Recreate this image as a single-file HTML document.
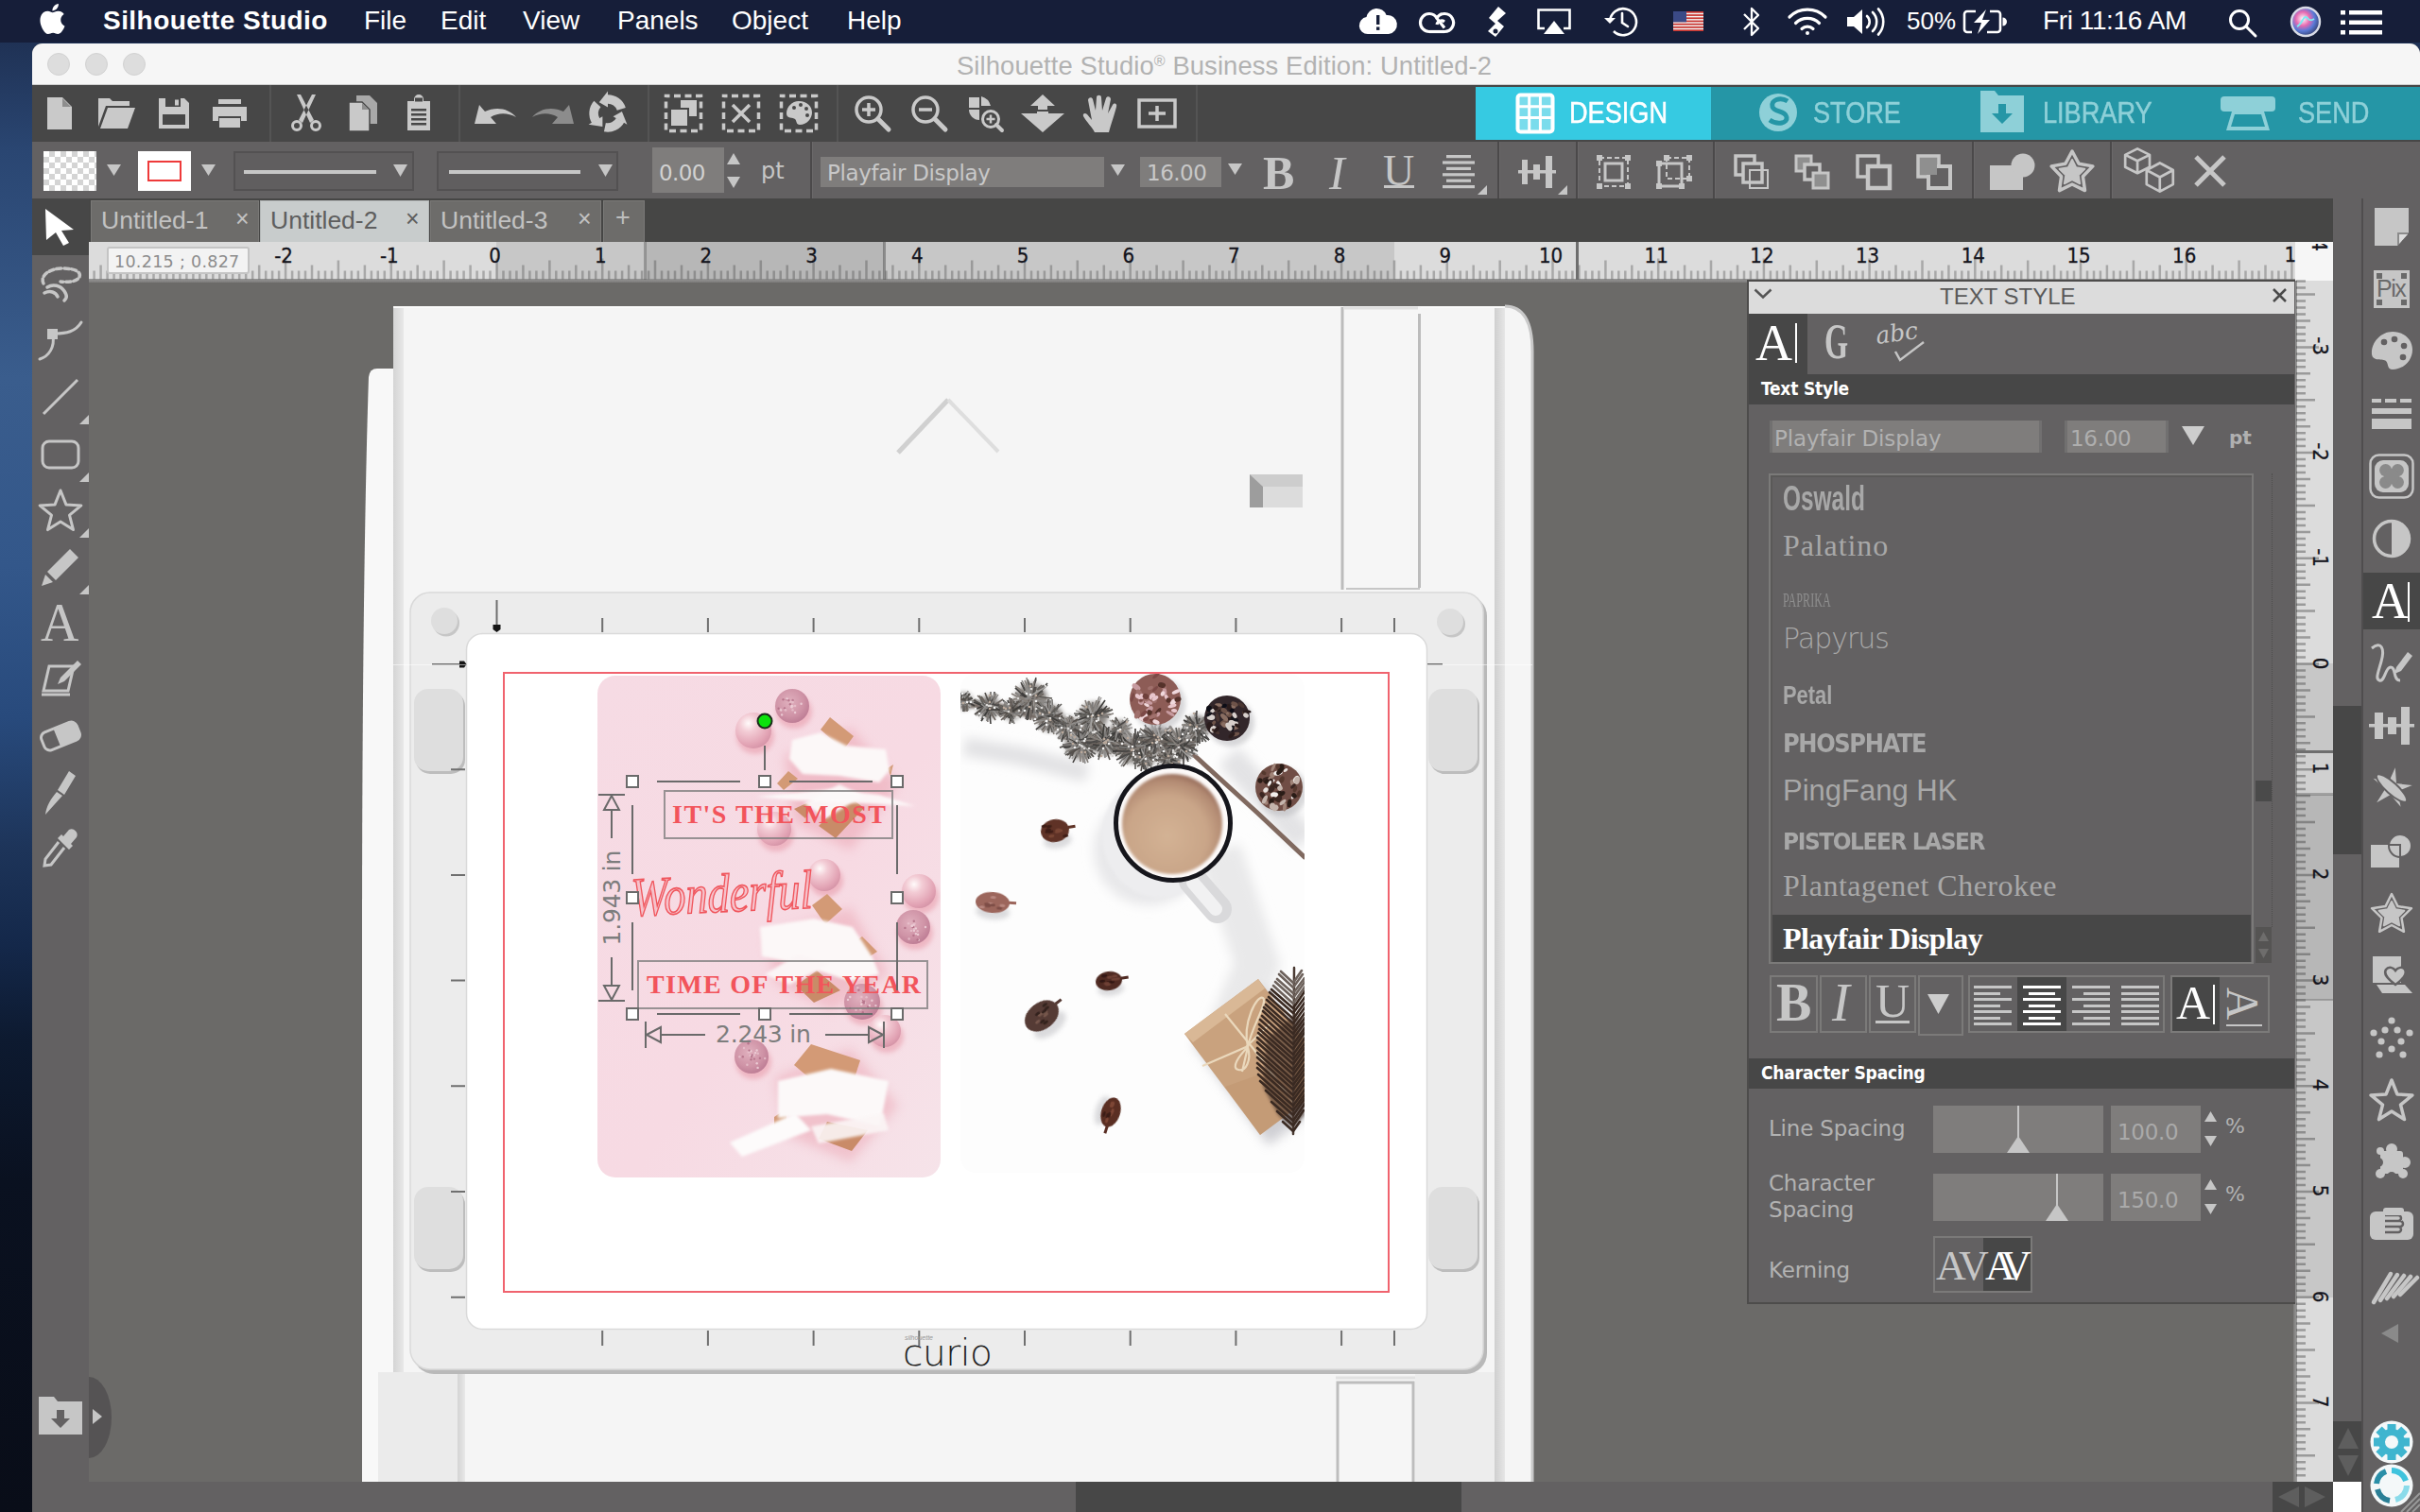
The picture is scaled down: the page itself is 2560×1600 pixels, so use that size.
<!DOCTYPE html>
<html lang="en"><head><meta charset="utf-8"><title>Silhouette Studio</title>
<style>
*{box-sizing:border-box;margin:0;padding:0}
html,body{width:2560px;height:1600px;overflow:hidden;background:#0c1424;font-family:"Liberation Sans",sans-serif}
.a{position:absolute}
.t{position:absolute;white-space:nowrap;line-height:1}
svg{position:absolute;overflow:visible}
#desk{left:0;top:0;width:2560px;height:1600px;background:linear-gradient(180deg,#1b2a4a 0px,#2a4672 160px,#3a5d8d 400px,#33578a 600px,#284a7c 760px,#1d3459 900px,#14284a 1000px,#0d1a30 1100px,#0a1120 1250px,#090d18 1600px)}
#menubar{left:0;top:0;width:2560px;height:45px;background:#161e39}
.mbt{color:#fff;font-size:28px;top:8px}
#win{left:34px;top:46px;width:2526px;height:1554px;background:#636162;border-radius:11px 11px 0 11px;overflow:hidden}
#title{left:34px;top:46px;width:2526px;height:44px;background:#f6f6f6;border-bottom:1px solid #cfcfcf;border-radius:11px 11px 0 0}
#tb1{left:34px;top:90px;width:2526px;height:60px;background:#474747}
#tb2{left:34px;top:150px;width:2526px;height:60px;background:#636162}
.sep1{position:absolute;top:90px;width:2px;height:60px;background:#545454}
.sep2{position:absolute;top:150px;width:2px;height:60px;background:#4b494a;box-shadow:1px 0 0 #6a6869}
.dj{font-family:"DejaVu Sans",sans-serif}
.rl{font-family:"DejaVu Sans Condensed","DejaVu Sans",sans-serif;font-size:22px;color:#14141c;-webkit-text-stroke:.3px #14141c}
</style></head><body>
<div id="desk" class="a"></div>
<div id="win" class="a"></div>
<div id="menubar" class="a"></div>
<div id="mb">
<svg style="left:42px;top:4px" width="27" height="32" viewBox="2 0 20 24"><path fill="#fff" d="M12.152 6.896c-.948 0-2.415-1.078-3.96-1.04-2.04.027-3.91 1.183-4.961 3.014-2.117 3.675-.546 9.103 1.519 12.09 1.013 1.454 2.208 3.09 3.792 3.039 1.52-.065 2.09-.987 3.935-.987 1.831 0 2.35.987 3.96.948 1.637-.026 2.676-1.48 3.676-2.948 1.156-1.688 1.636-3.325 1.662-3.415-.039-.013-3.182-1.221-3.22-4.857-.026-3.04 2.48-4.494 2.597-4.559-1.429-2.09-3.623-2.324-4.39-2.376-2-.156-3.675 1.09-4.61 1.09zM15.53 3.83c.843-1.012 1.4-2.427 1.245-3.83-1.207.052-2.662.805-3.532 1.818-.78.896-1.454 2.338-1.273 3.714 1.338.104 2.715-.688 3.559-1.701"/></svg>
<span class="t mbt" style="left:109px;font-weight:bold;letter-spacing:.45px">Silhouette Studio</span>
<span class="t mbt" style="left:385px">File</span>
<span class="t mbt" style="left:466px">Edit</span>
<span class="t mbt" style="left:553px">View</span>
<span class="t mbt" style="left:653px">Panels</span>
<span class="t mbt" style="left:774px">Object</span>
<span class="t mbt" style="left:896px">Help</span>
<span class="t mbt" style="left:2017px;font-size:26px;top:9px">50%</span>
<span class="t mbt" style="left:2161px;letter-spacing:-.4px">Fri 11:16 AM</span>
<!-- cloud -->
<svg style="left:1437px;top:8px" width="42" height="30" viewBox="0 0 42 30"><path fill="#fff" d="M10 28a9 9 0 0 1-1.5-17.9A11 11 0 0 1 29.6 8 10 10 0 0 1 32 28z"/><rect x="19" y="8" width="3.4" height="10" fill="#161e39"/><rect x="19" y="20.5" width="3.4" height="3.4" fill="#161e39"/></svg>
<!-- creative cloud -->
<svg style="left:1500px;top:9px" width="40" height="28" viewBox="0 0 40 28" fill="none" stroke="#fff" stroke-width="3.2"><path d="M12 24.5a9.5 9.5 0 0 1 0-19 9 9 0 0 1 8 5l8 10"/><path d="M28 24.5a9.5 9.5 0 1 0-8-14.5"/><path d="M12 24.5h16"/><path d="M20 17a5 5 0 0 1 8-3"/></svg>
<!-- S pen icon -->
<svg style="left:1568px;top:6px" width="28" height="34" viewBox="0 0 28 34"><path fill="#fff" d="M17 1l8 7-9 8 7 6-9 11-8-6 8-8-7-6z"/><circle cx="14" cy="27" r="2.5" fill="#161e39"/></svg>
<!-- airplay -->
<svg style="left:1625px;top:8px" width="38" height="30" viewBox="0 0 38 30"><path fill="none" stroke="#fff" stroke-width="2.6" d="M9 22H2.5V2.5h33V22H29"/><path fill="#fff" d="M19 14l11 14H8z"/></svg>
<!-- time machine -->
<svg style="left:1696px;top:5px" width="38" height="36" viewBox="0 0 38 36" fill="none" stroke="#fff" stroke-width="2.6"><path d="M7 18a14 14 0 1 1 4 10"/><path d="M20 9v10l6 4" stroke-linecap="round"/><path d="M1 14l6 6 6-6" fill="#fff" stroke="none"/></svg>
<!-- flag -->
<svg style="left:1770px;top:12px" width="32" height="21" viewBox="0 0 32 21"><rect width="32" height="21" fill="#f2f2f2"/><g fill="#c9342f"><rect y="0" width="32" height="1.7"/><rect y="3.2" width="32" height="1.7"/><rect y="6.4" width="32" height="1.7"/><rect y="9.6" width="32" height="1.7"/><rect y="12.8" width="32" height="1.7"/><rect y="16" width="32" height="1.7"/><rect y="19.3" width="32" height="1.7"/></g><rect width="14" height="11.3" fill="#3b4a86"/></svg>
<!-- bluetooth -->
<svg style="left:1843px;top:6px" width="20" height="34" viewBox="0 0 20 34" fill="none" stroke="#fff" stroke-width="2.3" stroke-linejoin="round"><path d="M2 9l15 15-7 7V3l7 7L2 25"/></svg>
<!-- wifi -->
<svg style="left:1890px;top:8px" width="44" height="30" viewBox="0 0 44 30" fill="none" stroke="#fff" stroke-width="3.2" stroke-linecap="round"><path d="M3 10a27 27 0 0 1 38 0"/><path d="M9.5 16.500a18 18 0 0 1 25 0"/><path d="M16 22.500a9 9 0 0 1 12 0"/><circle cx="22" cy="27" r="2" fill="#fff" stroke="none"/></svg>
<!-- volume -->
<svg style="left:1952px;top:8px" width="46" height="30" viewBox="0 0 46 30"><path fill="#fff" d="M2 10h7l9-8v26l-9-8H2z"/><g fill="none" stroke="#fff" stroke-width="2.6" stroke-linecap="round"><path d="M23 9a8 8 0 0 1 0 12"/><path d="M29 5a14 14 0 0 1 0 20"/><path d="M35 1.500a20 20 0 0 1 0 27"/></g></svg>
<!-- battery -->
<svg style="left:2076px;top:10px" width="48" height="26" viewBox="0 0 48 26"><path fill="none" stroke="#fff" stroke-width="2.6" d="M14 2H5a3 3 0 0 0-3 3v16a3 3 0 0 0 3 3h5M29 2h8a3 3 0 0 1 3 3v16a3 3 0 0 1-3 3H26"/><path fill="#fff" d="M42.500 8.500a4 4 0 0 1 0 9zM25 0l-13 14h8l-4 12 13-15h-8z"/></svg>
<!-- search -->
<svg style="left:2356px;top:8px" width="32" height="32" viewBox="0 0 32 32" fill="none" stroke="#fff" stroke-width="3"><circle cx="13" cy="13" r="9.500"/><path d="M20 20l10 10" stroke-linecap="round"/></svg>
<!-- siri -->
<svg style="left:2422px;top:6px" width="34" height="34" viewBox="0 0 34 34"><defs><radialGradient id="siri" cx=".4" cy=".4" r=".7"><stop offset="0" stop-color="#fff"/><stop offset=".35" stop-color="#e66ab0"/><stop offset=".6" stop-color="#5a7ad8"/><stop offset="1" stop-color="#2b2f4f"/></radialGradient></defs><circle cx="17" cy="17" r="15" fill="url(#siri)" stroke="#d8dbe6" stroke-width="2.4"/><path d="M8 22c5-2 6-10 9-10s3 6 9 2" stroke="#7fe9f2" stroke-width="2" fill="none"/></svg>
<!-- list -->
<svg style="left:2476px;top:11px" width="44" height="26" viewBox="0 0 44 26" fill="#fff"><rect x="0" y="0" width="5" height="4.500"/><rect x="9" y="0" width="35" height="4.500"/><rect x="0" y="10.500" width="5" height="4.500"/><rect x="9" y="10.500" width="35" height="4.500"/><rect x="0" y="21" width="5" height="4.500"/><rect x="9" y="21" width="35" height="4.500"/></svg>
</div>
<div class="a" style="left:94px;top:296px;width:2334px;height:1272px;background:#6b6a68"></div>
<div class="a" style="left:94px;top:210px;width:2374px;height:46px;background:#464645"></div>
<div class="a" style="left:96px;top:212px;width:178px;height:44px;background:#6d6c6a;border:1px solid #7a7977;border-bottom:none"></div>
<span class="t" style="left:107px;top:220px;font-size:26.500px;color:#c2c2c2">Untitled-1</span>
<span class="t" style="left:249px;top:219px;font-size:25px;color:#c2c2c2">×</span>
<div class="a" style="left:275px;top:212px;width:179px;height:44px;background:#c8cccc;border:1px solid #b4b8b8;border-bottom:none"></div>
<span class="t" style="left:286px;top:220px;font-size:26.500px;color:#5e5e5e">Untitled-2</span>
<span class="t" style="left:429px;top:219px;font-size:25px;color:#5e5e5e">×</span>
<div class="a" style="left:455px;top:212px;width:181px;height:44px;background:#6d6c6a;border:1px solid #7a7977;border-bottom:none"></div>
<span class="t" style="left:466px;top:220px;font-size:26.500px;color:#c2c2c2">Untitled-3</span>
<span class="t" style="left:611px;top:219px;font-size:25px;color:#c2c2c2">×</span>
<div class="a" style="left:638px;top:212px;width:44px;height:44px;background:#6d6c6a;border:1px solid #7a7977;border-bottom:none"></div><span class="t" style="left:651px;top:217px;font-size:27px;color:#bdbdbd">+</span>
<div class="a" style="left:34px;top:210px;width:60px;height:1390px;background:#636162"></div>
<div class="a" style="left:34px;top:210px;width:60px;height:60px;background:#474747"></div>
<svg style="left:48px;top:221px" width="32" height="38" viewBox="0 0 32 38"><path fill="#fff" d="M0 0l30 22-13 1 8 13-6 3-8-14-10 8z"/></svg>
<svg style="left:42px;top:280px" width="44" height="40" viewBox="0 0 44 40"><g fill="none" stroke="#c6c6c6" stroke-width="3.500" stroke-linecap="round"><path d="M4 20c-4-8 6-16 20-16s20 4 18 9-12 6-20 5" stroke-dasharray="5 3"/><path d="M8 24c6-4 14-2 18 4s2 8 0 10"/><path d="M5 30c6-3 12-1 14 4"/></g></svg>
<svg style="left:41px;top:339px" width="46" height="42" viewBox="0 0 46 42"><g fill="none" stroke="#c6c6c6" stroke-width="3" stroke-linecap="round"><path d="M45 2c-6 10-16 12-28 12"/><path d="M15 16c2 12-4 22-14 25"/></g><rect x="9" y="9" width="11" height="11" fill="#c6c6c6"/></svg>
<svg style="left:44px;top:400px" width="40" height="40" viewBox="0 0 40 40"><path d="M2 38L38 2" stroke="#c6c6c6" stroke-width="3"/></svg>
<svg style="left:43px;top:465px" width="42" height="32" viewBox="0 0 42 32"><rect x="2" y="2" width="38" height="28" rx="7" fill="none" stroke="#c6c6c6" stroke-width="3"/></svg>
<svg style="left:40px;top:517px" width="48" height="46" viewBox="0 0 48 46"><polygon points="24.0,2.0 29.9,16.9 45.9,17.9 33.5,28.1 37.5,43.6 24.0,35.0 10.5,43.6 14.5,28.1 2.1,17.9 18.1,16.9" fill="none" stroke="#c6c6c6" stroke-width="3" stroke-linejoin="round"/></svg>
<svg style="left:44px;top:580px" width="40" height="40" viewBox="0 0 40 40"><path fill="#c6c6c6" d="M30 1l9 9-24 24-9-9zM4 28l8 8-12 4z"/></svg>
<span class="t" style="left:43px;top:631px;font:56px 'Liberation Serif',serif;color:#c6c6c6;line-height:1">A</span>
<svg style="left:42px;top:699px" width="44" height="40" viewBox="0 0 44 40"><g fill="none" stroke="#c6c6c6" stroke-width="3"><path d="M10 6h26l-6 26H4z"/><path d="M2 36h30"/></g><path fill="#c6c6c6" d="M40 0l4 4-18 18-7 3 3-7z"/></svg>
<svg style="left:40px;top:761px" width="48" height="36" viewBox="0 0 48 36"><g transform="rotate(-22 24 18)"><rect x="4" y="8" width="40" height="20" rx="6" fill="none" stroke="#c6c6c6" stroke-width="3"/><path fill="#c6c6c6" d="M20 8h18a6 6 0 0 1 6 6v8a6 6 0 0 1-6 6H20z"/></g></svg>
<svg style="left:47px;top:816px" width="34" height="46" viewBox="0 0 34 46"><path fill="#c6c6c6" d="M26 0l7 5-12 20-7-5zM13 22l6 4-18 20c1-9 6-17 12-24z"/></svg>
<svg style="left:45px;top:878px" width="38" height="42" viewBox="0 0 38 42"><path fill="#c6c6c6" d="M28 0a6 6 0 0 1 8 8l-6 7 2 2-4 4-12-12 4-4 2 2z"/><path fill="none" stroke="#c6c6c6" stroke-width="3" d="M17 13L3 31l-1 7 7-1 14-18"/></svg>
<svg style="left:84px;top:439px" width="10" height="10"><path fill="#c6c6c6" d="M10 0v10H0z"/></svg>
<svg style="left:84px;top:500px" width="10" height="10"><path fill="#c6c6c6" d="M10 0v10H0z"/></svg>
<svg style="left:84px;top:559px" width="10" height="10"><path fill="#c6c6c6" d="M10 0v10H0z"/></svg>
<svg style="left:84px;top:619px" width="10" height="10"><path fill="#c6c6c6" d="M10 0v10H0z"/></svg>
<svg style="left:41px;top:1478px" width="46" height="40" viewBox="0 0 46 40"><path fill="#c6c6c6" d="M0 0h16l4 5h26v35H0z"/><path fill="#636162" d="M19 14h8v9h6L23 33 13 23h6z"/></svg>
<div class="a" style="left:94px;top:1457px;width:24px;height:86px;background:#555354;border-radius:0 24px 24px 0/0 43px 43px 0"></div>
<svg style="left:98px;top:1491px" width="10" height="16"><path fill="#c6c6c6" d="M0 0l10 8-10 8z"/></svg>
<div class="a" style="left:34px;top:1568px;width:2434px;height:32px;background:#636162"></div>
<div class="a" style="left:1138px;top:1568px;width:408px;height:32px;background:#474747"></div>
<div class="a" style="left:2404px;top:1568px;width:64px;height:32px;background:#474747"></div>
<svg style="left:2410px;top:1573px" width="22" height="22"><path fill="#5e5e5e" d="M22 0v22L0 11z"/></svg><svg style="left:2438px;top:1573px" width="22" height="22"><path fill="#5e5e5e" d="M0 0v22l22-11z"/></svg>
<div class="a" style="left:2468px;top:210px;width:92px;height:1390px;background:#636162"></div>
<div class="a" style="left:2468px;top:747px;width:31px;height:157px;background:#474747"></div>
<div class="a" style="left:2468px;top:1504px;width:31px;height:64px;background:#474747"></div>
<svg style="left:2473px;top:1511px" width="22" height="22"><path fill="#5e5e5e" d="M0 22h22L11 0z"/></svg><svg style="left:2473px;top:1540px" width="22" height="22"><path fill="#5e5e5e" d="M0 0h22L11 22z"/></svg>
<div class="a" style="left:2468px;top:1568px;width:31px;height:32px;background:#fff"></div>
<div class="a" style="left:2498px;top:210px;width:2px;height:1390px;background:#4f4d4e"></div>
<div class="a" style="left:94px;top:256px;width:431px;height:40px;background:#dcdcdc"></div>
<div class="a" style="left:525px;top:256px;width:158px;height:40px;background:#c7c7c7"></div>
<div class="a" style="left:683px;top:256px;width:252px;height:40px;background:#b7b7b7"></div>
<div class="a" style="left:935px;top:256px;width:540px;height:40px;background:#c7c7c7"></div>
<div class="a" style="left:1475px;top:256px;width:953px;height:40px;background:#dcdcdc"></div>
<div class="a" style="left:94px;top:295px;width:2334px;height:4px;background:linear-gradient(#969696,#7c7b7a)"></div>
<div class="a" style="left:2428px;top:256px;width:40px;height:41px;background:#f6f6f6"></div>
<svg style="left:0;top:0" width="2560" height="300"><path d="M99.6 295.500v-9M106.6 295.500v-15M113.6 295.500v-9M120.6 295.500v-9M127.6 295.500v-9M134.6 295.500v-20M141.5 295.500v-9M148.5 295.500v-9M155.5 295.500v-9M162.5 295.500v-15M169.5 295.500v-9M176.4 295.500v-9M183.4 295.500v-9M190.4 295.500v-22M197.4 295.500v-9M204.4 295.500v-9M211.3 295.500v-9M218.3 295.500v-15M225.3 295.500v-9M232.3 295.500v-9M239.3 295.500v-9M246.2 295.500v-20M253.2 295.500v-9M260.2 295.500v-9M267.2 295.500v-9M274.2 295.500v-15M281.2 295.500v-9M288.1 295.500v-9M295.1 295.500v-9M302.1 295.500v-22M309.1 295.500v-9M316.1 295.500v-9M323.0 295.500v-9M330.0 295.500v-15M337.0 295.500v-9M344.0 295.500v-9M351.0 295.500v-9M357.9 295.500v-20M364.9 295.500v-9M371.9 295.500v-9M378.9 295.500v-9M385.9 295.500v-15M392.9 295.500v-9M399.8 295.500v-9M406.8 295.500v-9M413.8 295.500v-22M420.8 295.500v-9M427.8 295.500v-9M434.7 295.500v-9M441.7 295.500v-15M448.7 295.500v-9M455.7 295.500v-9M462.7 295.500v-9M469.6 295.500v-20M476.6 295.500v-9M483.6 295.500v-9M490.6 295.500v-9M497.6 295.500v-15M504.6 295.500v-9M511.5 295.500v-9M518.5 295.500v-9M525.5 295.500v-22M532.5 295.500v-9M539.5 295.500v-9M546.4 295.500v-9M553.4 295.500v-15M560.4 295.500v-9M567.4 295.500v-9M574.4 295.500v-9M581.4 295.500v-20M588.3 295.500v-9M595.3 295.500v-9M602.3 295.500v-9M609.3 295.500v-15M616.3 295.500v-9M623.2 295.500v-9M630.2 295.500v-9M637.2 295.500v-22M644.2 295.500v-9M651.2 295.500v-9M658.1 295.500v-9M665.1 295.500v-15M672.1 295.500v-9M679.1 295.500v-9M686.1 295.500v-9M693.0 295.500v-20M700.0 295.500v-9M707.0 295.500v-9M714.0 295.500v-9M721.0 295.500v-15M728.0 295.500v-9M734.9 295.500v-9M741.9 295.500v-9M748.9 295.500v-22M755.9 295.500v-9M762.9 295.500v-9M769.8 295.500v-9M776.8 295.500v-15M783.8 295.500v-9M790.8 295.500v-9M797.8 295.500v-9M804.8 295.500v-20M811.7 295.500v-9M818.7 295.500v-9M825.7 295.500v-9M832.7 295.500v-15M839.7 295.500v-9M846.6 295.500v-9M853.6 295.500v-9M860.6 295.500v-22M867.6 295.500v-9M874.6 295.500v-9M881.5 295.500v-9M888.5 295.500v-15M895.5 295.500v-9M902.5 295.500v-9M909.5 295.500v-9M916.5 295.500v-20M923.4 295.500v-9M930.4 295.500v-9M937.4 295.500v-9M944.4 295.500v-15M951.4 295.500v-9M958.3 295.500v-9M965.3 295.500v-9M972.3 295.500v-22M979.3 295.500v-9M986.3 295.500v-9M993.2 295.500v-9M1000.2 295.500v-15M1007.2 295.500v-9M1014.2 295.500v-9M1021.2 295.500v-9M1028.2 295.500v-20M1035.1 295.500v-9M1042.1 295.500v-9M1049.1 295.500v-9M1056.1 295.500v-15M1063.1 295.500v-9M1070.0 295.500v-9M1077.0 295.500v-9M1084.0 295.500v-22M1091.0 295.500v-9M1098.0 295.500v-9M1104.9 295.500v-9M1111.9 295.500v-15M1118.9 295.500v-9M1125.9 295.500v-9M1132.9 295.500v-9M1139.8 295.500v-20M1146.8 295.500v-9M1153.8 295.500v-9M1160.8 295.500v-9M1167.8 295.500v-15M1174.8 295.500v-9M1181.7 295.500v-9M1188.7 295.500v-9M1195.7 295.500v-22M1202.7 295.500v-9M1209.7 295.500v-9M1216.6 295.500v-9M1223.6 295.500v-15M1230.6 295.500v-9M1237.6 295.500v-9M1244.6 295.500v-9M1251.6 295.500v-20M1258.5 295.500v-9M1265.5 295.500v-9M1272.5 295.500v-9M1279.5 295.500v-15M1286.5 295.500v-9M1293.4 295.500v-9M1300.4 295.500v-9M1307.4 295.500v-22M1314.4 295.500v-9M1321.4 295.500v-9M1328.3 295.500v-9M1335.3 295.500v-15M1342.3 295.500v-9M1349.3 295.500v-9M1356.3 295.500v-9M1363.2 295.500v-20M1370.2 295.500v-9M1377.2 295.500v-9M1384.2 295.500v-9M1391.2 295.500v-15M1398.2 295.500v-9M1405.1 295.500v-9M1412.1 295.500v-9M1419.1 295.500v-22M1426.1 295.500v-9M1433.1 295.500v-9M1440.0 295.500v-9M1447.0 295.500v-15M1454.0 295.500v-9M1461.0 295.500v-9M1468.0 295.500v-9M1475.0 295.500v-20M1481.9 295.500v-9M1488.9 295.500v-9M1495.9 295.500v-9M1502.9 295.500v-15M1509.9 295.500v-9M1516.8 295.500v-9M1523.8 295.500v-9M1530.8 295.500v-22M1537.8 295.500v-9M1544.8 295.500v-9M1551.7 295.500v-9M1558.7 295.500v-15M1565.7 295.500v-9M1572.7 295.500v-9M1579.7 295.500v-9M1586.7 295.500v-20M1593.6 295.500v-9M1600.6 295.500v-9M1607.6 295.500v-9M1614.6 295.500v-15M1621.6 295.500v-9M1628.5 295.500v-9M1635.5 295.500v-9M1642.5 295.500v-22M1649.5 295.500v-9M1656.5 295.500v-9M1663.4 295.500v-9M1670.4 295.500v-15M1677.4 295.500v-9M1684.4 295.500v-9M1691.4 295.500v-9M1698.4 295.500v-20M1705.3 295.500v-9M1712.3 295.500v-9M1719.3 295.500v-9M1726.3 295.500v-15M1733.3 295.500v-9M1740.2 295.500v-9M1747.2 295.500v-9M1754.2 295.500v-22M1761.2 295.500v-9M1768.2 295.500v-9M1775.1 295.500v-9M1782.1 295.500v-15M1789.1 295.500v-9M1796.1 295.500v-9M1803.1 295.500v-9M1810.0 295.500v-20M1817.0 295.500v-9M1824.0 295.500v-9M1831.0 295.500v-9M1838.0 295.500v-15M1845.0 295.500v-9M1851.9 295.500v-9M1858.9 295.500v-9M1865.9 295.500v-22M1872.9 295.500v-9M1879.9 295.500v-9M1886.8 295.500v-9M1893.8 295.500v-15M1900.8 295.500v-9M1907.8 295.500v-9M1914.8 295.500v-9M1921.8 295.500v-20M1928.7 295.500v-9M1935.7 295.500v-9M1942.7 295.500v-9M1949.7 295.500v-15M1956.7 295.500v-9M1963.6 295.500v-9M1970.6 295.500v-9M1977.6 295.500v-22M1984.6 295.500v-9M1991.6 295.500v-9M1998.5 295.500v-9M2005.5 295.500v-15M2012.5 295.500v-9M2019.5 295.500v-9M2026.5 295.500v-9M2033.5 295.500v-20M2040.4 295.500v-9M2047.4 295.500v-9M2054.4 295.500v-9M2061.4 295.500v-15M2068.4 295.500v-9M2075.3 295.500v-9M2082.3 295.500v-9M2089.3 295.500v-22M2096.3 295.500v-9M2103.3 295.500v-9M2110.2 295.500v-9M2117.2 295.500v-15M2124.2 295.500v-9M2131.2 295.500v-9M2138.2 295.500v-9M2145.2 295.500v-20M2152.1 295.500v-9M2159.1 295.500v-9M2166.1 295.500v-9M2173.1 295.500v-15M2180.1 295.500v-9M2187.0 295.500v-9M2194.0 295.500v-9M2201.0 295.500v-22M2208.0 295.500v-9M2215.0 295.500v-9M2221.9 295.500v-9M2228.9 295.500v-15M2235.9 295.500v-9M2242.9 295.500v-9M2249.9 295.500v-9M2256.9 295.500v-20M2263.8 295.500v-9M2270.8 295.500v-9M2277.8 295.500v-9M2284.8 295.500v-15M2291.8 295.500v-9M2298.7 295.500v-9M2305.7 295.500v-9M2312.7 295.500v-22M2319.7 295.500v-9M2326.7 295.500v-9M2333.6 295.500v-9M2340.6 295.500v-15M2347.6 295.500v-9M2354.6 295.500v-9M2361.6 295.500v-9M2368.6 295.500v-20M2375.5 295.500v-9M2382.5 295.500v-9M2389.5 295.500v-9M2396.5 295.500v-15M2403.5 295.500v-9M2410.4 295.500v-9M2417.4 295.500v-9M2424.4 295.500v-22" stroke="rgba(50,50,50,.3)" stroke-width="2.500" fill="none"/></svg>
<span class="t rl" style="left:270.1px;top:260px;width:60px;text-align:center">-2</span>
<span class="t rl" style="left:381.8px;top:260px;width:60px;text-align:center">-1</span>
<span class="t rl" style="left:493.5px;top:260px;width:60px;text-align:center">0</span>
<span class="t rl" style="left:605.2px;top:260px;width:60px;text-align:center">1</span>
<span class="t rl" style="left:716.9px;top:260px;width:60px;text-align:center">2</span>
<span class="t rl" style="left:828.6px;top:260px;width:60px;text-align:center">3</span>
<span class="t rl" style="left:940.3px;top:260px;width:60px;text-align:center">4</span>
<span class="t rl" style="left:1052.0px;top:260px;width:60px;text-align:center">5</span>
<span class="t rl" style="left:1163.7px;top:260px;width:60px;text-align:center">6</span>
<span class="t rl" style="left:1275.4px;top:260px;width:60px;text-align:center">7</span>
<span class="t rl" style="left:1387.1px;top:260px;width:60px;text-align:center">8</span>
<span class="t rl" style="left:1498.8px;top:260px;width:60px;text-align:center">9</span>
<span class="t rl" style="left:1610.5px;top:260px;width:60px;text-align:center">10</span>
<span class="t rl" style="left:1722.2px;top:260px;width:60px;text-align:center">11</span>
<span class="t rl" style="left:1833.9px;top:260px;width:60px;text-align:center">12</span>
<span class="t rl" style="left:1945.6px;top:260px;width:60px;text-align:center">13</span>
<span class="t rl" style="left:2057.3px;top:260px;width:60px;text-align:center">14</span>
<span class="t rl" style="left:2169.0px;top:260px;width:60px;text-align:center">15</span>
<span class="t rl" style="left:2280.7px;top:260px;width:60px;text-align:center">16</span>
<span class="t rl" style="left:2416.4px;top:259px">1</span>
<div class="a" style="left:681px;top:256px;width:3px;height:40px;background:rgba(90,90,90,.45)"></div>
<div class="a" style="left:934px;top:256px;width:3px;height:40px;background:rgba(90,90,90,.55)"></div>
<div class="a" style="left:1667px;top:256px;width:3px;height:40px;background:#6e6e6e"></div>
<div class="a" style="left:113px;top:261px;width:151px;height:29px;background:#f3f3f3;border:2px solid #c4c4c4;border-radius:3px"></div>
<span class="t dj" style="left:121px;top:269px;font-size:17.500px;color:#8c8c8c;letter-spacing:.3px">10.215 ; 0.827</span>
<div class="a" style="left:2428px;top:297px;width:40px;height:405px;background:#dcdcdc"></div>
<div class="a" style="left:2428px;top:702px;width:40px;height:92px;background:#c7c7c7"></div>
<div class="a" style="left:2428px;top:794px;width:40px;height:47px;background:#d0d0d0"></div>
<div class="a" style="left:2428px;top:841px;width:40px;height:217px;background:#b7b7b7"></div>
<div class="a" style="left:2428px;top:1058px;width:40px;height:315px;background:#c7c7c7"></div>
<div class="a" style="left:2428px;top:1373px;width:40px;height:195px;background:#dcdcdc"></div>
<div class="a" style="left:2426px;top:297px;width:4px;height:1271px;background:linear-gradient(90deg,#7c7b7a,#9a9a9a)"></div>
<svg style="left:0;top:0" width="2560" height="1600"><path d="M2429 297.6h10M2429 304.6h10M2429 311.6h20M2429 318.5h10M2429 325.5h10M2429 332.5h10M2429 339.5h15M2429 346.5h10M2429 353.4h10M2429 360.4h10M2429 367.4h24M2429 374.4h10M2429 381.4h10M2429 388.3h10M2429 395.3h15M2429 402.3h10M2429 409.3h10M2429 416.3h10M2429 423.2h20M2429 430.2h10M2429 437.2h10M2429 444.2h10M2429 451.2h15M2429 458.2h10M2429 465.1h10M2429 472.1h10M2429 479.1h24M2429 486.1h10M2429 493.1h10M2429 500.0h10M2429 507.0h15M2429 514.0h10M2429 521.0h10M2429 528.0h10M2429 535.0h20M2429 541.9h10M2429 548.9h10M2429 555.9h10M2429 562.9h15M2429 569.9h10M2429 576.8h10M2429 583.8h10M2429 590.8h24M2429 597.8h10M2429 604.8h10M2429 611.7h10M2429 618.7h15M2429 625.7h10M2429 632.7h10M2429 639.7h10M2429 646.6h20M2429 653.6h10M2429 660.6h10M2429 667.6h10M2429 674.6h15M2429 681.6h10M2429 688.5h10M2429 695.5h10M2429 702.5h24M2429 709.5h10M2429 716.5h10M2429 723.4h10M2429 730.4h15M2429 737.4h10M2429 744.4h10M2429 751.4h10M2429 758.4h20M2429 765.3h10M2429 772.3h10M2429 779.3h10M2429 786.3h15M2429 793.3h10M2429 800.2h10M2429 807.2h10M2429 814.2h24M2429 821.2h10M2429 828.2h10M2429 835.1h10M2429 842.1h15M2429 849.1h10M2429 856.1h10M2429 863.1h10M2429 870.0h20M2429 877.0h10M2429 884.0h10M2429 891.0h10M2429 898.0h15M2429 905.0h10M2429 911.9h10M2429 918.9h10M2429 925.9h24M2429 932.9h10M2429 939.9h10M2429 946.8h10M2429 953.8h15M2429 960.8h10M2429 967.8h10M2429 974.8h10M2429 981.8h20M2429 988.7h10M2429 995.7h10M2429 1002.7h10M2429 1009.7h15M2429 1016.7h10M2429 1023.6h10M2429 1030.6h10M2429 1037.6h24M2429 1044.6h10M2429 1051.6h10M2429 1058.5h10M2429 1065.5h15M2429 1072.5h10M2429 1079.5h10M2429 1086.5h10M2429 1093.5h20M2429 1100.4h10M2429 1107.4h10M2429 1114.4h10M2429 1121.4h15M2429 1128.4h10M2429 1135.3h10M2429 1142.3h10M2429 1149.3h24M2429 1156.3h10M2429 1163.3h10M2429 1170.2h10M2429 1177.2h15M2429 1184.2h10M2429 1191.2h10M2429 1198.2h10M2429 1205.2h20M2429 1212.1h10M2429 1219.1h10M2429 1226.1h10M2429 1233.1h15M2429 1240.1h10M2429 1247.0h10M2429 1254.0h10M2429 1261.0h24M2429 1268.0h10M2429 1275.0h10M2429 1281.9h10M2429 1288.9h15M2429 1295.9h10M2429 1302.9h10M2429 1309.9h10M2429 1316.8h20M2429 1323.8h10M2429 1330.8h10M2429 1337.8h10M2429 1344.8h15M2429 1351.8h10M2429 1358.7h10M2429 1365.7h10M2429 1372.7h24M2429 1379.7h10M2429 1386.7h10M2429 1393.6h10M2429 1400.6h15M2429 1407.6h10M2429 1414.6h10M2429 1421.6h10M2429 1428.6h20M2429 1435.5h10M2429 1442.5h10M2429 1449.5h10M2429 1456.5h15M2429 1463.5h10M2429 1470.4h10M2429 1477.4h10M2429 1484.4h24M2429 1491.4h10M2429 1498.4h10M2429 1505.3h10M2429 1512.3h15M2429 1519.3h10M2429 1526.3h10M2429 1533.3h10M2429 1540.2h20M2429 1547.2h10M2429 1554.2h10M2429 1561.2h10" stroke="rgba(40,40,40,.36)" stroke-width="2.500" fill="none"/></svg>
<span class="t rl" style="left:2424px;top:355.4px;width:60px;height:22px;text-align:center;transform:rotate(90deg)">-3</span>
<span class="t rl" style="left:2424px;top:467.1px;width:60px;height:22px;text-align:center;transform:rotate(90deg)">-2</span>
<span class="t rl" style="left:2424px;top:578.8px;width:60px;height:22px;text-align:center;transform:rotate(90deg)">-1</span>
<span class="t rl" style="left:2424px;top:690.5px;width:60px;height:22px;text-align:center;transform:rotate(90deg)">0</span>
<span class="t rl" style="left:2424px;top:802.2px;width:60px;height:22px;text-align:center;transform:rotate(90deg)">1</span>
<span class="t rl" style="left:2424px;top:913.9px;width:60px;height:22px;text-align:center;transform:rotate(90deg)">2</span>
<span class="t rl" style="left:2424px;top:1025.6px;width:60px;height:22px;text-align:center;transform:rotate(90deg)">3</span>
<span class="t rl" style="left:2424px;top:1137.3px;width:60px;height:22px;text-align:center;transform:rotate(90deg)">4</span>
<span class="t rl" style="left:2424px;top:1249.0px;width:60px;height:22px;text-align:center;transform:rotate(90deg)">5</span>
<span class="t rl" style="left:2424px;top:1360.7px;width:60px;height:22px;text-align:center;transform:rotate(90deg)">6</span>
<span class="t rl" style="left:2424px;top:1472.4px;width:60px;height:22px;text-align:center;transform:rotate(90deg)">7</span>
<span class="t rl" style="left:2424px;top:246px;width:60px;height:20px;text-align:center;transform:rotate(90deg);clip-path:inset(0 0 0 32px)">-4</span>
<div class="a" style="left:2428px;top:794px;width:40px;height:3px;background:#6e6e6e"></div>
<div class="a" style="left:2428px;top:839px;width:40px;height:3px;background:rgba(90,90,90,.4)"></div>
<div class="a" style="left:2428px;top:1057px;width:40px;height:2px;background:rgba(90,90,90,.35)"></div>
<svg style="left:0;top:0" width="2560" height="1600" viewBox="0 0 2560 1600"><defs><clipPath id="cv"><rect x="94" y="298" width="2332" height="1270"/></clipPath><linearGradient id="lstrip" x1="0" x2="1"><stop offset="0" stop-color="#d4d4d4"/><stop offset="1" stop-color="#e8e8e8"/></linearGradient><linearGradient id="rstrip" x1="0" x2="1"><stop offset="0" stop-color="#cfcfcf"/><stop offset="1" stop-color="#e6e6e6"/></linearGradient></defs><g clip-path="url(#cv)"><path d="M417 390H399Q391 390 390 399C386 520 383 720 383 1000V1568H417Z" fill="#f8f8f8"/><path d="M416 324H1591Q1621 324 1621 372V1568H416Z" fill="#f5f5f5"/><path d="M1592 324Q1621 324 1621 372V1568" fill="none" stroke="#c9c9c9" stroke-width="3"/><rect x="416" y="325" width="11" height="1127" fill="url(#lstrip)"/><rect x="416" y="324" width="1176" height="2" fill="#fafafa"/><rect x="1581" y="326" width="11" height="1242" fill="url(#rstrip)"/><rect x="1418" y="325" width="85" height="300" fill="#f6f6f6"/><path d="M1420 325V624M1501.500 332V622" stroke="#bcbcbc" stroke-width="3" fill="none"/><path d="M1424 623H1502" stroke="#c6c6c6" stroke-width="2"/><path d="M1421 326H1500" stroke="#e0e0e0" stroke-width="3"/><path d="M950 479L1003 423" stroke="#d0d0d0" stroke-width="5" fill="none"/><path d="M1003 423L1056 478" stroke="#dedede" stroke-width="4" fill="none"/><rect x="1322" y="502" width="56" height="35" fill="#dcdcdc"/><path d="M1322 502h56v13h-43z" fill="#cdcdcd"/><path d="M1322 502l14 13v22h-14z" fill="#9d9d9d"/><rect x="400" y="1452" width="88" height="116" fill="#ebebeb"/><rect x="484" y="1454" width="8" height="114" fill="url(#lstrip)"/><rect x="1413" y="1461" width="84" height="107" fill="#f6f6f6"/><path d="M1415 1568V1463H1495V1568" stroke="#bdbdbd" stroke-width="3" fill="none"/><path d="M1413 1458H1497" stroke="#e2e2e2" stroke-width="3"/><rect x="1497" y="1452" width="84" height="116" fill="#ededed"/><rect x="437" y="630" width="1136" height="824" rx="22" fill="#b9b9b9"/><rect x="434" y="627" width="1135" height="822" rx="21" fill="#ececec" stroke="#d9d9d9" stroke-width="1.500"/><rect x="440" y="732" width="52" height="87" rx="15" fill="#bdbdbd"/><rect x="438" y="729" width="52" height="87" rx="15" fill="#dedede"/><rect x="440" y="1259" width="52" height="87" rx="15" fill="#bdbdbd"/><rect x="438" y="1256" width="52" height="87" rx="15" fill="#dedede"/><rect x="1513" y="732" width="52" height="87" rx="15" fill="#bdbdbd"/><rect x="1511" y="729" width="52" height="87" rx="15" fill="#dedede"/><rect x="1513" y="1259" width="52" height="87" rx="15" fill="#bdbdbd"/><rect x="1511" y="1256" width="52" height="87" rx="15" fill="#dedede"/><rect x="493.500" y="670.500" width="1016" height="736" rx="17" fill="#fff" stroke="#dadada" stroke-width="1.500"/><circle cx="472" cy="659.5" r="14" fill="#c6c6c6"/><circle cx="470" cy="657" r="14" fill="#dedede"/><circle cx="1536" cy="660.5" r="14" fill="#c6c6c6"/><circle cx="1534" cy="658" r="14" fill="#dedede"/><path d="M637.2 654V669M637.2 1408V1424M748.9 654V669M748.9 1408V1424M860.6 654V669M860.6 1408V1424M972.3 654V669M972.3 1408V1424M1084.0 654V669M1084.0 1408V1424M1195.7 654V669M1195.7 1408V1424M1307.4 654V669M1307.4 1408V1424M1419.1 654V669M1419.1 1408V1424M1475.0 654V669M1475.0 1408V1424M477 814.2H492M477 925.9H492M477 1037.6H492M477 1149.3H492M477 1261.0H492M477 1372.7H492M1510 703H1526M525.500 635V664M457 703H489" stroke="#6f6f6f" stroke-width="2" fill="none"/><path d="M521.500 661h8v5l-4 3-4-3zM486 699.500h5l2.500 3.500-2.500 3.500h-5z" fill="#151515"/><path d="M416 703.500H493M1510 703.500H1621" stroke="#fff" stroke-opacity=".55" stroke-width="1"/><rect x="533" y="712" width="936" height="655" fill="none" stroke="#f0636e" stroke-width="2"/></g></svg>
<span class="t" style="left:955px;top:1409px;font:300 39px 'DejaVu Sans Light','DejaVu Sans',sans-serif;color:#222;letter-spacing:-.5px">curio</span>
<span class="t" style="left:957px;top:1412px;font:italic 7px 'Liberation Sans',sans-serif;color:#999">silhouette</span>
<svg style="left:0;top:0" width="2560" height="1600" viewBox="0 0 2560 1600"><defs>
<clipPath id="pk"><rect x="632" y="715" width="363" height="531" rx="19"/></clipPath>
<clipPath id="wh"><rect x="1016" y="713" width="364" height="528" rx="16"/></clipPath>
<filter id="b05" x="-20%" y="-20%" width="140%" height="140%"><feGaussianBlur stdDeviation="0.7"/></filter>
<filter id="b1" x="-20%" y="-20%" width="140%" height="140%"><feGaussianBlur stdDeviation="1.6"/></filter>
<filter id="b2" x="-30%" y="-30%" width="160%" height="160%"><feGaussianBlur stdDeviation="2.5"/></filter>
<filter id="b4" x="-40%" y="-40%" width="180%" height="180%"><feGaussianBlur stdDeviation="6"/></filter>
<radialGradient id="ballB" cx=".36" cy=".3" r=".8"><stop offset="0" stop-color="#fffafa"/><stop offset=".3" stop-color="#f3ccd5"/><stop offset=".75" stop-color="#e2a3b4"/><stop offset="1" stop-color="#cf8da1"/></radialGradient>
<radialGradient id="ballC" cx=".42" cy=".38" r=".7"><stop offset="0" stop-color="#e0b0be"/><stop offset=".6" stop-color="#cf93a6"/><stop offset="1" stop-color="#b97790"/></radialGradient>
<radialGradient id="cof" cx=".45" cy=".62" r=".62"><stop offset="0" stop-color="#d3b294"/><stop offset=".65" stop-color="#c9a588"/><stop offset=".9" stop-color="#b28a72"/><stop offset="1" stop-color="#9a705e"/></radialGradient>
<linearGradient id="pkbg" x1="0" y1="0" x2="1" y2="1"><stop offset="0" stop-color="#f6dbe4"/><stop offset=".55" stop-color="#f7dae3"/><stop offset="1" stop-color="#f6e3e9"/></linearGradient>
</defs>
<g clip-path="url(#pk)">
<rect x="632" y="715" width="363" height="531" fill="url(#pkbg)"/>
<polygon points="830,800 900,770 950,830 900,900 840,870" fill="#eba5b2" opacity="0.55" filter="url(#b4)"/>
<ellipse cx="840" cy="753" rx="19" ry="18" fill="#e590a0" opacity=".5" filter="url(#b2)"/><circle cx="838" cy="747" r="18" fill="url(#ballC)" filter="url(#b05)"/><g opacity=".8"><circle cx="830.0" cy="749.5" r="1.2" fill="#b06c84"/><circle cx="825.8" cy="750.8" r="1.2" fill="#e9c4cf"/><circle cx="841.1" cy="754.0" r="1.2" fill="#f2d8df"/><circle cx="835.9" cy="745.2" r="1.2" fill="#b06c84"/><circle cx="837.6" cy="748.3" r="1.2" fill="#f2d8df"/><circle cx="832.1" cy="740.3" r="1.2" fill="#b06c84"/><circle cx="847.6" cy="744.8" r="1.2" fill="#f2d8df"/><circle cx="832.5" cy="739.4" r="1.2" fill="#f2d8df"/><circle cx="838.5" cy="747.2" r="1.2" fill="#e9c4cf"/><circle cx="828.5" cy="740.2" r="1.2" fill="#b06c84"/><circle cx="826.2" cy="751.6" r="1.2" fill="#f2d8df"/><circle cx="838.5" cy="751.4" r="1.2" fill="#e9c4cf"/><circle cx="834.4" cy="741.2" r="1.2" fill="#b06c84"/><circle cx="831.1" cy="751.6" r="1.2" fill="#e9c4cf"/><circle cx="836.8" cy="742.4" r="1.2" fill="#e9c4cf"/><circle cx="837.6" cy="747.0" r="1.2" fill="#f2d8df"/><circle cx="838.6" cy="741.0" r="1.2" fill="#b06c84"/><circle cx="827.1" cy="756.4" r="1.2" fill="#f2d8df"/><circle cx="841.1" cy="747.0" r="1.2" fill="#e9c4cf"/><circle cx="823.6" cy="749.8" r="1.2" fill="#b06c84"/><circle cx="830.6" cy="751.1" r="1.2" fill="#e9c4cf"/><circle cx="838.7" cy="743.0" r="1.2" fill="#e9c4cf"/></g>
<ellipse cx="799" cy="779" rx="20" ry="19" fill="#e590a0" opacity=".5" filter="url(#b2)"/><circle cx="797" cy="773" r="19" fill="url(#ballB)" filter="url(#b05)"/>
<polygon points="868,772 878,759 903,779 892,794" fill="#d39a76" opacity="1" filter="url(#b05)"/>
<polygon points="822,829 834,816 844,824 829,836" fill="#d39a76" opacity="1" filter="url(#b05)"/>
<polygon points="866,874 897,842 914,855 884,887" fill="#c98b68" opacity="1" filter="url(#b05)"/>
<polygon points="840,856 862,846 852,866" fill="#c98b68" opacity="1" filter="url(#b05)"/>
<polygon points="939,813 945,809 942,821" fill="#d39a76" opacity="1" filter="url(#b05)"/>
<polygon points="838,783 868,775 895,789 937,793 941,815 930,828 888,821 849,819 835,803" fill="#fcf8f8" opacity="1" filter="url(#b1)"/>
<polygon points="850,850 888,830 913,842 874,866" fill="#fbf4f5" opacity="1" filter="url(#b1)"/>
<polygon points="800,843 878,835 930,841 968,853 912,850 843,847" fill="#fdfafa" opacity="0.95" filter="url(#b1)"/>
<ellipse cx="821" cy="883" rx="19" ry="18" fill="#e590a0" opacity=".5" filter="url(#b2)"/><circle cx="819" cy="877" r="18" fill="url(#ballB)" filter="url(#b05)"/>
<ellipse cx="874" cy="932" rx="18" ry="17" fill="#e590a0" opacity=".5" filter="url(#b2)"/><circle cx="872" cy="926" r="17" fill="url(#ballB)" filter="url(#b05)"/>
<ellipse cx="974" cy="949" rx="19" ry="18" fill="#e590a0" opacity=".5" filter="url(#b2)"/><circle cx="972" cy="943" r="18" fill="url(#ballB)" filter="url(#b05)"/>
<ellipse cx="968" cy="987" rx="19" ry="18" fill="#e590a0" opacity=".5" filter="url(#b2)"/><circle cx="966" cy="981" r="18" fill="url(#ballC)" filter="url(#b05)"/><g opacity=".8"><circle cx="965.9" cy="981.2" r="1.2" fill="#b06c84"/><circle cx="966.1" cy="979.2" r="1.2" fill="#e9c4cf"/><circle cx="966.0" cy="980.8" r="1.2" fill="#b06c84"/><circle cx="966.8" cy="978.5" r="1.2" fill="#f2d8df"/><circle cx="968.9" cy="988.1" r="1.2" fill="#f2d8df"/><circle cx="966.8" cy="974.8" r="1.2" fill="#b06c84"/><circle cx="970.7" cy="985.2" r="1.2" fill="#e9c4cf"/><circle cx="979.0" cy="981.0" r="1.2" fill="#f2d8df"/><circle cx="961.6" cy="993.5" r="1.2" fill="#e9c4cf"/><circle cx="971.7" cy="994.8" r="1.2" fill="#f2d8df"/><circle cx="965.1" cy="979.8" r="1.2" fill="#e9c4cf"/><circle cx="966.9" cy="984.8" r="1.2" fill="#f2d8df"/><circle cx="963.9" cy="984.9" r="1.2" fill="#e9c4cf"/><circle cx="968.8" cy="982.4" r="1.2" fill="#f2d8df"/><circle cx="966.4" cy="990.0" r="1.2" fill="#b06c84"/><circle cx="964.6" cy="979.7" r="1.2" fill="#f2d8df"/><circle cx="957.4" cy="981.9" r="1.2" fill="#b06c84"/><circle cx="966.9" cy="983.1" r="1.2" fill="#e9c4cf"/><circle cx="967.5" cy="977.6" r="1.2" fill="#e9c4cf"/><circle cx="971.1" cy="988.9" r="1.2" fill="#f2d8df"/><circle cx="970.7" cy="994.5" r="1.2" fill="#b06c84"/><circle cx="961.0" cy="977.2" r="1.2" fill="#e9c4cf"/></g>
<polygon points="810,990 900,960 940,1030 880,1070 820,1040" fill="#eba5b2" opacity="0.5" filter="url(#b4)"/>
<polygon points="859,958 875,946 891,962 873,978" fill="#d39a76" opacity="1" filter="url(#b05)"/>
<polygon points="895,1003 912,991 928,1007 917,1014" fill="#d39a76" opacity="1" filter="url(#b05)"/>
<polygon points="842,1043 864,1027 889,1048 861,1061" fill="#c98b68" opacity="1" filter="url(#b05)"/>
<polygon points="804,981 861,972 902,981 923,1013 930,1031 899,1038 844,1020 806,1012" fill="#fcf8f8" opacity="1" filter="url(#b1)"/>
<polygon points="809,1031 844,1010 878,1020 835,1042" fill="#fbf5f6" opacity="1" filter="url(#b1)"/>
<ellipse cx="914" cy="1066" rx="20" ry="19" fill="#e590a0" opacity=".5" filter="url(#b2)"/><circle cx="912" cy="1060" r="19" fill="url(#ballC)" filter="url(#b05)"/><g opacity=".8"><circle cx="918.3" cy="1065.2" r="1.2" fill="#b06c84"/><circle cx="912.8" cy="1071.2" r="1.2" fill="#b06c84"/><circle cx="899.3" cy="1066.9" r="1.2" fill="#b06c84"/><circle cx="911.2" cy="1062.7" r="1.2" fill="#f2d8df"/><circle cx="914.0" cy="1059.7" r="1.2" fill="#b06c84"/><circle cx="899.3" cy="1055.0" r="1.2" fill="#f2d8df"/><circle cx="915.0" cy="1061.5" r="1.2" fill="#e9c4cf"/><circle cx="912.0" cy="1058.9" r="1.2" fill="#b06c84"/><circle cx="911.1" cy="1060.3" r="1.2" fill="#e9c4cf"/><circle cx="910.3" cy="1068.3" r="1.2" fill="#e9c4cf"/><circle cx="913.9" cy="1061.2" r="1.2" fill="#b06c84"/><circle cx="922.4" cy="1058.7" r="1.2" fill="#f2d8df"/><circle cx="897.0" cy="1057.9" r="1.2" fill="#f2d8df"/><circle cx="912.3" cy="1060.1" r="1.2" fill="#b06c84"/><circle cx="907.3" cy="1045.3" r="1.2" fill="#e9c4cf"/><circle cx="911.0" cy="1059.3" r="1.2" fill="#e9c4cf"/><circle cx="911.4" cy="1054.9" r="1.2" fill="#e9c4cf"/><circle cx="919.8" cy="1064.0" r="1.2" fill="#f2d8df"/><circle cx="926.4" cy="1064.1" r="1.2" fill="#f2d8df"/><circle cx="908.4" cy="1047.8" r="1.2" fill="#b06c84"/><circle cx="905.5" cy="1068.8" r="1.2" fill="#e9c4cf"/><circle cx="916.6" cy="1055.2" r="1.2" fill="#e9c4cf"/></g>
<ellipse cx="938" cy="1097" rx="18" ry="17" fill="#e590a0" opacity=".5" filter="url(#b2)"/><circle cx="936" cy="1091" r="17" fill="url(#ballB)" filter="url(#b05)"/>
<ellipse cx="797" cy="1124" rx="19" ry="18" fill="#e590a0" opacity=".5" filter="url(#b2)"/><circle cx="795" cy="1118" r="18" fill="url(#ballC)" filter="url(#b05)"/><g opacity=".8"><circle cx="800.6" cy="1111.5" r="1.2" fill="#f2d8df"/><circle cx="792.0" cy="1113.2" r="1.2" fill="#e9c4cf"/><circle cx="794.1" cy="1117.2" r="1.2" fill="#f2d8df"/><circle cx="797.9" cy="1120.6" r="1.2" fill="#b06c84"/><circle cx="794.2" cy="1112.2" r="1.2" fill="#f2d8df"/><circle cx="792.6" cy="1111.6" r="1.2" fill="#b06c84"/><circle cx="795.7" cy="1116.9" r="1.2" fill="#f2d8df"/><circle cx="803.9" cy="1119.7" r="1.2" fill="#b06c84"/><circle cx="809.2" cy="1120.0" r="1.2" fill="#e9c4cf"/><circle cx="785.8" cy="1118.2" r="1.2" fill="#b06c84"/><circle cx="795.0" cy="1118.2" r="1.2" fill="#b06c84"/><circle cx="800.7" cy="1125.2" r="1.2" fill="#f2d8df"/><circle cx="801.6" cy="1129.9" r="1.2" fill="#f2d8df"/><circle cx="801.8" cy="1114.8" r="1.2" fill="#e9c4cf"/><circle cx="790.4" cy="1126.8" r="1.2" fill="#e9c4cf"/><circle cx="787.0" cy="1109.0" r="1.2" fill="#e9c4cf"/><circle cx="799.2" cy="1114.1" r="1.2" fill="#f2d8df"/><circle cx="797.8" cy="1116.5" r="1.2" fill="#e9c4cf"/><circle cx="782.4" cy="1118.3" r="1.2" fill="#e9c4cf"/><circle cx="791.6" cy="1104.2" r="1.2" fill="#b06c84"/><circle cx="795.7" cy="1116.5" r="1.2" fill="#b06c84"/><circle cx="794.5" cy="1121.2" r="1.2" fill="#b06c84"/></g>
<polygon points="820,1140 900,1110 950,1170 900,1230 830,1200" fill="#eba5b2" opacity="0.5" filter="url(#b4)"/>
<polygon points="840,1127 858,1105 910,1122 897,1162 866,1149" fill="#d39a76" opacity="1" filter="url(#b05)"/>
<polygon points="875,1187 918,1196 901,1218 866,1205" fill="#c98b68" opacity="1" filter="url(#b05)"/>
<polygon points="819,1182 832,1173 832,1199 819,1203" fill="#d39a76" opacity="1" filter="url(#b05)"/>
<polygon points="823,1144 879,1131 940,1144 931,1192 875,1179 823,1183" fill="#fcf9f9" opacity="1" filter="url(#b1)"/>
<polygon points="772,1209 841,1178 858,1196 785,1224" fill="#fdfbfb" opacity="1" filter="url(#b1)"/>
<polygon points="858,1192 935,1178 940,1196 866,1210" fill="#fbf6f6" opacity="0.9" filter="url(#b1)"/>
</g>
<g clip-path="url(#wh)">
<rect x="1016" y="713" width="364" height="528" fill="#fdfdfd"/>
<g filter="url(#b4)"><path d="M1020 790L1080 800L1150 818" stroke="#e2e2e4" stroke-width="20" fill="none"/><path d="M1290 900L1330 1020L1300 1090" stroke="#e9e9ea" stroke-width="46" fill="none"/><path d="M1300 800L1380 890" stroke="#e3e3e5" stroke-width="28" fill="none"/><circle cx="1215" cy="900" r="58" fill="#e8e8ea"/></g>
<path d="M1262 798L1330 860L1381 908" stroke="#80695f" stroke-width="5" fill="none" filter="url(#b05)"/>
<path d="M1016 746L1060 748L1119 766L1160 784L1198 795L1262 790" stroke="#6e625a" stroke-width="5" fill="none" filter="url(#b1)"/>
<g filter="url(#b2)" opacity=".8"><circle cx="1020" cy="742" r="9" fill="#6f6a66"/><circle cx="1046" cy="748" r="12" fill="#6f6a66"/><circle cx="1091" cy="740" r="17" fill="#6f6a66"/><circle cx="1111" cy="760" r="14" fill="#6f6a66"/><circle cx="1157" cy="758" r="15" fill="#6f6a66"/><circle cx="1143" cy="787" r="16" fill="#6f6a66"/><circle cx="1169" cy="785" r="14" fill="#6f6a66"/><circle cx="1198" cy="793" r="15" fill="#6f6a66"/><circle cx="1224" cy="782" r="14" fill="#6f6a66"/><circle cx="1248" cy="788" r="16" fill="#6f6a66"/><circle cx="1266" cy="770" r="13" fill="#6f6a66"/><circle cx="1070" cy="752" r="10" fill="#6f6a66"/><circle cx="1130" cy="770" r="12" fill="#6f6a66"/><circle cx="1185" cy="772" r="10" fill="#6f6a66"/><circle cx="1212" cy="802" r="10" fill="#6f6a66"/><circle cx="1236" cy="802" r="10" fill="#6f6a66"/></g>
<g stroke-width="1.600" fill="none" filter="url(#b05)"><path d="M1022 745L1013 748" stroke="#a4a2a0"/><path d="M1018 743L1015 737" stroke="#5f5d5a"/><path d="M1018 744L1017 735" stroke="#a4a2a0"/><path d="M1018 744L1026 743" stroke="#3e3c3a"/><path d="M1024 739L1019 753" stroke="#5f5d5a"/><path d="M1024 743L1027 748" stroke="#a4a2a0"/><path d="M1022 744L1023 750" stroke="#4c4a48"/><path d="M1018 741L1014 741" stroke="#8f8d8b"/><path d="M1019 744L1017 733" stroke="#4c4a48"/><path d="M1017 742L1025 739" stroke="#54504c"/><path d="M1020 743L1012 734" stroke="#54504c"/><path d="M1020 743L1009 742" stroke="#a4a2a0"/><path d="M1018 745L1023 752" stroke="#7a7876"/><path d="M1024 745L1032 740" stroke="#857f7a"/><path d="M1019 739L1019 753" stroke="#5f5d5a"/><path d="M1020 738L1011 745" stroke="#6b645e"/><path d="M1017 741L1022 737" stroke="#5f5d5a"/><path d="M1024 745L1022 736" stroke="#4c4a48"/><path d="M1024 742L1010 741" stroke="#3e3c3a"/><path d="M1020 742L1026 740" stroke="#8f8d8b"/><path d="M1020 745L1025 734" stroke="#4c4a48"/><path d="M1024 745L1013 739" stroke="#54504c"/><path d="M1024 742L1014 737" stroke="#4c4a48"/><path d="M1017 738L1014 739" stroke="#857f7a"/><path d="M1020 741L1013 748" stroke="#5f5d5a"/><path d="M1017 739L1023 733" stroke="#3e3c3a"/><path d="M1018 742L1028 738" stroke="#54504c"/><path d="M1020 739L1026 748" stroke="#3e3c3a"/><path d="M1017 744L1015 745" stroke="#6b645e"/><path d="M1016 740L1027 743" stroke="#8f8d8b"/><path d="M1017 744L1019 735" stroke="#3e3c3a"/><path d="M1022 744L1027 748" stroke="#6b645e"/><path d="M1023 743L1024 738" stroke="#54504c"/><path d="M1021 742L1009 739" stroke="#857f7a"/><path d="M1018 744L1026 734" stroke="#4c4a48"/><path d="M1021 745L1024 731" stroke="#a4a2a0"/><path d="M1023 739L1024 752" stroke="#8f8d8b"/><path d="M1019 741L1021 753" stroke="#6b645e"/><path d="M1018 743L1029 739" stroke="#4c4a48"/><path d="M1023 746L1022 736" stroke="#a4a2a0"/><path d="M1020 743L1027 748" stroke="#a4a2a0"/><path d="M1016 744L1022 747" stroke="#7a7876"/><path d="M1017 739L1011 734" stroke="#3e3c3a"/><path d="M1023 739L1023 753" stroke="#6b645e"/><path d="M1017 739L1031 747" stroke="#3e3c3a"/><path d="M1019 743L1013 747" stroke="#a4a2a0"/><path d="M1017 742L1030 743" stroke="#8f8d8b"/><path d="M1021 739L1019 734" stroke="#8f8d8b"/><path d="M1022 744L1022 735" stroke="#7a7876"/><path d="M1021 740L1026 734" stroke="#54504c"/><path d="M1018 739L1013 738" stroke="#6b645e"/><path d="M1017 741L1020 735" stroke="#54504c"/><path d="M1022 741L1012 740" stroke="#54504c"/><path d="M1018 739L1019 736" stroke="#a4a2a0"/><path d="M1042 746L1047 760" stroke="#857f7a"/><path d="M1044 747L1040 754" stroke="#6b645e"/><path d="M1047 752L1034 745" stroke="#857f7a"/><path d="M1046 749L1036 736" stroke="#7a7876"/><path d="M1045 752L1057 745" stroke="#4c4a48"/><path d="M1045 748L1054 738" stroke="#5f5d5a"/><path d="M1045 746L1043 759" stroke="#6b645e"/><path d="M1047 750L1038 737" stroke="#6b645e"/><path d="M1047 747L1061 751" stroke="#5f5d5a"/><path d="M1048 744L1043 740" stroke="#a4a2a0"/><path d="M1048 746L1063 747" stroke="#7a7876"/><path d="M1042 745L1044 738" stroke="#8f8d8b"/><path d="M1050 751L1052 732" stroke="#4c4a48"/><path d="M1046 746L1039 743" stroke="#54504c"/><path d="M1045 745L1058 752" stroke="#7a7876"/><path d="M1045 750L1034 755" stroke="#54504c"/><path d="M1048 746L1050 740" stroke="#6b645e"/><path d="M1047 747L1059 759" stroke="#857f7a"/><path d="M1047 750L1044 763" stroke="#8f8d8b"/><path d="M1049 744L1050 757" stroke="#8f8d8b"/><path d="M1042 744L1056 752" stroke="#54504c"/><path d="M1049 745L1048 758" stroke="#7a7876"/><path d="M1046 746L1048 766" stroke="#3e3c3a"/><path d="M1048 748L1038 761" stroke="#7a7876"/><path d="M1046 750L1053 733" stroke="#8f8d8b"/><path d="M1047 752L1039 754" stroke="#4c4a48"/><path d="M1045 747L1040 760" stroke="#4c4a48"/><path d="M1046 747L1060 757" stroke="#7a7876"/><path d="M1044 750L1031 741" stroke="#3e3c3a"/><path d="M1048 748L1055 753" stroke="#7a7876"/><path d="M1044 749L1047 737" stroke="#4c4a48"/><path d="M1048 749L1038 763" stroke="#a4a2a0"/><path d="M1046 750L1061 740" stroke="#6b645e"/><path d="M1050 750L1042 758" stroke="#54504c"/><path d="M1042 749L1038 747" stroke="#a4a2a0"/><path d="M1048 748L1032 740" stroke="#a4a2a0"/><path d="M1043 748L1053 737" stroke="#4c4a48"/><path d="M1046 748L1056 735" stroke="#8f8d8b"/><path d="M1043 748L1030 741" stroke="#54504c"/><path d="M1044 745L1048 740" stroke="#7a7876"/><path d="M1043 751L1043 755" stroke="#4c4a48"/><path d="M1048 748L1033 755" stroke="#3e3c3a"/><path d="M1048 747L1047 736" stroke="#a4a2a0"/><path d="M1048 751L1054 758" stroke="#7a7876"/><path d="M1049 750L1032 757" stroke="#a4a2a0"/><path d="M1047 748L1054 734" stroke="#857f7a"/><path d="M1049 751L1042 733" stroke="#54504c"/><path d="M1047 747L1046 757" stroke="#54504c"/><path d="M1050 744L1036 756" stroke="#6b645e"/><path d="M1048 745L1043 756" stroke="#4c4a48"/><path d="M1049 744L1057 753" stroke="#3e3c3a"/><path d="M1047 749L1053 754" stroke="#8f8d8b"/><path d="M1043 746L1033 750" stroke="#3e3c3a"/><path d="M1047 752L1053 762" stroke="#6b645e"/><path d="M1049 751L1030 743" stroke="#3e3c3a"/><path d="M1046 746L1039 759" stroke="#7a7876"/><path d="M1050 750L1062 753" stroke="#54504c"/><path d="M1047 746L1048 732" stroke="#5f5d5a"/><path d="M1046 746L1058 749" stroke="#a4a2a0"/><path d="M1043 747L1031 756" stroke="#54504c"/><path d="M1043 750L1045 764" stroke="#857f7a"/><path d="M1043 750L1037 739" stroke="#5f5d5a"/><path d="M1049 745L1062 748" stroke="#4c4a48"/><path d="M1049 750L1044 763" stroke="#7a7876"/><path d="M1049 746L1059 756" stroke="#857f7a"/><path d="M1048 748L1049 736" stroke="#7a7876"/><path d="M1043 751L1058 751" stroke="#3e3c3a"/><path d="M1046 752L1042 758" stroke="#7a7876"/><path d="M1047 745L1042 741" stroke="#7a7876"/><path d="M1047 744L1036 756" stroke="#7a7876"/><path d="M1044 745L1035 758" stroke="#8f8d8b"/><path d="M1049 745L1048 732" stroke="#8f8d8b"/><path d="M1050 750L1034 736" stroke="#6b645e"/><path d="M1044 750L1038 745" stroke="#8f8d8b"/><path d="M1048 747L1038 763" stroke="#3e3c3a"/><path d="M1047 745L1050 740" stroke="#4c4a48"/><path d="M1089 738L1081 724" stroke="#5f5d5a"/><path d="M1090 740L1085 755" stroke="#857f7a"/><path d="M1089 740L1096 719" stroke="#4c4a48"/><path d="M1091 741L1087 753" stroke="#857f7a"/><path d="M1092 736L1098 762" stroke="#8f8d8b"/><path d="M1089 741L1080 722" stroke="#4c4a48"/><path d="M1089 743L1086 726" stroke="#a4a2a0"/><path d="M1094 740L1071 746" stroke="#8f8d8b"/><path d="M1088 742L1074 733" stroke="#6b645e"/><path d="M1088 743L1103 731" stroke="#4c4a48"/><path d="M1093 739L1086 762" stroke="#8f8d8b"/><path d="M1091 739L1100 756" stroke="#7a7876"/><path d="M1089 741L1096 717" stroke="#4c4a48"/><path d="M1088 739L1090 724" stroke="#5f5d5a"/><path d="M1092 737L1108 744" stroke="#7a7876"/><path d="M1087 742L1077 738" stroke="#a4a2a0"/><path d="M1095 741L1087 719" stroke="#54504c"/><path d="M1093 740L1075 743" stroke="#54504c"/><path d="M1094 737L1113 739" stroke="#54504c"/><path d="M1091 739L1109 755" stroke="#a4a2a0"/><path d="M1089 741L1103 732" stroke="#5f5d5a"/><path d="M1093 738L1077 746" stroke="#a4a2a0"/><path d="M1094 738L1082 734" stroke="#7a7876"/><path d="M1093 740L1108 723" stroke="#3e3c3a"/><path d="M1095 743L1092 755" stroke="#54504c"/><path d="M1094 739L1111 740" stroke="#a4a2a0"/><path d="M1092 743L1096 727" stroke="#54504c"/><path d="M1094 741L1108 752" stroke="#7a7876"/><path d="M1087 737L1077 744" stroke="#6b645e"/><path d="M1090 739L1076 746" stroke="#857f7a"/><path d="M1091 739L1082 734" stroke="#5f5d5a"/><path d="M1094 738L1085 751" stroke="#3e3c3a"/><path d="M1089 743L1104 725" stroke="#5f5d5a"/><path d="M1092 742L1081 753" stroke="#4c4a48"/><path d="M1089 743L1075 733" stroke="#8f8d8b"/><path d="M1095 738L1102 744" stroke="#a4a2a0"/><path d="M1093 744L1071 751" stroke="#a4a2a0"/><path d="M1094 737L1080 744" stroke="#8f8d8b"/><path d="M1091 738L1086 727" stroke="#8f8d8b"/><path d="M1094 741L1088 761" stroke="#857f7a"/><path d="M1092 738L1093 754" stroke="#4c4a48"/><path d="M1091 740L1084 731" stroke="#7a7876"/><path d="M1091 739L1080 738" stroke="#6b645e"/><path d="M1089 738L1080 735" stroke="#8f8d8b"/><path d="M1095 736L1079 736" stroke="#4c4a48"/><path d="M1087 743L1071 745" stroke="#54504c"/><path d="M1090 740L1101 744" stroke="#a4a2a0"/><path d="M1093 740L1105 743" stroke="#857f7a"/><path d="M1092 738L1074 728" stroke="#7a7876"/><path d="M1089 740L1071 748" stroke="#8f8d8b"/><path d="M1087 741L1102 725" stroke="#6b645e"/><path d="M1090 741L1087 722" stroke="#4c4a48"/><path d="M1091 738L1074 726" stroke="#857f7a"/><path d="M1092 740L1094 729" stroke="#4c4a48"/><path d="M1087 739L1095 727" stroke="#4c4a48"/><path d="M1093 742L1084 720" stroke="#857f7a"/><path d="M1088 738L1072 740" stroke="#857f7a"/><path d="M1087 739L1102 757" stroke="#3e3c3a"/><path d="M1088 742L1082 750" stroke="#5f5d5a"/><path d="M1091 744L1081 733" stroke="#3e3c3a"/><path d="M1088 739L1107 740" stroke="#857f7a"/><path d="M1095 741L1086 755" stroke="#7a7876"/><path d="M1089 737L1086 717" stroke="#8f8d8b"/><path d="M1094 739L1101 727" stroke="#7a7876"/><path d="M1087 739L1079 760" stroke="#8f8d8b"/><path d="M1092 743L1084 731" stroke="#a4a2a0"/><path d="M1091 739L1108 725" stroke="#4c4a48"/><path d="M1089 739L1100 727" stroke="#5f5d5a"/><path d="M1091 739L1098 756" stroke="#4c4a48"/><path d="M1091 744L1074 728" stroke="#3e3c3a"/><path d="M1091 739L1081 720" stroke="#8f8d8b"/><path d="M1092 740L1105 744" stroke="#6b645e"/><path d="M1089 739L1090 723" stroke="#8f8d8b"/><path d="M1088 738L1104 759" stroke="#a4a2a0"/><path d="M1094 740L1097 730" stroke="#a4a2a0"/><path d="M1093 740L1101 728" stroke="#6b645e"/><path d="M1091 738L1106 745" stroke="#8f8d8b"/><path d="M1089 739L1079 739" stroke="#8f8d8b"/><path d="M1089 742L1079 737" stroke="#857f7a"/><path d="M1094 740L1085 729" stroke="#8f8d8b"/><path d="M1094 738L1079 744" stroke="#857f7a"/><path d="M1088 743L1087 755" stroke="#8f8d8b"/><path d="M1093 744L1091 723" stroke="#5f5d5a"/><path d="M1091 739L1085 759" stroke="#8f8d8b"/><path d="M1089 741L1106 755" stroke="#a4a2a0"/><path d="M1091 740L1105 749" stroke="#54504c"/><path d="M1089 743L1104 734" stroke="#6b645e"/><path d="M1092 738L1097 760" stroke="#a4a2a0"/><path d="M1093 740L1104 748" stroke="#54504c"/><path d="M1093 736L1090 762" stroke="#6b645e"/><path d="M1094 738L1079 750" stroke="#7a7876"/><path d="M1091 739L1075 755" stroke="#6b645e"/><path d="M1090 739L1091 751" stroke="#a4a2a0"/><path d="M1092 739L1085 761" stroke="#4c4a48"/><path d="M1092 744L1079 759" stroke="#5f5d5a"/><path d="M1090 739L1094 721" stroke="#857f7a"/><path d="M1090 743L1087 762" stroke="#3e3c3a"/><path d="M1089 740L1103 743" stroke="#857f7a"/><path d="M1089 738L1081 742" stroke="#8f8d8b"/><path d="M1095 736L1094 757" stroke="#857f7a"/><path d="M1088 743L1070 734" stroke="#857f7a"/><path d="M1089 737L1106 727" stroke="#a4a2a0"/><path d="M1093 741L1112 743" stroke="#8f8d8b"/><path d="M1114 763L1107 750" stroke="#8f8d8b"/><path d="M1112 763L1099 755" stroke="#4c4a48"/><path d="M1112 758L1114 751" stroke="#54504c"/><path d="M1112 764L1100 744" stroke="#3e3c3a"/><path d="M1110 761L1121 758" stroke="#6b645e"/><path d="M1107 762L1096 772" stroke="#4c4a48"/><path d="M1110 760L1118 766" stroke="#6b645e"/><path d="M1114 763L1115 748" stroke="#5f5d5a"/><path d="M1113 763L1115 768" stroke="#3e3c3a"/><path d="M1113 764L1108 773" stroke="#54504c"/><path d="M1109 763L1098 771" stroke="#857f7a"/><path d="M1114 758L1094 766" stroke="#857f7a"/><path d="M1114 758L1101 761" stroke="#a4a2a0"/><path d="M1109 758L1100 755" stroke="#54504c"/><path d="M1111 757L1098 761" stroke="#6b645e"/><path d="M1107 759L1128 761" stroke="#7a7876"/><path d="M1111 759L1122 774" stroke="#54504c"/><path d="M1109 761L1116 748" stroke="#5f5d5a"/><path d="M1115 763L1116 750" stroke="#8f8d8b"/><path d="M1108 756L1125 760" stroke="#5f5d5a"/><path d="M1109 756L1116 769" stroke="#7a7876"/><path d="M1107 758L1102 757" stroke="#3e3c3a"/><path d="M1109 758L1119 758" stroke="#857f7a"/><path d="M1113 763L1124 754" stroke="#6b645e"/><path d="M1114 760L1113 740" stroke="#7a7876"/><path d="M1107 757L1118 749" stroke="#5f5d5a"/><path d="M1112 762L1103 775" stroke="#857f7a"/><path d="M1109 757L1101 772" stroke="#a4a2a0"/><path d="M1110 762L1102 747" stroke="#6b645e"/><path d="M1109 758L1115 777" stroke="#857f7a"/><path d="M1110 759L1105 768" stroke="#a4a2a0"/><path d="M1108 764L1125 761" stroke="#54504c"/><path d="M1114 759L1120 745" stroke="#5f5d5a"/><path d="M1110 764L1111 750" stroke="#a4a2a0"/><path d="M1114 757L1114 773" stroke="#4c4a48"/><path d="M1113 760L1096 772" stroke="#4c4a48"/><path d="M1114 756L1128 761" stroke="#54504c"/><path d="M1114 761L1102 752" stroke="#3e3c3a"/><path d="M1108 762L1096 760" stroke="#7a7876"/><path d="M1110 759L1111 746" stroke="#3e3c3a"/><path d="M1111 756L1113 775" stroke="#5f5d5a"/><path d="M1112 763L1101 750" stroke="#5f5d5a"/><path d="M1113 759L1119 771" stroke="#6b645e"/><path d="M1107 764L1109 740" stroke="#54504c"/><path d="M1109 763L1111 741" stroke="#7a7876"/><path d="M1113 760L1100 744" stroke="#7a7876"/><path d="M1113 758L1120 760" stroke="#5f5d5a"/><path d="M1107 759L1116 747" stroke="#857f7a"/><path d="M1108 760L1092 761" stroke="#8f8d8b"/><path d="M1108 760L1114 746" stroke="#8f8d8b"/><path d="M1113 757L1128 766" stroke="#7a7876"/><path d="M1114 764L1105 767" stroke="#5f5d5a"/><path d="M1108 759L1113 772" stroke="#54504c"/><path d="M1108 764L1120 747" stroke="#3e3c3a"/><path d="M1111 764L1115 775" stroke="#8f8d8b"/><path d="M1114 764L1098 772" stroke="#a4a2a0"/><path d="M1108 757L1105 751" stroke="#8f8d8b"/><path d="M1109 758L1106 747" stroke="#4c4a48"/><path d="M1109 764L1102 773" stroke="#6b645e"/><path d="M1114 762L1105 744" stroke="#a4a2a0"/><path d="M1110 763L1114 769" stroke="#6b645e"/><path d="M1108 757L1099 767" stroke="#857f7a"/><path d="M1112 758L1098 759" stroke="#3e3c3a"/><path d="M1112 760L1119 752" stroke="#7a7876"/><path d="M1112 760L1123 755" stroke="#54504c"/><path d="M1112 761L1123 765" stroke="#6b645e"/><path d="M1112 758L1109 776" stroke="#5f5d5a"/><path d="M1110 758L1102 765" stroke="#6b645e"/><path d="M1111 757L1126 771" stroke="#7a7876"/><path d="M1107 756L1119 754" stroke="#a4a2a0"/><path d="M1112 757L1097 751" stroke="#5f5d5a"/><path d="M1110 761L1120 765" stroke="#857f7a"/><path d="M1115 759L1096 748" stroke="#5f5d5a"/><path d="M1115 757L1119 746" stroke="#7a7876"/><path d="M1111 761L1098 763" stroke="#8f8d8b"/><path d="M1110 762L1093 760" stroke="#857f7a"/><path d="M1112 764L1120 765" stroke="#6b645e"/><path d="M1111 756L1093 763" stroke="#54504c"/><path d="M1108 759L1123 745" stroke="#5f5d5a"/><path d="M1109 760L1093 753" stroke="#7a7876"/><path d="M1112 760L1122 771" stroke="#4c4a48"/><path d="M1109 759L1106 772" stroke="#8f8d8b"/><path d="M1108 757L1121 764" stroke="#3e3c3a"/><path d="M1108 764L1123 774" stroke="#857f7a"/><path d="M1110 756L1098 758" stroke="#7a7876"/><path d="M1156 758L1147 751" stroke="#7a7876"/><path d="M1154 756L1148 770" stroke="#3e3c3a"/><path d="M1157 757L1146 756" stroke="#54504c"/><path d="M1153 757L1159 769" stroke="#a4a2a0"/><path d="M1157 754L1172 753" stroke="#857f7a"/><path d="M1159 757L1139 770" stroke="#5f5d5a"/><path d="M1160 756L1158 780" stroke="#a4a2a0"/><path d="M1157 758L1158 748" stroke="#4c4a48"/><path d="M1155 759L1157 748" stroke="#7a7876"/><path d="M1156 756L1165 738" stroke="#a4a2a0"/><path d="M1160 757L1153 748" stroke="#8f8d8b"/><path d="M1158 754L1149 776" stroke="#6b645e"/><path d="M1157 761L1158 748" stroke="#7a7876"/><path d="M1158 754L1151 751" stroke="#8f8d8b"/><path d="M1154 755L1156 743" stroke="#7a7876"/><path d="M1158 760L1153 748" stroke="#3e3c3a"/><path d="M1160 762L1137 765" stroke="#7a7876"/><path d="M1159 757L1145 774" stroke="#7a7876"/><path d="M1160 756L1151 742" stroke="#7a7876"/><path d="M1154 756L1143 766" stroke="#7a7876"/><path d="M1155 760L1140 769" stroke="#54504c"/><path d="M1157 758L1142 759" stroke="#54504c"/><path d="M1155 757L1138 752" stroke="#a4a2a0"/><path d="M1158 758L1164 770" stroke="#857f7a"/><path d="M1157 762L1144 750" stroke="#4c4a48"/><path d="M1158 757L1148 774" stroke="#8f8d8b"/><path d="M1159 756L1149 763" stroke="#7a7876"/><path d="M1157 762L1158 770" stroke="#7a7876"/><path d="M1154 755L1170 750" stroke="#3e3c3a"/><path d="M1160 754L1144 746" stroke="#857f7a"/><path d="M1157 758L1152 742" stroke="#857f7a"/><path d="M1159 755L1137 765" stroke="#a4a2a0"/><path d="M1160 760L1160 746" stroke="#8f8d8b"/><path d="M1158 761L1151 768" stroke="#8f8d8b"/><path d="M1154 760L1173 750" stroke="#a4a2a0"/><path d="M1154 757L1163 742" stroke="#6b645e"/><path d="M1155 758L1167 776" stroke="#6b645e"/><path d="M1155 756L1156 768" stroke="#5f5d5a"/><path d="M1160 758L1137 757" stroke="#4c4a48"/><path d="M1157 759L1164 766" stroke="#4c4a48"/><path d="M1155 757L1174 749" stroke="#6b645e"/><path d="M1155 758L1160 741" stroke="#857f7a"/><path d="M1155 760L1144 772" stroke="#857f7a"/><path d="M1154 762L1165 751" stroke="#857f7a"/><path d="M1154 759L1151 749" stroke="#5f5d5a"/><path d="M1156 755L1173 773" stroke="#6b645e"/><path d="M1153 759L1174 752" stroke="#4c4a48"/><path d="M1157 757L1175 756" stroke="#857f7a"/><path d="M1158 761L1152 748" stroke="#a4a2a0"/><path d="M1157 755L1165 751" stroke="#4c4a48"/><path d="M1154 761L1141 759" stroke="#857f7a"/><path d="M1161 762L1157 770" stroke="#6b645e"/><path d="M1160 754L1177 751" stroke="#54504c"/><path d="M1160 755L1140 759" stroke="#a4a2a0"/><path d="M1154 756L1136 755" stroke="#5f5d5a"/><path d="M1153 761L1150 779" stroke="#54504c"/><path d="M1153 755L1151 743" stroke="#7a7876"/><path d="M1156 757L1163 737" stroke="#8f8d8b"/><path d="M1155 759L1151 766" stroke="#8f8d8b"/><path d="M1157 756L1144 756" stroke="#a4a2a0"/><path d="M1155 758L1166 750" stroke="#4c4a48"/><path d="M1155 759L1161 779" stroke="#4c4a48"/><path d="M1158 754L1156 774" stroke="#6b645e"/><path d="M1156 760L1153 768" stroke="#857f7a"/><path d="M1154 759L1148 741" stroke="#857f7a"/><path d="M1156 762L1142 758" stroke="#5f5d5a"/><path d="M1161 757L1147 768" stroke="#7a7876"/><path d="M1156 760L1170 773" stroke="#8f8d8b"/><path d="M1157 761L1148 767" stroke="#7a7876"/><path d="M1161 757L1173 759" stroke="#54504c"/><path d="M1160 762L1163 767" stroke="#4c4a48"/><path d="M1154 760L1170 752" stroke="#4c4a48"/><path d="M1159 756L1168 754" stroke="#4c4a48"/><path d="M1156 760L1169 741" stroke="#3e3c3a"/><path d="M1161 760L1167 753" stroke="#7a7876"/><path d="M1154 755L1152 748" stroke="#a4a2a0"/><path d="M1159 758L1141 755" stroke="#3e3c3a"/><path d="M1153 761L1167 755" stroke="#8f8d8b"/><path d="M1154 762L1178 755" stroke="#857f7a"/><path d="M1159 762L1150 750" stroke="#3e3c3a"/><path d="M1157 756L1140 762" stroke="#3e3c3a"/><path d="M1157 759L1177 751" stroke="#5f5d5a"/><path d="M1154 760L1144 755" stroke="#5f5d5a"/><path d="M1156 762L1159 767" stroke="#8f8d8b"/><path d="M1154 754L1149 751" stroke="#5f5d5a"/><path d="M1160 758L1154 767" stroke="#6b645e"/><path d="M1154 755L1152 746" stroke="#a4a2a0"/><path d="M1157 758L1142 750" stroke="#54504c"/><path d="M1158 759L1147 776" stroke="#8f8d8b"/><path d="M1157 762L1171 747" stroke="#3e3c3a"/><path d="M1155 759L1154 769" stroke="#a4a2a0"/><path d="M1158 759L1169 776" stroke="#6b645e"/><path d="M1157 761L1172 758" stroke="#7a7876"/><path d="M1158 757L1143 757" stroke="#5f5d5a"/><path d="M1144 789L1151 765" stroke="#4c4a48"/><path d="M1140 787L1138 767" stroke="#4c4a48"/><path d="M1147 788L1141 777" stroke="#5f5d5a"/><path d="M1146 788L1125 790" stroke="#54504c"/><path d="M1141 785L1160 794" stroke="#7a7876"/><path d="M1147 788L1133 795" stroke="#6b645e"/><path d="M1142 786L1157 801" stroke="#5f5d5a"/><path d="M1144 791L1127 799" stroke="#5f5d5a"/><path d="M1145 783L1132 774" stroke="#54504c"/><path d="M1141 788L1155 776" stroke="#8f8d8b"/><path d="M1142 785L1152 795" stroke="#54504c"/><path d="M1142 790L1150 804" stroke="#7a7876"/><path d="M1147 789L1155 780" stroke="#6b645e"/><path d="M1147 784L1136 799" stroke="#857f7a"/><path d="M1143 789L1159 798" stroke="#5f5d5a"/><path d="M1141 786L1143 800" stroke="#a4a2a0"/><path d="M1141 790L1153 792" stroke="#a4a2a0"/><path d="M1142 785L1154 774" stroke="#8f8d8b"/><path d="M1142 787L1121 791" stroke="#7a7876"/><path d="M1146 785L1127 796" stroke="#857f7a"/><path d="M1140 784L1121 781" stroke="#857f7a"/><path d="M1143 785L1161 786" stroke="#4c4a48"/><path d="M1141 789L1139 768" stroke="#a4a2a0"/><path d="M1142 784L1153 790" stroke="#5f5d5a"/><path d="M1143 783L1121 791" stroke="#5f5d5a"/><path d="M1147 787L1125 791" stroke="#4c4a48"/><path d="M1144 788L1146 774" stroke="#8f8d8b"/><path d="M1141 788L1161 793" stroke="#4c4a48"/><path d="M1145 788L1131 796" stroke="#54504c"/><path d="M1147 790L1146 800" stroke="#3e3c3a"/><path d="M1141 785L1159 779" stroke="#a4a2a0"/><path d="M1145 790L1154 775" stroke="#54504c"/><path d="M1145 787L1147 797" stroke="#7a7876"/><path d="M1142 785L1133 799" stroke="#3e3c3a"/><path d="M1143 787L1164 790" stroke="#7a7876"/><path d="M1144 787L1155 776" stroke="#54504c"/><path d="M1145 785L1150 766" stroke="#7a7876"/><path d="M1142 788L1139 765" stroke="#3e3c3a"/><path d="M1144 789L1146 807" stroke="#857f7a"/><path d="M1142 786L1129 781" stroke="#54504c"/><path d="M1141 791L1156 795" stroke="#54504c"/><path d="M1144 790L1143 771" stroke="#3e3c3a"/><path d="M1145 788L1151 774" stroke="#a4a2a0"/><path d="M1142 784L1143 806" stroke="#857f7a"/><path d="M1145 787L1163 790" stroke="#a4a2a0"/><path d="M1143 787L1163 790" stroke="#a4a2a0"/><path d="M1144 785L1152 803" stroke="#3e3c3a"/><path d="M1140 783L1148 773" stroke="#4c4a48"/><path d="M1144 791L1126 791" stroke="#3e3c3a"/><path d="M1139 787L1131 803" stroke="#7a7876"/><path d="M1142 785L1150 800" stroke="#8f8d8b"/><path d="M1143 786L1132 800" stroke="#5f5d5a"/><path d="M1141 783L1126 798" stroke="#8f8d8b"/><path d="M1145 785L1158 777" stroke="#5f5d5a"/><path d="M1144 785L1124 788" stroke="#5f5d5a"/><path d="M1145 786L1134 803" stroke="#a4a2a0"/><path d="M1145 783L1152 778" stroke="#3e3c3a"/><path d="M1144 791L1161 777" stroke="#6b645e"/><path d="M1140 791L1145 800" stroke="#a4a2a0"/><path d="M1140 784L1134 800" stroke="#54504c"/><path d="M1142 789L1126 776" stroke="#3e3c3a"/><path d="M1143 783L1148 808" stroke="#8f8d8b"/><path d="M1145 788L1124 788" stroke="#7a7876"/><path d="M1139 786L1153 783" stroke="#a4a2a0"/><path d="M1140 784L1161 785" stroke="#54504c"/><path d="M1143 783L1162 790" stroke="#4c4a48"/><path d="M1143 785L1154 802" stroke="#5f5d5a"/><path d="M1139 790L1129 782" stroke="#a4a2a0"/><path d="M1141 788L1140 797" stroke="#a4a2a0"/><path d="M1143 787L1142 798" stroke="#7a7876"/><path d="M1145 787L1135 807" stroke="#3e3c3a"/><path d="M1141 787L1130 795" stroke="#857f7a"/><path d="M1141 785L1122 776" stroke="#8f8d8b"/><path d="M1144 785L1129 799" stroke="#5f5d5a"/><path d="M1144 789L1151 807" stroke="#857f7a"/><path d="M1143 785L1142 771" stroke="#54504c"/><path d="M1140 785L1127 778" stroke="#8f8d8b"/><path d="M1143 783L1160 784" stroke="#857f7a"/><path d="M1143 784L1139 801" stroke="#7a7876"/><path d="M1143 791L1157 772" stroke="#7a7876"/><path d="M1144 788L1157 776" stroke="#857f7a"/><path d="M1144 785L1150 801" stroke="#8f8d8b"/><path d="M1147 790L1127 793" stroke="#a4a2a0"/><path d="M1144 785L1135 780" stroke="#8f8d8b"/><path d="M1143 791L1138 798" stroke="#857f7a"/><path d="M1145 783L1148 798" stroke="#8f8d8b"/><path d="M1145 788L1163 791" stroke="#4c4a48"/><path d="M1145 790L1142 765" stroke="#a4a2a0"/><path d="M1144 790L1142 773" stroke="#7a7876"/><path d="M1146 788L1160 792" stroke="#54504c"/><path d="M1143 791L1129 799" stroke="#54504c"/><path d="M1144 784L1144 801" stroke="#8f8d8b"/><path d="M1146 788L1148 799" stroke="#6b645e"/><path d="M1146 786L1156 800" stroke="#54504c"/><path d="M1140 785L1158 788" stroke="#54504c"/><path d="M1143 786L1154 797" stroke="#a4a2a0"/><path d="M1141 783L1160 781" stroke="#4c4a48"/><path d="M1143 787L1133 772" stroke="#8f8d8b"/><path d="M1140 786L1159 792" stroke="#5f5d5a"/><path d="M1167 784L1162 804" stroke="#5f5d5a"/><path d="M1167 783L1188 786" stroke="#54504c"/><path d="M1172 782L1164 776" stroke="#a4a2a0"/><path d="M1167 787L1162 776" stroke="#6b645e"/><path d="M1170 788L1173 769" stroke="#4c4a48"/><path d="M1173 787L1163 795" stroke="#857f7a"/><path d="M1173 788L1177 776" stroke="#6b645e"/><path d="M1167 785L1158 769" stroke="#4c4a48"/><path d="M1168 786L1184 794" stroke="#5f5d5a"/><path d="M1167 785L1174 804" stroke="#54504c"/><path d="M1166 785L1181 770" stroke="#6b645e"/><path d="M1167 785L1157 776" stroke="#6b645e"/><path d="M1171 786L1164 792" stroke="#5f5d5a"/><path d="M1170 782L1160 774" stroke="#857f7a"/><path d="M1166 785L1167 774" stroke="#3e3c3a"/><path d="M1168 784L1153 788" stroke="#6b645e"/><path d="M1169 786L1162 801" stroke="#3e3c3a"/><path d="M1166 786L1183 777" stroke="#8f8d8b"/><path d="M1169 783L1164 773" stroke="#4c4a48"/><path d="M1168 788L1163 774" stroke="#5f5d5a"/><path d="M1170 785L1179 797" stroke="#6b645e"/><path d="M1165 786L1177 775" stroke="#7a7876"/><path d="M1172 782L1159 786" stroke="#4c4a48"/><path d="M1172 784L1163 793" stroke="#a4a2a0"/><path d="M1169 786L1161 775" stroke="#54504c"/><path d="M1167 787L1180 773" stroke="#a4a2a0"/><path d="M1169 788L1160 775" stroke="#5f5d5a"/><path d="M1169 781L1150 787" stroke="#4c4a48"/><path d="M1173 787L1179 796" stroke="#7a7876"/><path d="M1168 783L1166 798" stroke="#857f7a"/><path d="M1170 788L1185 781" stroke="#54504c"/><path d="M1169 789L1178 790" stroke="#54504c"/><path d="M1166 783L1182 781" stroke="#54504c"/><path d="M1168 788L1179 798" stroke="#6b645e"/><path d="M1169 782L1171 793" stroke="#4c4a48"/><path d="M1170 782L1181 799" stroke="#7a7876"/><path d="M1167 781L1164 794" stroke="#5f5d5a"/><path d="M1166 781L1165 772" stroke="#7a7876"/><path d="M1172 788L1161 774" stroke="#8f8d8b"/><path d="M1172 783L1175 798" stroke="#6b645e"/><path d="M1173 786L1163 778" stroke="#4c4a48"/><path d="M1172 783L1162 800" stroke="#5f5d5a"/><path d="M1172 783L1177 773" stroke="#857f7a"/><path d="M1170 783L1157 781" stroke="#4c4a48"/><path d="M1169 782L1170 801" stroke="#8f8d8b"/><path d="M1169 786L1178 791" stroke="#54504c"/><path d="M1167 786L1161 795" stroke="#4c4a48"/><path d="M1170 786L1169 795" stroke="#857f7a"/><path d="M1168 786L1171 770" stroke="#54504c"/><path d="M1166 783L1160 794" stroke="#a4a2a0"/><path d="M1171 786L1154 788" stroke="#6b645e"/><path d="M1167 784L1176 774" stroke="#5f5d5a"/><path d="M1170 786L1183 795" stroke="#6b645e"/><path d="M1172 782L1163 766" stroke="#857f7a"/><path d="M1166 782L1169 802" stroke="#8f8d8b"/><path d="M1172 787L1163 767" stroke="#6b645e"/><path d="M1170 787L1164 798" stroke="#8f8d8b"/><path d="M1168 782L1164 795" stroke="#7a7876"/><path d="M1169 786L1169 770" stroke="#8f8d8b"/><path d="M1169 783L1165 793" stroke="#54504c"/><path d="M1166 787L1179 797" stroke="#7a7876"/><path d="M1169 782L1182 793" stroke="#7a7876"/><path d="M1170 788L1160 777" stroke="#a4a2a0"/><path d="M1169 787L1186 780" stroke="#5f5d5a"/><path d="M1172 787L1164 776" stroke="#857f7a"/><path d="M1166 782L1168 766" stroke="#3e3c3a"/><path d="M1166 782L1179 788" stroke="#6b645e"/><path d="M1166 784L1176 798" stroke="#a4a2a0"/><path d="M1166 788L1157 792" stroke="#54504c"/><path d="M1168 785L1180 790" stroke="#4c4a48"/><path d="M1165 785L1173 798" stroke="#6b645e"/><path d="M1169 785L1154 780" stroke="#857f7a"/><path d="M1170 785L1180 782" stroke="#54504c"/><path d="M1172 783L1162 774" stroke="#3e3c3a"/><path d="M1172 782L1177 792" stroke="#8f8d8b"/><path d="M1166 783L1187 786" stroke="#a4a2a0"/><path d="M1168 785L1177 773" stroke="#a4a2a0"/><path d="M1169 789L1156 788" stroke="#3e3c3a"/><path d="M1166 785L1183 771" stroke="#4c4a48"/><path d="M1166 784L1151 778" stroke="#857f7a"/><path d="M1166 783L1186 779" stroke="#5f5d5a"/><path d="M1170 788L1182 797" stroke="#5f5d5a"/><path d="M1168 785L1161 792" stroke="#7a7876"/><path d="M1167 784L1170 774" stroke="#7a7876"/><path d="M1165 785L1160 787" stroke="#6b645e"/><path d="M1195 789L1186 784" stroke="#3e3c3a"/><path d="M1201 793L1184 802" stroke="#54504c"/><path d="M1197 793L1188 804" stroke="#5f5d5a"/><path d="M1194 795L1189 802" stroke="#5f5d5a"/><path d="M1199 795L1205 803" stroke="#3e3c3a"/><path d="M1198 789L1207 795" stroke="#857f7a"/><path d="M1199 790L1214 805" stroke="#857f7a"/><path d="M1200 796L1188 801" stroke="#54504c"/><path d="M1198 793L1213 781" stroke="#6b645e"/><path d="M1201 796L1184 785" stroke="#5f5d5a"/><path d="M1199 790L1182 789" stroke="#5f5d5a"/><path d="M1195 795L1215 794" stroke="#6b645e"/><path d="M1201 792L1179 794" stroke="#6b645e"/><path d="M1201 795L1188 811" stroke="#54504c"/><path d="M1200 789L1196 803" stroke="#3e3c3a"/><path d="M1198 791L1213 787" stroke="#5f5d5a"/><path d="M1201 790L1206 808" stroke="#54504c"/><path d="M1195 792L1186 797" stroke="#857f7a"/><path d="M1195 791L1185 801" stroke="#54504c"/><path d="M1196 791L1217 795" stroke="#857f7a"/><path d="M1199 791L1181 797" stroke="#a4a2a0"/><path d="M1202 797L1192 784" stroke="#8f8d8b"/><path d="M1196 795L1215 787" stroke="#7a7876"/><path d="M1198 791L1208 785" stroke="#7a7876"/><path d="M1200 795L1212 784" stroke="#4c4a48"/><path d="M1199 795L1185 792" stroke="#857f7a"/><path d="M1202 791L1197 782" stroke="#6b645e"/><path d="M1201 796L1201 814" stroke="#5f5d5a"/><path d="M1201 796L1209 777" stroke="#7a7876"/><path d="M1194 795L1198 783" stroke="#54504c"/><path d="M1201 791L1177 795" stroke="#3e3c3a"/><path d="M1199 790L1192 807" stroke="#5f5d5a"/><path d="M1198 791L1213 782" stroke="#54504c"/><path d="M1200 790L1181 798" stroke="#857f7a"/><path d="M1195 797L1219 791" stroke="#8f8d8b"/><path d="M1199 789L1205 778" stroke="#4c4a48"/><path d="M1199 792L1210 780" stroke="#6b645e"/><path d="M1201 793L1192 802" stroke="#5f5d5a"/><path d="M1200 797L1213 798" stroke="#3e3c3a"/><path d="M1200 794L1206 773" stroke="#3e3c3a"/><path d="M1197 789L1189 786" stroke="#a4a2a0"/><path d="M1199 796L1206 778" stroke="#3e3c3a"/><path d="M1201 794L1201 771" stroke="#3e3c3a"/><path d="M1194 794L1194 777" stroke="#a4a2a0"/><path d="M1199 795L1194 802" stroke="#7a7876"/><path d="M1197 795L1198 782" stroke="#857f7a"/><path d="M1199 791L1186 811" stroke="#8f8d8b"/><path d="M1201 791L1191 807" stroke="#54504c"/><path d="M1200 792L1182 794" stroke="#6b645e"/><path d="M1201 795L1181 804" stroke="#4c4a48"/><path d="M1201 797L1208 797" stroke="#7a7876"/><path d="M1199 794L1200 782" stroke="#7a7876"/><path d="M1202 789L1212 809" stroke="#857f7a"/><path d="M1196 791L1180 800" stroke="#5f5d5a"/><path d="M1201 797L1192 809" stroke="#a4a2a0"/><path d="M1201 792L1187 788" stroke="#6b645e"/><path d="M1195 797L1182 781" stroke="#3e3c3a"/><path d="M1199 796L1211 806" stroke="#857f7a"/><path d="M1201 793L1212 808" stroke="#3e3c3a"/><path d="M1194 793L1186 797" stroke="#857f7a"/><path d="M1200 792L1212 793" stroke="#4c4a48"/><path d="M1198 796L1200 776" stroke="#54504c"/><path d="M1197 795L1210 779" stroke="#6b645e"/><path d="M1195 790L1190 802" stroke="#5f5d5a"/><path d="M1194 790L1217 792" stroke="#3e3c3a"/><path d="M1202 791L1214 798" stroke="#54504c"/><path d="M1201 790L1199 805" stroke="#4c4a48"/><path d="M1202 792L1185 786" stroke="#857f7a"/><path d="M1198 792L1206 779" stroke="#7a7876"/><path d="M1200 791L1186 782" stroke="#8f8d8b"/><path d="M1196 790L1190 775" stroke="#8f8d8b"/><path d="M1198 789L1219 789" stroke="#8f8d8b"/><path d="M1195 794L1184 808" stroke="#7a7876"/><path d="M1201 789L1219 793" stroke="#7a7876"/><path d="M1195 793L1210 789" stroke="#8f8d8b"/><path d="M1198 790L1212 798" stroke="#6b645e"/><path d="M1194 793L1180 784" stroke="#6b645e"/><path d="M1200 791L1180 789" stroke="#4c4a48"/><path d="M1196 797L1203 808" stroke="#6b645e"/><path d="M1198 789L1184 792" stroke="#5f5d5a"/><path d="M1202 791L1188 782" stroke="#54504c"/><path d="M1196 789L1212 799" stroke="#857f7a"/><path d="M1197 797L1205 800" stroke="#3e3c3a"/><path d="M1199 794L1211 794" stroke="#5f5d5a"/><path d="M1199 793L1204 774" stroke="#4c4a48"/><path d="M1199 795L1185 802" stroke="#4c4a48"/><path d="M1201 795L1177 795" stroke="#3e3c3a"/><path d="M1198 793L1201 806" stroke="#5f5d5a"/><path d="M1197 796L1188 797" stroke="#6b645e"/><path d="M1196 793L1217 789" stroke="#6b645e"/><path d="M1199 793L1219 791" stroke="#857f7a"/><path d="M1200 793L1184 790" stroke="#7a7876"/><path d="M1198 793L1201 803" stroke="#54504c"/><path d="M1201 794L1216 800" stroke="#54504c"/><path d="M1222 783L1229 790" stroke="#a4a2a0"/><path d="M1226 782L1239 773" stroke="#6b645e"/><path d="M1227 781L1223 793" stroke="#8f8d8b"/><path d="M1226 778L1239 777" stroke="#6b645e"/><path d="M1222 779L1222 764" stroke="#8f8d8b"/><path d="M1222 781L1226 771" stroke="#3e3c3a"/><path d="M1225 785L1241 774" stroke="#4c4a48"/><path d="M1221 783L1213 771" stroke="#a4a2a0"/><path d="M1227 784L1220 802" stroke="#54504c"/><path d="M1221 779L1225 791" stroke="#a4a2a0"/><path d="M1220 779L1228 770" stroke="#857f7a"/><path d="M1221 782L1228 766" stroke="#6b645e"/><path d="M1220 781L1239 769" stroke="#6b645e"/><path d="M1226 783L1237 775" stroke="#7a7876"/><path d="M1221 784L1228 774" stroke="#7a7876"/><path d="M1224 779L1209 773" stroke="#3e3c3a"/><path d="M1222 784L1209 781" stroke="#857f7a"/><path d="M1224 784L1206 771" stroke="#6b645e"/><path d="M1224 785L1221 795" stroke="#54504c"/><path d="M1228 782L1211 778" stroke="#4c4a48"/><path d="M1224 779L1240 782" stroke="#54504c"/><path d="M1226 781L1217 798" stroke="#8f8d8b"/><path d="M1223 785L1223 766" stroke="#857f7a"/><path d="M1226 781L1222 801" stroke="#857f7a"/><path d="M1223 783L1239 779" stroke="#4c4a48"/><path d="M1221 784L1221 791" stroke="#4c4a48"/><path d="M1221 785L1231 795" stroke="#6b645e"/><path d="M1221 784L1245 783" stroke="#3e3c3a"/><path d="M1224 785L1243 779" stroke="#a4a2a0"/><path d="M1227 778L1236 792" stroke="#3e3c3a"/><path d="M1228 783L1211 776" stroke="#8f8d8b"/><path d="M1227 780L1222 797" stroke="#5f5d5a"/><path d="M1222 782L1216 794" stroke="#3e3c3a"/><path d="M1224 783L1210 790" stroke="#6b645e"/><path d="M1222 786L1211 767" stroke="#4c4a48"/><path d="M1223 786L1212 778" stroke="#6b645e"/><path d="M1223 786L1203 782" stroke="#6b645e"/><path d="M1224 782L1213 791" stroke="#4c4a48"/><path d="M1221 786L1205 774" stroke="#8f8d8b"/><path d="M1228 784L1234 783" stroke="#6b645e"/><path d="M1220 779L1233 777" stroke="#3e3c3a"/><path d="M1224 785L1234 783" stroke="#a4a2a0"/><path d="M1225 785L1211 770" stroke="#8f8d8b"/><path d="M1223 784L1218 771" stroke="#a4a2a0"/><path d="M1222 782L1212 789" stroke="#8f8d8b"/><path d="M1221 780L1228 770" stroke="#5f5d5a"/><path d="M1222 784L1230 796" stroke="#7a7876"/><path d="M1223 786L1209 773" stroke="#5f5d5a"/><path d="M1222 784L1209 786" stroke="#4c4a48"/><path d="M1221 782L1243 781" stroke="#7a7876"/><path d="M1223 782L1228 793" stroke="#3e3c3a"/><path d="M1224 782L1234 770" stroke="#8f8d8b"/><path d="M1222 784L1218 764" stroke="#857f7a"/><path d="M1222 783L1232 788" stroke="#857f7a"/><path d="M1223 785L1224 791" stroke="#a4a2a0"/><path d="M1224 781L1238 777" stroke="#5f5d5a"/><path d="M1226 781L1236 794" stroke="#a4a2a0"/><path d="M1222 781L1211 780" stroke="#54504c"/><path d="M1224 783L1227 770" stroke="#4c4a48"/><path d="M1225 781L1231 776" stroke="#a4a2a0"/><path d="M1224 779L1218 769" stroke="#a4a2a0"/><path d="M1223 783L1212 783" stroke="#6b645e"/><path d="M1223 785L1236 788" stroke="#7a7876"/><path d="M1228 781L1224 771" stroke="#857f7a"/><path d="M1220 784L1242 783" stroke="#4c4a48"/><path d="M1226 780L1235 787" stroke="#857f7a"/><path d="M1224 779L1205 781" stroke="#4c4a48"/><path d="M1226 782L1234 787" stroke="#857f7a"/><path d="M1223 785L1210 790" stroke="#3e3c3a"/><path d="M1227 784L1205 778" stroke="#7a7876"/><path d="M1225 779L1218 767" stroke="#8f8d8b"/><path d="M1224 783L1220 798" stroke="#4c4a48"/><path d="M1227 778L1213 787" stroke="#6b645e"/><path d="M1224 781L1233 793" stroke="#857f7a"/><path d="M1226 784L1212 769" stroke="#857f7a"/><path d="M1224 780L1238 779" stroke="#3e3c3a"/><path d="M1224 782L1227 794" stroke="#8f8d8b"/><path d="M1225 782L1218 789" stroke="#6b645e"/><path d="M1226 780L1226 772" stroke="#7a7876"/><path d="M1228 781L1243 784" stroke="#7a7876"/><path d="M1227 785L1214 770" stroke="#4c4a48"/><path d="M1227 780L1224 770" stroke="#a4a2a0"/><path d="M1226 786L1219 773" stroke="#6b645e"/><path d="M1224 781L1210 772" stroke="#54504c"/><path d="M1224 784L1238 789" stroke="#4c4a48"/><path d="M1225 778L1242 790" stroke="#a4a2a0"/><path d="M1227 782L1238 777" stroke="#8f8d8b"/><path d="M1222 782L1235 794" stroke="#6b645e"/><path d="M1221 780L1211 785" stroke="#54504c"/><path d="M1224 784L1231 788" stroke="#857f7a"/><path d="M1244 790L1239 799" stroke="#a4a2a0"/><path d="M1250 784L1262 795" stroke="#3e3c3a"/><path d="M1246 789L1267 799" stroke="#a4a2a0"/><path d="M1246 788L1229 800" stroke="#3e3c3a"/><path d="M1246 788L1257 777" stroke="#a4a2a0"/><path d="M1251 789L1237 768" stroke="#7a7876"/><path d="M1249 789L1252 768" stroke="#7a7876"/><path d="M1246 785L1239 797" stroke="#54504c"/><path d="M1249 791L1265 791" stroke="#4c4a48"/><path d="M1245 787L1231 790" stroke="#3e3c3a"/><path d="M1247 784L1229 786" stroke="#6b645e"/><path d="M1249 788L1254 774" stroke="#7a7876"/><path d="M1251 792L1261 774" stroke="#3e3c3a"/><path d="M1249 788L1265 788" stroke="#6b645e"/><path d="M1252 788L1257 804" stroke="#3e3c3a"/><path d="M1248 786L1265 789" stroke="#54504c"/><path d="M1247 788L1251 772" stroke="#6b645e"/><path d="M1252 791L1235 802" stroke="#54504c"/><path d="M1250 791L1227 782" stroke="#857f7a"/><path d="M1245 791L1230 778" stroke="#54504c"/><path d="M1248 786L1230 794" stroke="#3e3c3a"/><path d="M1252 792L1258 772" stroke="#4c4a48"/><path d="M1250 792L1250 774" stroke="#857f7a"/><path d="M1244 788L1236 798" stroke="#3e3c3a"/><path d="M1251 788L1246 805" stroke="#4c4a48"/><path d="M1251 789L1244 778" stroke="#5f5d5a"/><path d="M1251 787L1231 789" stroke="#54504c"/><path d="M1251 790L1262 779" stroke="#5f5d5a"/><path d="M1252 785L1231 802" stroke="#3e3c3a"/><path d="M1248 788L1232 787" stroke="#4c4a48"/><path d="M1249 786L1258 778" stroke="#5f5d5a"/><path d="M1245 785L1263 783" stroke="#3e3c3a"/><path d="M1252 786L1226 782" stroke="#6b645e"/><path d="M1245 790L1264 798" stroke="#5f5d5a"/><path d="M1249 785L1257 806" stroke="#4c4a48"/><path d="M1249 787L1235 803" stroke="#7a7876"/><path d="M1246 790L1262 801" stroke="#8f8d8b"/><path d="M1247 788L1258 777" stroke="#8f8d8b"/><path d="M1250 787L1259 769" stroke="#5f5d5a"/><path d="M1245 791L1251 803" stroke="#4c4a48"/><path d="M1249 790L1270 784" stroke="#7a7876"/><path d="M1248 792L1229 780" stroke="#3e3c3a"/><path d="M1249 792L1233 792" stroke="#a4a2a0"/><path d="M1250 786L1245 810" stroke="#a4a2a0"/><path d="M1252 788L1226 793" stroke="#857f7a"/><path d="M1252 791L1252 811" stroke="#3e3c3a"/><path d="M1248 787L1270 784" stroke="#6b645e"/><path d="M1250 785L1267 795" stroke="#4c4a48"/><path d="M1248 791L1245 804" stroke="#6b645e"/><path d="M1244 784L1238 777" stroke="#54504c"/><path d="M1252 788L1234 777" stroke="#857f7a"/><path d="M1246 785L1238 792" stroke="#4c4a48"/><path d="M1246 787L1233 790" stroke="#6b645e"/><path d="M1250 790L1232 804" stroke="#857f7a"/><path d="M1250 787L1226 784" stroke="#6b645e"/><path d="M1252 791L1246 806" stroke="#4c4a48"/><path d="M1250 788L1238 768" stroke="#857f7a"/><path d="M1246 787L1240 800" stroke="#5f5d5a"/><path d="M1252 787L1240 804" stroke="#54504c"/><path d="M1246 784L1250 772" stroke="#7a7876"/><path d="M1245 789L1243 810" stroke="#a4a2a0"/><path d="M1250 792L1234 774" stroke="#3e3c3a"/><path d="M1246 785L1263 779" stroke="#7a7876"/><path d="M1249 785L1259 794" stroke="#3e3c3a"/><path d="M1247 790L1255 797" stroke="#54504c"/><path d="M1245 785L1237 778" stroke="#7a7876"/><path d="M1247 787L1259 782" stroke="#8f8d8b"/><path d="M1244 788L1260 803" stroke="#a4a2a0"/><path d="M1244 789L1248 777" stroke="#a4a2a0"/><path d="M1244 788L1234 793" stroke="#4c4a48"/><path d="M1250 789L1259 793" stroke="#857f7a"/><path d="M1250 784L1228 789" stroke="#54504c"/><path d="M1247 792L1257 775" stroke="#4c4a48"/><path d="M1246 787L1266 792" stroke="#54504c"/><path d="M1248 791L1262 795" stroke="#4c4a48"/><path d="M1244 786L1248 806" stroke="#8f8d8b"/><path d="M1251 790L1234 778" stroke="#4c4a48"/><path d="M1249 788L1256 778" stroke="#6b645e"/><path d="M1247 788L1235 787" stroke="#8f8d8b"/><path d="M1245 791L1248 802" stroke="#3e3c3a"/><path d="M1249 784L1259 785" stroke="#857f7a"/><path d="M1250 791L1237 798" stroke="#6b645e"/><path d="M1247 790L1238 789" stroke="#3e3c3a"/><path d="M1247 790L1236 791" stroke="#3e3c3a"/><path d="M1247 785L1251 774" stroke="#4c4a48"/><path d="M1246 788L1238 794" stroke="#5f5d5a"/><path d="M1250 790L1254 771" stroke="#7a7876"/><path d="M1248 787L1247 769" stroke="#857f7a"/><path d="M1248 786L1235 786" stroke="#5f5d5a"/><path d="M1247 785L1244 770" stroke="#5f5d5a"/><path d="M1247 791L1253 772" stroke="#3e3c3a"/><path d="M1249 789L1237 797" stroke="#857f7a"/><path d="M1246 790L1235 777" stroke="#857f7a"/><path d="M1250 792L1260 782" stroke="#3e3c3a"/><path d="M1247 789L1259 794" stroke="#8f8d8b"/><path d="M1250 789L1251 771" stroke="#4c4a48"/><path d="M1245 784L1265 774" stroke="#7a7876"/><path d="M1246 786L1255 795" stroke="#3e3c3a"/><path d="M1245 789L1265 777" stroke="#857f7a"/><path d="M1267 772L1252 767" stroke="#7a7876"/><path d="M1263 773L1274 775" stroke="#a4a2a0"/><path d="M1267 774L1253 763" stroke="#5f5d5a"/><path d="M1266 772L1254 757" stroke="#4c4a48"/><path d="M1270 767L1272 785" stroke="#4c4a48"/><path d="M1270 766L1258 773" stroke="#857f7a"/><path d="M1269 767L1275 758" stroke="#54504c"/><path d="M1263 772L1264 784" stroke="#5f5d5a"/><path d="M1263 770L1285 769" stroke="#54504c"/><path d="M1266 770L1275 776" stroke="#3e3c3a"/><path d="M1266 768L1273 760" stroke="#a4a2a0"/><path d="M1264 769L1268 762" stroke="#5f5d5a"/><path d="M1266 771L1273 759" stroke="#8f8d8b"/><path d="M1263 770L1266 783" stroke="#6b645e"/><path d="M1262 769L1266 781" stroke="#a4a2a0"/><path d="M1267 772L1258 777" stroke="#6b645e"/><path d="M1263 768L1276 785" stroke="#5f5d5a"/><path d="M1269 773L1261 783" stroke="#4c4a48"/><path d="M1263 769L1274 771" stroke="#a4a2a0"/><path d="M1269 768L1260 783" stroke="#5f5d5a"/><path d="M1263 770L1262 779" stroke="#a4a2a0"/><path d="M1268 772L1268 781" stroke="#4c4a48"/><path d="M1266 769L1255 785" stroke="#8f8d8b"/><path d="M1270 773L1275 777" stroke="#4c4a48"/><path d="M1262 768L1267 789" stroke="#7a7876"/><path d="M1267 766L1282 766" stroke="#6b645e"/><path d="M1266 767L1276 766" stroke="#857f7a"/><path d="M1265 773L1279 761" stroke="#5f5d5a"/><path d="M1268 772L1271 781" stroke="#a4a2a0"/><path d="M1269 770L1255 758" stroke="#54504c"/><path d="M1269 769L1276 774" stroke="#6b645e"/><path d="M1265 770L1280 766" stroke="#857f7a"/><path d="M1268 770L1266 758" stroke="#6b645e"/><path d="M1265 771L1269 760" stroke="#4c4a48"/><path d="M1266 770L1270 783" stroke="#a4a2a0"/><path d="M1265 769L1279 764" stroke="#a4a2a0"/><path d="M1268 768L1269 787" stroke="#4c4a48"/><path d="M1268 769L1284 772" stroke="#6b645e"/><path d="M1263 769L1250 776" stroke="#7a7876"/><path d="M1267 773L1254 781" stroke="#a4a2a0"/><path d="M1267 772L1270 782" stroke="#6b645e"/><path d="M1269 774L1254 763" stroke="#8f8d8b"/><path d="M1268 766L1264 754" stroke="#7a7876"/><path d="M1265 768L1266 752" stroke="#4c4a48"/><path d="M1265 767L1278 777" stroke="#a4a2a0"/><path d="M1262 772L1279 783" stroke="#3e3c3a"/><path d="M1264 768L1256 761" stroke="#857f7a"/><path d="M1268 769L1252 762" stroke="#3e3c3a"/><path d="M1266 773L1260 781" stroke="#6b645e"/><path d="M1267 768L1264 779" stroke="#a4a2a0"/><path d="M1265 770L1264 756" stroke="#8f8d8b"/><path d="M1265 774L1256 762" stroke="#5f5d5a"/><path d="M1267 768L1280 761" stroke="#857f7a"/><path d="M1268 771L1273 775" stroke="#3e3c3a"/><path d="M1267 767L1278 758" stroke="#6b645e"/><path d="M1267 769L1255 779" stroke="#a4a2a0"/><path d="M1267 774L1276 776" stroke="#8f8d8b"/><path d="M1263 770L1259 778" stroke="#5f5d5a"/><path d="M1267 771L1271 778" stroke="#3e3c3a"/><path d="M1264 769L1275 765" stroke="#6b645e"/><path d="M1262 770L1274 768" stroke="#a4a2a0"/><path d="M1266 771L1279 766" stroke="#7a7876"/><path d="M1269 773L1257 777" stroke="#6b645e"/><path d="M1266 774L1260 782" stroke="#857f7a"/><path d="M1264 770L1258 764" stroke="#54504c"/><path d="M1269 770L1280 772" stroke="#5f5d5a"/><path d="M1264 767L1281 774" stroke="#7a7876"/><path d="M1266 766L1279 783" stroke="#4c4a48"/><path d="M1267 774L1267 786" stroke="#3e3c3a"/><path d="M1263 770L1281 762" stroke="#a4a2a0"/><path d="M1265 771L1262 777" stroke="#5f5d5a"/><path d="M1264 771L1279 764" stroke="#5f5d5a"/><path d="M1269 772L1265 759" stroke="#3e3c3a"/><path d="M1266 767L1269 785" stroke="#5f5d5a"/><path d="M1265 768L1274 775" stroke="#7a7876"/><path d="M1269 767L1269 785" stroke="#5f5d5a"/><path d="M1270 773L1263 782" stroke="#54504c"/><path d="M1268 767L1250 767" stroke="#857f7a"/><path d="M1270 772L1277 767" stroke="#5f5d5a"/><path d="M1263 767L1266 780" stroke="#a4a2a0"/><path d="M1266 774L1258 758" stroke="#4c4a48"/><path d="M1066 751L1078 753" stroke="#a4a2a0"/><path d="M1068 754L1060 761" stroke="#8f8d8b"/><path d="M1067 753L1062 762" stroke="#7a7876"/><path d="M1072 751L1066 745" stroke="#3e3c3a"/><path d="M1068 749L1057 750" stroke="#54504c"/><path d="M1071 752L1068 766" stroke="#54504c"/><path d="M1072 752L1057 756" stroke="#4c4a48"/><path d="M1073 750L1080 749" stroke="#4c4a48"/><path d="M1072 748L1059 749" stroke="#8f8d8b"/><path d="M1070 756L1057 746" stroke="#6b645e"/><path d="M1068 752L1073 739" stroke="#857f7a"/><path d="M1070 752L1060 755" stroke="#5f5d5a"/><path d="M1069 754L1081 751" stroke="#4c4a48"/><path d="M1073 752L1061 741" stroke="#3e3c3a"/><path d="M1070 750L1070 758" stroke="#8f8d8b"/><path d="M1074 754L1061 747" stroke="#857f7a"/><path d="M1071 752L1062 745" stroke="#7a7876"/><path d="M1068 755L1067 743" stroke="#5f5d5a"/><path d="M1068 752L1056 748" stroke="#5f5d5a"/><path d="M1074 752L1063 750" stroke="#3e3c3a"/><path d="M1071 753L1061 761" stroke="#857f7a"/><path d="M1070 755L1079 751" stroke="#54504c"/><path d="M1071 755L1078 742" stroke="#857f7a"/><path d="M1070 756L1078 756" stroke="#a4a2a0"/><path d="M1069 754L1073 742" stroke="#54504c"/><path d="M1069 754L1070 739" stroke="#3e3c3a"/><path d="M1070 751L1059 758" stroke="#857f7a"/><path d="M1069 754L1067 760" stroke="#3e3c3a"/><path d="M1072 751L1066 746" stroke="#857f7a"/><path d="M1067 752L1079 758" stroke="#6b645e"/><path d="M1071 754L1071 743" stroke="#5f5d5a"/><path d="M1068 754L1062 758" stroke="#7a7876"/><path d="M1071 752L1082 745" stroke="#7a7876"/><path d="M1069 749L1066 741" stroke="#3e3c3a"/><path d="M1074 749L1062 745" stroke="#857f7a"/><path d="M1072 755L1056 754" stroke="#54504c"/><path d="M1070 749L1059 754" stroke="#7a7876"/><path d="M1070 756L1077 754" stroke="#6b645e"/><path d="M1068 753L1062 752" stroke="#a4a2a0"/><path d="M1073 753L1064 759" stroke="#4c4a48"/><path d="M1067 754L1069 759" stroke="#6b645e"/><path d="M1068 755L1080 756" stroke="#a4a2a0"/><path d="M1070 751L1062 742" stroke="#8f8d8b"/><path d="M1069 752L1072 761" stroke="#4c4a48"/><path d="M1073 748L1063 758" stroke="#3e3c3a"/><path d="M1072 752L1066 758" stroke="#4c4a48"/><path d="M1069 755L1073 766" stroke="#7a7876"/><path d="M1074 748L1077 748" stroke="#6b645e"/><path d="M1067 752L1077 752" stroke="#8f8d8b"/><path d="M1074 748L1068 739" stroke="#7a7876"/><path d="M1070 755L1069 763" stroke="#3e3c3a"/><path d="M1073 752L1079 756" stroke="#8f8d8b"/><path d="M1067 754L1078 742" stroke="#54504c"/><path d="M1073 755L1069 743" stroke="#3e3c3a"/><path d="M1068 756L1071 765" stroke="#5f5d5a"/><path d="M1070 751L1083 747" stroke="#54504c"/><path d="M1069 752L1071 740" stroke="#6b645e"/><path d="M1070 754L1068 738" stroke="#6b645e"/><path d="M1069 754L1078 751" stroke="#6b645e"/><path d="M1071 753L1080 747" stroke="#3e3c3a"/><path d="M1069 753L1059 762" stroke="#6b645e"/><path d="M1069 755L1079 755" stroke="#7a7876"/><path d="M1068 753L1074 759" stroke="#857f7a"/><path d="M1131 772L1130 785" stroke="#3e3c3a"/><path d="M1130 767L1115 773" stroke="#857f7a"/><path d="M1127 774L1132 757" stroke="#7a7876"/><path d="M1133 770L1141 770" stroke="#7a7876"/><path d="M1133 769L1135 761" stroke="#857f7a"/><path d="M1132 770L1123 767" stroke="#857f7a"/><path d="M1132 768L1146 772" stroke="#6b645e"/><path d="M1127 773L1123 757" stroke="#54504c"/><path d="M1132 768L1126 779" stroke="#857f7a"/><path d="M1126 766L1142 772" stroke="#857f7a"/><path d="M1132 772L1140 761" stroke="#6b645e"/><path d="M1130 771L1122 769" stroke="#857f7a"/><path d="M1131 773L1135 762" stroke="#7a7876"/><path d="M1129 769L1115 772" stroke="#857f7a"/><path d="M1131 772L1143 768" stroke="#857f7a"/><path d="M1128 769L1117 777" stroke="#7a7876"/><path d="M1132 767L1144 771" stroke="#7a7876"/><path d="M1131 772L1134 760" stroke="#4c4a48"/><path d="M1128 772L1130 759" stroke="#857f7a"/><path d="M1134 772L1125 781" stroke="#54504c"/><path d="M1126 774L1123 767" stroke="#7a7876"/><path d="M1130 767L1129 783" stroke="#4c4a48"/><path d="M1132 773L1130 784" stroke="#7a7876"/><path d="M1130 768L1122 783" stroke="#a4a2a0"/><path d="M1127 770L1123 785" stroke="#3e3c3a"/><path d="M1129 771L1122 773" stroke="#7a7876"/><path d="M1129 767L1145 776" stroke="#4c4a48"/><path d="M1127 773L1118 769" stroke="#8f8d8b"/><path d="M1130 772L1119 761" stroke="#54504c"/><path d="M1129 768L1134 758" stroke="#6b645e"/><path d="M1126 769L1140 761" stroke="#54504c"/><path d="M1132 770L1119 781" stroke="#5f5d5a"/><path d="M1128 771L1127 763" stroke="#a4a2a0"/><path d="M1133 770L1125 776" stroke="#4c4a48"/><path d="M1132 769L1126 763" stroke="#3e3c3a"/><path d="M1132 773L1120 769" stroke="#54504c"/><path d="M1128 773L1133 779" stroke="#3e3c3a"/><path d="M1131 769L1119 770" stroke="#8f8d8b"/><path d="M1130 772L1138 770" stroke="#6b645e"/><path d="M1129 772L1143 774" stroke="#54504c"/><path d="M1130 767L1126 759" stroke="#a4a2a0"/><path d="M1133 767L1116 768" stroke="#4c4a48"/><path d="M1133 771L1129 760" stroke="#a4a2a0"/><path d="M1133 772L1118 764" stroke="#4c4a48"/><path d="M1131 773L1137 769" stroke="#7a7876"/><path d="M1132 773L1135 777" stroke="#5f5d5a"/><path d="M1130 767L1142 764" stroke="#8f8d8b"/><path d="M1131 766L1121 759" stroke="#8f8d8b"/><path d="M1129 766L1120 782" stroke="#6b645e"/><path d="M1129 769L1123 778" stroke="#8f8d8b"/><path d="M1127 774L1119 782" stroke="#8f8d8b"/><path d="M1131 772L1137 782" stroke="#a4a2a0"/><path d="M1127 771L1125 763" stroke="#6b645e"/><path d="M1132 766L1123 773" stroke="#6b645e"/><path d="M1127 768L1134 761" stroke="#5f5d5a"/><path d="M1133 770L1123 777" stroke="#8f8d8b"/><path d="M1132 772L1133 782" stroke="#a4a2a0"/><path d="M1129 774L1140 779" stroke="#4c4a48"/><path d="M1132 770L1130 779" stroke="#6b645e"/><path d="M1132 767L1128 760" stroke="#857f7a"/><path d="M1132 774L1120 766" stroke="#a4a2a0"/><path d="M1132 768L1119 769" stroke="#4c4a48"/><path d="M1127 769L1115 766" stroke="#7a7876"/><path d="M1128 771L1126 777" stroke="#54504c"/><path d="M1134 770L1126 777" stroke="#5f5d5a"/><path d="M1129 766L1131 781" stroke="#a4a2a0"/><path d="M1131 774L1133 761" stroke="#8f8d8b"/><path d="M1133 766L1135 759" stroke="#857f7a"/><path d="M1131 766L1116 764" stroke="#5f5d5a"/><path d="M1129 769L1134 763" stroke="#857f7a"/><path d="M1132 773L1141 782" stroke="#a4a2a0"/><path d="M1127 767L1122 770" stroke="#5f5d5a"/><path d="M1182 771L1180 760" stroke="#8f8d8b"/><path d="M1182 770L1194 778" stroke="#6b645e"/><path d="M1186 771L1192 768" stroke="#6b645e"/><path d="M1187 770L1180 780" stroke="#3e3c3a"/><path d="M1187 772L1181 765" stroke="#8f8d8b"/><path d="M1186 769L1180 759" stroke="#54504c"/><path d="M1185 773L1176 783" stroke="#3e3c3a"/><path d="M1186 769L1177 766" stroke="#3e3c3a"/><path d="M1186 775L1188 779" stroke="#6b645e"/><path d="M1188 774L1176 779" stroke="#4c4a48"/><path d="M1188 771L1178 777" stroke="#4c4a48"/><path d="M1181 771L1177 777" stroke="#8f8d8b"/><path d="M1181 772L1179 766" stroke="#4c4a48"/><path d="M1188 769L1178 768" stroke="#857f7a"/><path d="M1186 768L1197 778" stroke="#54504c"/><path d="M1183 775L1197 777" stroke="#6b645e"/><path d="M1186 770L1188 765" stroke="#5f5d5a"/><path d="M1181 776L1197 766" stroke="#8f8d8b"/><path d="M1187 769L1188 784" stroke="#a4a2a0"/><path d="M1185 772L1197 780" stroke="#7a7876"/><path d="M1182 773L1191 784" stroke="#3e3c3a"/><path d="M1187 774L1174 762" stroke="#a4a2a0"/><path d="M1186 774L1174 774" stroke="#5f5d5a"/><path d="M1186 768L1183 785" stroke="#3e3c3a"/><path d="M1182 772L1179 776" stroke="#6b645e"/><path d="M1188 771L1176 762" stroke="#6b645e"/><path d="M1184 769L1174 782" stroke="#3e3c3a"/><path d="M1185 769L1179 775" stroke="#8f8d8b"/><path d="M1187 776L1179 763" stroke="#7a7876"/><path d="M1186 770L1194 762" stroke="#8f8d8b"/><path d="M1187 776L1187 787" stroke="#857f7a"/><path d="M1185 769L1184 780" stroke="#5f5d5a"/><path d="M1188 770L1179 775" stroke="#8f8d8b"/><path d="M1182 771L1184 779" stroke="#857f7a"/><path d="M1184 770L1178 771" stroke="#7a7876"/><path d="M1183 769L1184 765" stroke="#6b645e"/><path d="M1187 771L1176 777" stroke="#3e3c3a"/><path d="M1183 770L1186 779" stroke="#857f7a"/><path d="M1183 773L1193 760" stroke="#857f7a"/><path d="M1183 775L1179 769" stroke="#4c4a48"/><path d="M1186 771L1177 773" stroke="#8f8d8b"/><path d="M1183 771L1184 782" stroke="#5f5d5a"/><path d="M1188 773L1181 767" stroke="#7a7876"/><path d="M1186 772L1182 785" stroke="#a4a2a0"/><path d="M1189 774L1179 762" stroke="#5f5d5a"/><path d="M1186 773L1179 785" stroke="#3e3c3a"/><path d="M1187 772L1198 770" stroke="#a4a2a0"/><path d="M1189 772L1195 780" stroke="#a4a2a0"/><path d="M1182 770L1187 778" stroke="#4c4a48"/><path d="M1187 769L1197 778" stroke="#8f8d8b"/><path d="M1184 774L1190 776" stroke="#7a7876"/><path d="M1182 769L1187 785" stroke="#3e3c3a"/><path d="M1184 769L1190 759" stroke="#8f8d8b"/><path d="M1183 769L1180 780" stroke="#857f7a"/><path d="M1182 773L1182 763" stroke="#8f8d8b"/><path d="M1183 774L1184 782" stroke="#4c4a48"/><path d="M1182 775L1192 774" stroke="#8f8d8b"/><path d="M1186 776L1191 767" stroke="#857f7a"/><path d="M1181 770L1176 772" stroke="#6b645e"/><path d="M1182 773L1180 783" stroke="#8f8d8b"/><path d="M1183 772L1195 771" stroke="#857f7a"/><path d="M1182 769L1191 763" stroke="#4c4a48"/><path d="M1187 769L1177 774" stroke="#5f5d5a"/><path d="M1212 799L1224 805" stroke="#6b645e"/><path d="M1212 799L1212 795" stroke="#4c4a48"/><path d="M1208 800L1218 801" stroke="#6b645e"/><path d="M1213 804L1202 803" stroke="#857f7a"/><path d="M1214 800L1220 806" stroke="#6b645e"/><path d="M1212 803L1220 796" stroke="#5f5d5a"/><path d="M1210 803L1201 807" stroke="#a4a2a0"/><path d="M1210 800L1203 802" stroke="#54504c"/><path d="M1209 799L1220 804" stroke="#3e3c3a"/><path d="M1212 800L1212 809" stroke="#5f5d5a"/><path d="M1209 799L1206 801" stroke="#54504c"/><path d="M1210 805L1207 807" stroke="#3e3c3a"/><path d="M1208 805L1205 802" stroke="#4c4a48"/><path d="M1211 799L1212 788" stroke="#4c4a48"/><path d="M1214 802L1212 795" stroke="#7a7876"/><path d="M1209 805L1225 797" stroke="#a4a2a0"/><path d="M1209 802L1218 813" stroke="#54504c"/><path d="M1212 805L1213 809" stroke="#857f7a"/><path d="M1214 805L1203 811" stroke="#54504c"/><path d="M1213 805L1214 816" stroke="#857f7a"/><path d="M1211 800L1215 809" stroke="#8f8d8b"/><path d="M1215 798L1219 797" stroke="#6b645e"/><path d="M1214 800L1226 805" stroke="#3e3c3a"/><path d="M1208 799L1202 807" stroke="#54504c"/><path d="M1216 804L1200 802" stroke="#7a7876"/><path d="M1211 803L1207 808" stroke="#857f7a"/><path d="M1209 800L1219 809" stroke="#857f7a"/><path d="M1210 800L1209 812" stroke="#54504c"/><path d="M1211 800L1211 788" stroke="#8f8d8b"/><path d="M1212 800L1219 790" stroke="#4c4a48"/><path d="M1208 799L1213 815" stroke="#3e3c3a"/><path d="M1216 799L1216 790" stroke="#6b645e"/><path d="M1214 802L1212 796" stroke="#7a7876"/><path d="M1214 804L1209 808" stroke="#a4a2a0"/><path d="M1213 799L1201 802" stroke="#7a7876"/><path d="M1211 804L1204 804" stroke="#3e3c3a"/><path d="M1210 801L1210 814" stroke="#3e3c3a"/><path d="M1214 803L1198 802" stroke="#5f5d5a"/><path d="M1213 798L1217 812" stroke="#6b645e"/><path d="M1209 801L1214 814" stroke="#a4a2a0"/><path d="M1213 800L1207 806" stroke="#a4a2a0"/><path d="M1211 806L1221 801" stroke="#5f5d5a"/><path d="M1209 806L1207 816" stroke="#54504c"/><path d="M1208 806L1203 801" stroke="#857f7a"/><path d="M1214 804L1199 808" stroke="#5f5d5a"/><path d="M1210 800L1218 812" stroke="#5f5d5a"/><path d="M1213 803L1207 793" stroke="#a4a2a0"/><path d="M1215 806L1200 799" stroke="#857f7a"/><path d="M1209 802L1224 805" stroke="#6b645e"/><path d="M1213 803L1218 798" stroke="#54504c"/><path d="M1211 804L1202 804" stroke="#5f5d5a"/><path d="M1211 803L1202 799" stroke="#857f7a"/><path d="M1214 798L1223 803" stroke="#8f8d8b"/><path d="M1209 802L1217 796" stroke="#6b645e"/><path d="M1211 802L1212 792" stroke="#54504c"/><path d="M1215 800L1211 809" stroke="#7a7876"/><path d="M1210 800L1219 800" stroke="#6b645e"/><path d="M1216 803L1223 800" stroke="#5f5d5a"/><path d="M1209 805L1212 817" stroke="#5f5d5a"/><path d="M1210 804L1206 806" stroke="#54504c"/><path d="M1212 799L1206 806" stroke="#a4a2a0"/><path d="M1208 802L1206 792" stroke="#3e3c3a"/><path d="M1215 803L1218 811" stroke="#8f8d8b"/><path d="M1236 800L1237 811" stroke="#5f5d5a"/><path d="M1234 802L1235 810" stroke="#5f5d5a"/><path d="M1234 800L1247 804" stroke="#a4a2a0"/><path d="M1232 802L1233 796" stroke="#6b645e"/><path d="M1234 799L1227 803" stroke="#4c4a48"/><path d="M1237 803L1242 798" stroke="#54504c"/><path d="M1238 805L1226 798" stroke="#6b645e"/><path d="M1240 802L1225 797" stroke="#857f7a"/><path d="M1238 802L1239 789" stroke="#5f5d5a"/><path d="M1237 805L1245 799" stroke="#3e3c3a"/><path d="M1233 805L1243 791" stroke="#54504c"/><path d="M1236 802L1244 802" stroke="#5f5d5a"/><path d="M1232 803L1238 810" stroke="#6b645e"/><path d="M1239 803L1231 790" stroke="#6b645e"/><path d="M1238 803L1233 809" stroke="#857f7a"/><path d="M1234 803L1234 791" stroke="#5f5d5a"/><path d="M1240 805L1229 812" stroke="#857f7a"/><path d="M1239 800L1240 796" stroke="#5f5d5a"/><path d="M1239 799L1247 795" stroke="#7a7876"/><path d="M1238 802L1242 813" stroke="#4c4a48"/><path d="M1235 804L1249 808" stroke="#a4a2a0"/><path d="M1235 801L1248 802" stroke="#a4a2a0"/><path d="M1237 806L1237 809" stroke="#8f8d8b"/><path d="M1235 798L1250 802" stroke="#6b645e"/><path d="M1233 805L1224 799" stroke="#857f7a"/><path d="M1233 803L1224 809" stroke="#7a7876"/><path d="M1234 800L1225 802" stroke="#a4a2a0"/><path d="M1237 801L1229 789" stroke="#8f8d8b"/><path d="M1239 804L1239 794" stroke="#3e3c3a"/><path d="M1236 805L1244 802" stroke="#4c4a48"/><path d="M1235 806L1247 804" stroke="#7a7876"/><path d="M1240 804L1244 805" stroke="#3e3c3a"/><path d="M1236 802L1238 793" stroke="#857f7a"/><path d="M1240 799L1228 796" stroke="#54504c"/><path d="M1238 799L1244 804" stroke="#7a7876"/><path d="M1234 798L1226 802" stroke="#4c4a48"/><path d="M1238 800L1246 791" stroke="#a4a2a0"/><path d="M1238 805L1242 813" stroke="#a4a2a0"/><path d="M1237 801L1229 810" stroke="#3e3c3a"/><path d="M1232 804L1229 803" stroke="#a4a2a0"/><path d="M1233 803L1244 809" stroke="#6b645e"/><path d="M1236 801L1233 793" stroke="#857f7a"/><path d="M1236 804L1246 797" stroke="#3e3c3a"/><path d="M1236 805L1243 791" stroke="#54504c"/><path d="M1237 803L1237 814" stroke="#7a7876"/><path d="M1234 806L1225 803" stroke="#5f5d5a"/><path d="M1239 805L1245 806" stroke="#3e3c3a"/><path d="M1234 805L1242 815" stroke="#5f5d5a"/><path d="M1240 801L1230 800" stroke="#857f7a"/><path d="M1235 799L1249 802" stroke="#5f5d5a"/><path d="M1234 801L1228 813" stroke="#4c4a48"/><path d="M1236 800L1245 802" stroke="#6b645e"/><path d="M1234 801L1244 799" stroke="#8f8d8b"/><path d="M1233 805L1248 807" stroke="#8f8d8b"/><path d="M1236 803L1245 800" stroke="#7a7876"/><path d="M1234 805L1248 808" stroke="#7a7876"/><path d="M1239 805L1242 811" stroke="#6b645e"/><path d="M1232 799L1244 811" stroke="#3e3c3a"/><path d="M1234 804L1238 792" stroke="#857f7a"/><path d="M1238 804L1228 802" stroke="#a4a2a0"/><path d="M1239 801L1225 805" stroke="#6b645e"/><path d="M1237 804L1238 808" stroke="#857f7a"/><path d="M1237 803L1224 799" stroke="#6b645e"/></g>
<g><circle cx="1028" cy="735" r="1.3" fill="#efefef"/><circle cx="1023" cy="743" r="1.3" fill="#efefef"/><circle cx="1019" cy="744" r="1.3" fill="#b9a89a"/><circle cx="1015" cy="740" r="1.3" fill="#b9a89a"/><circle cx="1015" cy="742" r="1.3" fill="#d8d6d4"/><circle cx="1018" cy="734" r="1.3" fill="#efefef"/><circle cx="1027" cy="743" r="1.3" fill="#efefef"/><circle cx="1044" cy="746" r="1.3" fill="#d8d6d4"/><circle cx="1036" cy="755" r="1.3" fill="#efefef"/><circle cx="1046" cy="747" r="1.3" fill="#d8d6d4"/><circle cx="1047" cy="750" r="1.3" fill="#b9a89a"/><circle cx="1047" cy="743" r="1.3" fill="#b9a89a"/><circle cx="1048" cy="747" r="1.3" fill="#d8d6d4"/><circle cx="1047" cy="736" r="1.3" fill="#b9a89a"/><circle cx="1032" cy="750" r="1.3" fill="#efefef"/><circle cx="1052" cy="749" r="1.3" fill="#efefef"/><circle cx="1041" cy="759" r="1.3" fill="#d8d6d4"/><circle cx="1108" cy="736" r="1.3" fill="#d8d6d4"/><circle cx="1084" cy="752" r="1.3" fill="#efefef"/><circle cx="1089" cy="748" r="1.3" fill="#b9a89a"/><circle cx="1091" cy="729" r="1.3" fill="#d8d6d4"/><circle cx="1086" cy="734" r="1.3" fill="#efefef"/><circle cx="1096" cy="750" r="1.3" fill="#d8d6d4"/><circle cx="1106" cy="726" r="1.3" fill="#d8d6d4"/><circle cx="1096" cy="736" r="1.3" fill="#b9a89a"/><circle cx="1077" cy="739" r="1.3" fill="#d8d6d4"/><circle cx="1100" cy="755" r="1.3" fill="#b9a89a"/><circle cx="1096" cy="742" r="1.3" fill="#efefef"/><circle cx="1090" cy="726" r="1.3" fill="#b9a89a"/><circle cx="1090" cy="735" r="1.3" fill="#efefef"/><circle cx="1119" cy="772" r="1.3" fill="#efefef"/><circle cx="1110" cy="754" r="1.3" fill="#b9a89a"/><circle cx="1111" cy="760" r="1.3" fill="#d8d6d4"/><circle cx="1095" cy="761" r="1.3" fill="#efefef"/><circle cx="1102" cy="749" r="1.3" fill="#d8d6d4"/><circle cx="1107" cy="763" r="1.3" fill="#d8d6d4"/><circle cx="1111" cy="762" r="1.3" fill="#b9a89a"/><circle cx="1107" cy="767" r="1.3" fill="#efefef"/><circle cx="1121" cy="760" r="1.3" fill="#d8d6d4"/><circle cx="1103" cy="756" r="1.3" fill="#d8d6d4"/><circle cx="1107" cy="763" r="1.3" fill="#efefef"/><circle cx="1141" cy="758" r="1.3" fill="#efefef"/><circle cx="1155" cy="758" r="1.3" fill="#b9a89a"/><circle cx="1156" cy="757" r="1.3" fill="#d8d6d4"/><circle cx="1162" cy="757" r="1.3" fill="#b9a89a"/><circle cx="1162" cy="760" r="1.3" fill="#d8d6d4"/><circle cx="1159" cy="774" r="1.3" fill="#d8d6d4"/><circle cx="1157" cy="775" r="1.3" fill="#efefef"/><circle cx="1162" cy="762" r="1.3" fill="#d8d6d4"/><circle cx="1166" cy="755" r="1.3" fill="#b9a89a"/><circle cx="1160" cy="763" r="1.3" fill="#efefef"/><circle cx="1151" cy="758" r="1.3" fill="#d8d6d4"/><circle cx="1149" cy="748" r="1.3" fill="#b9a89a"/><circle cx="1144" cy="796" r="1.3" fill="#b9a89a"/><circle cx="1143" cy="772" r="1.3" fill="#efefef"/><circle cx="1148" cy="782" r="1.3" fill="#d8d6d4"/><circle cx="1145" cy="790" r="1.3" fill="#d8d6d4"/><circle cx="1147" cy="784" r="1.3" fill="#efefef"/><circle cx="1142" cy="788" r="1.3" fill="#d8d6d4"/><circle cx="1147" cy="792" r="1.3" fill="#d8d6d4"/><circle cx="1139" cy="784" r="1.3" fill="#d8d6d4"/><circle cx="1144" cy="789" r="1.3" fill="#d8d6d4"/><circle cx="1152" cy="792" r="1.3" fill="#d8d6d4"/><circle cx="1148" cy="796" r="1.3" fill="#b9a89a"/><circle cx="1137" cy="791" r="1.3" fill="#efefef"/><circle cx="1135" cy="787" r="1.3" fill="#b9a89a"/><circle cx="1170" cy="786" r="1.3" fill="#b9a89a"/><circle cx="1170" cy="785" r="1.3" fill="#b9a89a"/><circle cx="1156" cy="775" r="1.3" fill="#d8d6d4"/><circle cx="1177" cy="800" r="1.3" fill="#d8d6d4"/><circle cx="1172" cy="783" r="1.3" fill="#b9a89a"/><circle cx="1167" cy="792" r="1.3" fill="#efefef"/><circle cx="1168" cy="782" r="1.3" fill="#b9a89a"/><circle cx="1175" cy="778" r="1.3" fill="#d8d6d4"/><circle cx="1165" cy="800" r="1.3" fill="#b9a89a"/><circle cx="1168" cy="786" r="1.3" fill="#b9a89a"/><circle cx="1173" cy="787" r="1.3" fill="#efefef"/><circle cx="1198" cy="790" r="1.3" fill="#efefef"/><circle cx="1205" cy="797" r="1.3" fill="#d8d6d4"/><circle cx="1199" cy="794" r="1.3" fill="#d8d6d4"/><circle cx="1205" cy="785" r="1.3" fill="#d8d6d4"/><circle cx="1206" cy="777" r="1.3" fill="#efefef"/><circle cx="1187" cy="787" r="1.3" fill="#efefef"/><circle cx="1198" cy="793" r="1.3" fill="#b9a89a"/><circle cx="1183" cy="800" r="1.3" fill="#d8d6d4"/><circle cx="1194" cy="790" r="1.3" fill="#d8d6d4"/><circle cx="1199" cy="799" r="1.3" fill="#efefef"/><circle cx="1199" cy="797" r="1.3" fill="#d8d6d4"/><circle cx="1197" cy="794" r="1.3" fill="#b9a89a"/><circle cx="1225" cy="780" r="1.3" fill="#b9a89a"/><circle cx="1221" cy="778" r="1.3" fill="#b9a89a"/><circle cx="1224" cy="769" r="1.3" fill="#d8d6d4"/><circle cx="1236" cy="778" r="1.3" fill="#d8d6d4"/><circle cx="1226" cy="783" r="1.3" fill="#b9a89a"/><circle cx="1219" cy="786" r="1.3" fill="#b9a89a"/><circle cx="1223" cy="786" r="1.3" fill="#d8d6d4"/><circle cx="1223" cy="783" r="1.3" fill="#b9a89a"/><circle cx="1224" cy="785" r="1.3" fill="#d8d6d4"/><circle cx="1233" cy="773" r="1.3" fill="#b9a89a"/><circle cx="1238" cy="773" r="1.3" fill="#b9a89a"/><circle cx="1228" cy="789" r="1.3" fill="#d8d6d4"/><circle cx="1247" cy="769" r="1.3" fill="#efefef"/><circle cx="1248" cy="782" r="1.3" fill="#d8d6d4"/><circle cx="1245" cy="801" r="1.3" fill="#efefef"/><circle cx="1247" cy="791" r="1.3" fill="#d8d6d4"/><circle cx="1241" cy="794" r="1.3" fill="#d8d6d4"/><circle cx="1255" cy="795" r="1.3" fill="#b9a89a"/><circle cx="1241" cy="796" r="1.3" fill="#d8d6d4"/><circle cx="1265" cy="791" r="1.3" fill="#efefef"/><circle cx="1247" cy="781" r="1.3" fill="#b9a89a"/><circle cx="1256" cy="783" r="1.3" fill="#efefef"/><circle cx="1259" cy="794" r="1.3" fill="#d8d6d4"/><circle cx="1229" cy="782" r="1.3" fill="#d8d6d4"/><circle cx="1251" cy="777" r="1.3" fill="#efefef"/><circle cx="1256" cy="770" r="1.3" fill="#d8d6d4"/><circle cx="1274" cy="778" r="1.3" fill="#efefef"/><circle cx="1265" cy="771" r="1.3" fill="#efefef"/><circle cx="1263" cy="772" r="1.3" fill="#d8d6d4"/><circle cx="1260" cy="783" r="1.3" fill="#d8d6d4"/><circle cx="1266" cy="769" r="1.3" fill="#b9a89a"/><circle cx="1263" cy="755" r="1.3" fill="#b9a89a"/><circle cx="1257" cy="776" r="1.3" fill="#d8d6d4"/><circle cx="1259" cy="767" r="1.3" fill="#b9a89a"/><circle cx="1269" cy="771" r="1.3" fill="#d8d6d4"/><circle cx="1062" cy="749" r="1.3" fill="#b9a89a"/><circle cx="1067" cy="745" r="1.3" fill="#d8d6d4"/><circle cx="1067" cy="753" r="1.3" fill="#d8d6d4"/><circle cx="1068" cy="749" r="1.3" fill="#b9a89a"/><circle cx="1078" cy="752" r="1.3" fill="#d8d6d4"/><circle cx="1076" cy="759" r="1.3" fill="#d8d6d4"/><circle cx="1076" cy="759" r="1.3" fill="#d8d6d4"/><circle cx="1064" cy="750" r="1.3" fill="#b9a89a"/><circle cx="1133" cy="773" r="1.3" fill="#efefef"/><circle cx="1137" cy="780" r="1.3" fill="#b9a89a"/><circle cx="1130" cy="771" r="1.3" fill="#d8d6d4"/><circle cx="1133" cy="777" r="1.3" fill="#d8d6d4"/><circle cx="1129" cy="757" r="1.3" fill="#efefef"/><circle cx="1124" cy="775" r="1.3" fill="#b9a89a"/><circle cx="1123" cy="770" r="1.3" fill="#efefef"/><circle cx="1133" cy="778" r="1.3" fill="#b9a89a"/><circle cx="1144" cy="768" r="1.3" fill="#efefef"/><circle cx="1192" cy="764" r="1.3" fill="#b9a89a"/><circle cx="1183" cy="773" r="1.3" fill="#d8d6d4"/><circle cx="1185" cy="772" r="1.3" fill="#b9a89a"/><circle cx="1185" cy="772" r="1.3" fill="#efefef"/><circle cx="1180" cy="768" r="1.3" fill="#d8d6d4"/><circle cx="1193" cy="781" r="1.3" fill="#b9a89a"/><circle cx="1189" cy="761" r="1.3" fill="#efefef"/><circle cx="1185" cy="774" r="1.3" fill="#b9a89a"/><circle cx="1216" cy="793" r="1.3" fill="#d8d6d4"/><circle cx="1212" cy="803" r="1.3" fill="#efefef"/><circle cx="1216" cy="791" r="1.3" fill="#efefef"/><circle cx="1212" cy="808" r="1.3" fill="#b9a89a"/><circle cx="1206" cy="801" r="1.3" fill="#b9a89a"/><circle cx="1201" cy="801" r="1.3" fill="#d8d6d4"/><circle cx="1216" cy="812" r="1.3" fill="#d8d6d4"/><circle cx="1220" cy="804" r="1.3" fill="#efefef"/><circle cx="1236" cy="800" r="1.3" fill="#b9a89a"/><circle cx="1227" cy="808" r="1.3" fill="#d8d6d4"/><circle cx="1247" cy="806" r="1.3" fill="#b9a89a"/><circle cx="1231" cy="795" r="1.3" fill="#efefef"/><circle cx="1243" cy="800" r="1.3" fill="#efefef"/><circle cx="1240" cy="808" r="1.3" fill="#b9a89a"/><circle cx="1243" cy="797" r="1.3" fill="#d8d6d4"/><circle cx="1242" cy="801" r="1.3" fill="#d8d6d4"/></g>
<circle cx="1226" cy="745" r="28" fill="#b8b8bc" opacity=".55" filter="url(#b2)"/><circle cx="1222" cy="740" r="27" fill="#8d5b56" filter="url(#b05)"/><g filter="url(#b05)"><ellipse cx="1219" cy="737" rx="3.9" ry="3.0" transform="rotate(118 1219 737)" fill="#e8c6cc"/><ellipse cx="1217" cy="728" rx="3.0" ry="1.9" transform="rotate(157 1217 728)" fill="#a0706c"/><ellipse cx="1244" cy="732" rx="4.6" ry="1.9" transform="rotate(157 1244 732)" fill="#f0d8dc"/><ellipse cx="1213" cy="754" rx="4.0" ry="2.0" transform="rotate(109 1213 754)" fill="#c79ba0"/><ellipse cx="1225" cy="753" rx="4.7" ry="1.9" transform="rotate(129 1225 753)" fill="#54302c"/><ellipse cx="1222" cy="729" rx="3.9" ry="1.6" transform="rotate(134 1222 729)" fill="#7b4a46"/><ellipse cx="1241" cy="743" rx="3.7" ry="2.6" transform="rotate(127 1241 743)" fill="#f0d8dc"/><ellipse cx="1240" cy="747" rx="4.7" ry="1.8" transform="rotate(163 1240 747)" fill="#e8c6cc"/><ellipse cx="1231" cy="732" rx="3.4" ry="1.5" transform="rotate(130 1231 732)" fill="#a0706c"/><ellipse cx="1215" cy="743" rx="4.5" ry="2.0" transform="rotate(24 1215 743)" fill="#c79ba0"/><ellipse cx="1211" cy="758" rx="5.0" ry="2.5" transform="rotate(114 1211 758)" fill="#f0d8dc"/><ellipse cx="1246" cy="740" rx="3.6" ry="2.6" transform="rotate(161 1246 740)" fill="#54302c"/><ellipse cx="1209" cy="737" rx="3.9" ry="1.7" transform="rotate(16 1209 737)" fill="#7b4a46"/><ellipse cx="1234" cy="738" rx="4.1" ry="1.9" transform="rotate(65 1234 738)" fill="#e8c6cc"/><ellipse cx="1203" cy="756" rx="4.7" ry="2.7" transform="rotate(108 1203 756)" fill="#a0706c"/><ellipse cx="1242" cy="752" rx="3.1" ry="1.9" transform="rotate(8 1242 752)" fill="#e8c6cc"/><ellipse cx="1216" cy="751" rx="4.6" ry="2.6" transform="rotate(133 1216 751)" fill="#c79ba0"/><ellipse cx="1223" cy="715" rx="4.6" ry="1.6" transform="rotate(141 1223 715)" fill="#7b4a46"/><ellipse cx="1231" cy="727" rx="4.4" ry="2.4" transform="rotate(61 1231 727)" fill="#a0706c"/><ellipse cx="1207" cy="743" rx="3.0" ry="2.8" transform="rotate(26 1207 743)" fill="#c79ba0"/><ellipse cx="1232" cy="732" rx="3.6" ry="2.3" transform="rotate(83 1232 732)" fill="#c79ba0"/><ellipse cx="1212" cy="740" rx="3.1" ry="2.2" transform="rotate(27 1212 740)" fill="#a0706c"/><ellipse cx="1198" cy="738" rx="4.9" ry="1.5" transform="rotate(106 1198 738)" fill="#7b4a46"/><ellipse cx="1216" cy="754" rx="2.9" ry="2.8" transform="rotate(101 1216 754)" fill="#54302c"/><ellipse cx="1238" cy="755" rx="5.0" ry="1.7" transform="rotate(29 1238 755)" fill="#c79ba0"/><ellipse cx="1209" cy="761" rx="4.1" ry="2.2" transform="rotate(16 1209 761)" fill="#f0d8dc"/><ellipse cx="1204" cy="736" rx="3.1" ry="1.8" transform="rotate(141 1204 736)" fill="#f0d8dc"/><ellipse cx="1225" cy="756" rx="2.8" ry="1.9" transform="rotate(130 1225 756)" fill="#c79ba0"/><ellipse cx="1210" cy="755" rx="4.1" ry="2.1" transform="rotate(135 1210 755)" fill="#7b4a46"/><ellipse cx="1221" cy="741" rx="2.9" ry="2.9" transform="rotate(89 1221 741)" fill="#a0706c"/><ellipse cx="1236" cy="741" rx="2.6" ry="2.6" transform="rotate(112 1236 741)" fill="#54302c"/><ellipse cx="1212" cy="761" rx="3.2" ry="2.2" transform="rotate(141 1212 761)" fill="#7b4a46"/><ellipse cx="1202" cy="727" rx="5.0" ry="2.9" transform="rotate(36 1202 727)" fill="#c79ba0"/><ellipse cx="1205" cy="733" rx="3.7" ry="2.7" transform="rotate(45 1205 733)" fill="#a0706c"/><ellipse cx="1219" cy="762" rx="2.8" ry="2.7" transform="rotate(66 1219 762)" fill="#6e3f3a"/><ellipse cx="1220" cy="758" rx="4.9" ry="1.9" transform="rotate(150 1220 758)" fill="#a0706c"/><ellipse cx="1207" cy="741" rx="2.8" ry="2.3" transform="rotate(152 1207 741)" fill="#a0706c"/><ellipse cx="1222" cy="739" rx="3.8" ry="2.0" transform="rotate(143 1222 739)" fill="#e8c6cc"/><ellipse cx="1208" cy="739" rx="4.0" ry="2.0" transform="rotate(120 1208 739)" fill="#7b4a46"/><ellipse cx="1213" cy="746" rx="3.1" ry="1.5" transform="rotate(22 1213 746)" fill="#f0d8dc"/><ellipse cx="1223" cy="764" rx="3.8" ry="2.3" transform="rotate(24 1223 764)" fill="#f0d8dc"/><ellipse cx="1208" cy="737" rx="2.6" ry="2.9" transform="rotate(12 1208 737)" fill="#e8c6cc"/><ellipse cx="1230" cy="734" rx="2.8" ry="2.1" transform="rotate(117 1230 734)" fill="#f0d8dc"/><ellipse cx="1229" cy="725" rx="4.1" ry="2.9" transform="rotate(11 1229 725)" fill="#54302c"/><ellipse cx="1204" cy="737" rx="3.6" ry="2.1" transform="rotate(43 1204 737)" fill="#e8c6cc"/><ellipse cx="1212" cy="737" rx="3.4" ry="2.9" transform="rotate(33 1212 737)" fill="#6e3f3a"/></g>
<circle cx="1302" cy="765" r="25" fill="#b8b8bc" opacity=".55" filter="url(#b2)"/><circle cx="1298" cy="760" r="24" fill="#33262a" filter="url(#b05)"/><g filter="url(#b05)"><ellipse cx="1289" cy="748" rx="4.3" ry="2.8" transform="rotate(139 1289 748)" fill="#4a3630"/><ellipse cx="1279" cy="771" rx="4.8" ry="1.8" transform="rotate(67 1279 771)" fill="#2a1e1e"/><ellipse cx="1290" cy="751" rx="2.6" ry="2.9" transform="rotate(48 1290 751)" fill="#4a3630"/><ellipse cx="1284" cy="765" rx="2.7" ry="1.7" transform="rotate(134 1284 765)" fill="#6e5348"/><ellipse cx="1290" cy="750" rx="3.3" ry="2.0" transform="rotate(139 1290 750)" fill="#4a3630"/><ellipse cx="1295" cy="764" rx="5.0" ry="2.2" transform="rotate(151 1295 764)" fill="#6e5348"/><ellipse cx="1303" cy="760" rx="4.7" ry="2.7" transform="rotate(3 1303 760)" fill="#2a1e1e"/><ellipse cx="1295" cy="767" rx="3.2" ry="2.7" transform="rotate(32 1295 767)" fill="#8a6e62"/><ellipse cx="1303" cy="752" rx="2.5" ry="2.7" transform="rotate(8 1303 752)" fill="#0e0c14"/><ellipse cx="1305" cy="765" rx="4.9" ry="2.9" transform="rotate(11 1305 765)" fill="#d8d0cc"/><ellipse cx="1300" cy="756" rx="3.2" ry="2.8" transform="rotate(35 1300 756)" fill="#6e5348"/><ellipse cx="1306" cy="761" rx="4.2" ry="1.8" transform="rotate(24 1306 761)" fill="#15131a"/><ellipse cx="1317" cy="755" rx="3.8" ry="2.6" transform="rotate(55 1317 755)" fill="#4a3630"/><ellipse cx="1285" cy="770" rx="2.9" ry="1.6" transform="rotate(34 1285 770)" fill="#d8d0cc"/><ellipse cx="1307" cy="770" rx="4.1" ry="2.0" transform="rotate(157 1307 770)" fill="#8a6e62"/><ellipse cx="1305" cy="747" rx="2.7" ry="2.6" transform="rotate(94 1305 747)" fill="#8a6e62"/><ellipse cx="1279" cy="750" rx="3.3" ry="3.0" transform="rotate(90 1279 750)" fill="#0e0c14"/><ellipse cx="1280" cy="767" rx="3.1" ry="2.6" transform="rotate(35 1280 767)" fill="#2a1e1e"/><ellipse cx="1283" cy="752" rx="3.0" ry="1.9" transform="rotate(152 1283 752)" fill="#d8d0cc"/><ellipse cx="1300" cy="748" rx="3.3" ry="2.4" transform="rotate(80 1300 748)" fill="#2a1e1e"/><ellipse cx="1288" cy="751" rx="3.4" ry="2.1" transform="rotate(151 1288 751)" fill="#6e5348"/><ellipse cx="1288" cy="759" rx="4.8" ry="1.8" transform="rotate(81 1288 759)" fill="#4a3630"/><ellipse cx="1281" cy="759" rx="4.3" ry="3.0" transform="rotate(8 1281 759)" fill="#d8d0cc"/><ellipse cx="1306" cy="757" rx="3.3" ry="2.2" transform="rotate(60 1306 757)" fill="#d8d0cc"/><ellipse cx="1304" cy="771" rx="3.4" ry="1.7" transform="rotate(100 1304 771)" fill="#15131a"/><ellipse cx="1288" cy="751" rx="3.4" ry="1.9" transform="rotate(17 1288 751)" fill="#2a1e1e"/><ellipse cx="1283" cy="772" rx="3.4" ry="3.0" transform="rotate(110 1283 772)" fill="#d8d0cc"/><ellipse cx="1286" cy="774" rx="4.7" ry="1.9" transform="rotate(32 1286 774)" fill="#4a3630"/><ellipse cx="1319" cy="753" rx="4.5" ry="1.7" transform="rotate(4 1319 753)" fill="#2a1e1e"/><ellipse cx="1300" cy="769" rx="4.8" ry="2.8" transform="rotate(56 1300 769)" fill="#d8d0cc"/><ellipse cx="1302" cy="765" rx="2.7" ry="3.0" transform="rotate(12 1302 765)" fill="#d8d0cc"/><ellipse cx="1287" cy="772" rx="4.0" ry="2.0" transform="rotate(130 1287 772)" fill="#2a1e1e"/><ellipse cx="1279" cy="756" rx="3.7" ry="1.6" transform="rotate(147 1279 756)" fill="#15131a"/><ellipse cx="1307" cy="777" rx="4.4" ry="2.0" transform="rotate(165 1307 777)" fill="#6e5348"/><ellipse cx="1295" cy="747" rx="2.9" ry="2.0" transform="rotate(162 1295 747)" fill="#0e0c14"/><ellipse cx="1289" cy="748" rx="4.3" ry="2.6" transform="rotate(129 1289 748)" fill="#4a3630"/><ellipse cx="1296" cy="753" rx="4.9" ry="1.7" transform="rotate(37 1296 753)" fill="#8a6e62"/><ellipse cx="1295" cy="759" rx="4.9" ry="2.5" transform="rotate(44 1295 759)" fill="#8a6e62"/><ellipse cx="1306" cy="745" rx="3.9" ry="2.3" transform="rotate(25 1306 745)" fill="#6e5348"/><ellipse cx="1289" cy="746" rx="3.8" ry="1.7" transform="rotate(6 1289 746)" fill="#8a6e62"/><ellipse cx="1318" cy="757" rx="3.0" ry="2.4" transform="rotate(35 1318 757)" fill="#d8d0cc"/><ellipse cx="1286" cy="749" rx="2.6" ry="2.7" transform="rotate(150 1286 749)" fill="#2a1e1e"/><ellipse cx="1295" cy="752" rx="3.4" ry="2.6" transform="rotate(37 1295 752)" fill="#6e5348"/><ellipse cx="1313" cy="746" rx="4.0" ry="1.8" transform="rotate(37 1313 746)" fill="#4a3630"/><ellipse cx="1309" cy="768" rx="3.3" ry="1.7" transform="rotate(32 1309 768)" fill="#2a1e1e"/><ellipse cx="1303" cy="778" rx="4.1" ry="2.1" transform="rotate(136 1303 778)" fill="#2a1e1e"/></g>
<circle cx="1357" cy="838" r="26" fill="#b8b8bc" opacity=".55" filter="url(#b2)"/><circle cx="1353" cy="833" r="25" fill="#6f4e44" filter="url(#b05)"/><g filter="url(#b05)"><ellipse cx="1345" cy="835" rx="4.2" ry="3.0" transform="rotate(127 1345 835)" fill="#3a2620"/><ellipse cx="1356" cy="811" rx="2.5" ry="2.5" transform="rotate(97 1356 811)" fill="#2c1c18"/><ellipse cx="1356" cy="812" rx="3.6" ry="2.1" transform="rotate(63 1356 812)" fill="#2c1c18"/><ellipse cx="1371" cy="825" rx="4.6" ry="2.9" transform="rotate(124 1371 825)" fill="#e8e2de"/><ellipse cx="1352" cy="812" rx="3.8" ry="2.2" transform="rotate(62 1352 812)" fill="#54382e"/><ellipse cx="1333" cy="826" rx="2.7" ry="2.7" transform="rotate(121 1333 826)" fill="#2c1c18"/><ellipse cx="1351" cy="839" rx="5.0" ry="1.6" transform="rotate(163 1351 839)" fill="#2c1c18"/><ellipse cx="1367" cy="829" rx="4.0" ry="1.9" transform="rotate(75 1367 829)" fill="#a08478"/><ellipse cx="1348" cy="841" rx="4.0" ry="2.7" transform="rotate(176 1348 841)" fill="#f2eeec"/><ellipse cx="1345" cy="827" rx="3.9" ry="1.7" transform="rotate(155 1345 827)" fill="#f2eeec"/><ellipse cx="1350" cy="846" rx="4.7" ry="1.7" transform="rotate(31 1350 846)" fill="#3a2620"/><ellipse cx="1346" cy="820" rx="2.8" ry="2.8" transform="rotate(38 1346 820)" fill="#a08478"/><ellipse cx="1349" cy="855" rx="3.7" ry="2.9" transform="rotate(141 1349 855)" fill="#c4b4ac"/><ellipse cx="1340" cy="825" rx="4.6" ry="2.9" transform="rotate(165 1340 825)" fill="#3a2620"/><ellipse cx="1374" cy="840" rx="3.8" ry="1.9" transform="rotate(113 1374 840)" fill="#54382e"/><ellipse cx="1359" cy="854" rx="4.5" ry="1.9" transform="rotate(96 1359 854)" fill="#a08478"/><ellipse cx="1368" cy="843" rx="2.8" ry="1.6" transform="rotate(130 1368 843)" fill="#f2eeec"/><ellipse cx="1337" cy="818" rx="2.6" ry="2.0" transform="rotate(22 1337 818)" fill="#54382e"/><ellipse cx="1356" cy="825" rx="3.7" ry="2.5" transform="rotate(112 1356 825)" fill="#54382e"/><ellipse cx="1344" cy="825" rx="3.2" ry="2.6" transform="rotate(80 1344 825)" fill="#a08478"/><ellipse cx="1353" cy="831" rx="4.9" ry="2.2" transform="rotate(68 1353 831)" fill="#f2eeec"/><ellipse cx="1352" cy="818" rx="4.8" ry="2.5" transform="rotate(168 1352 818)" fill="#f2eeec"/><ellipse cx="1342" cy="845" rx="2.8" ry="1.6" transform="rotate(9 1342 845)" fill="#54382e"/><ellipse cx="1339" cy="836" rx="2.9" ry="2.4" transform="rotate(131 1339 836)" fill="#e8e2de"/><ellipse cx="1351" cy="832" rx="5.0" ry="2.4" transform="rotate(23 1351 832)" fill="#3a2620"/><ellipse cx="1372" cy="826" rx="4.0" ry="2.9" transform="rotate(101 1372 826)" fill="#c4b4ac"/><ellipse cx="1345" cy="848" rx="3.5" ry="2.7" transform="rotate(107 1345 848)" fill="#2c1c18"/><ellipse cx="1356" cy="840" rx="3.9" ry="2.2" transform="rotate(145 1356 840)" fill="#2c1c18"/><ellipse cx="1344" cy="828" rx="4.3" ry="2.6" transform="rotate(103 1344 828)" fill="#3a2620"/><ellipse cx="1339" cy="849" rx="2.9" ry="2.2" transform="rotate(54 1339 849)" fill="#a08478"/><ellipse cx="1354" cy="834" rx="2.8" ry="2.8" transform="rotate(58 1354 834)" fill="#c4b4ac"/><ellipse cx="1339" cy="844" rx="3.9" ry="1.8" transform="rotate(177 1339 844)" fill="#54382e"/><ellipse cx="1336" cy="842" rx="4.5" ry="2.4" transform="rotate(51 1336 842)" fill="#3a2620"/><ellipse cx="1346" cy="853" rx="3.5" ry="3.0" transform="rotate(97 1346 853)" fill="#c4b4ac"/><ellipse cx="1338" cy="846" rx="4.9" ry="2.2" transform="rotate(116 1338 846)" fill="#c4b4ac"/><ellipse cx="1360" cy="815" rx="2.6" ry="1.6" transform="rotate(146 1360 815)" fill="#e8e2de"/><ellipse cx="1340" cy="827" rx="3.0" ry="2.1" transform="rotate(135 1340 827)" fill="#2c1c18"/><ellipse cx="1368" cy="832" rx="3.3" ry="1.7" transform="rotate(137 1368 832)" fill="#3a2620"/><ellipse cx="1347" cy="812" rx="4.6" ry="1.5" transform="rotate(115 1347 812)" fill="#a08478"/><ellipse cx="1357" cy="849" rx="4.2" ry="1.8" transform="rotate(140 1357 849)" fill="#c4b4ac"/><ellipse cx="1364" cy="850" rx="4.3" ry="2.3" transform="rotate(99 1364 850)" fill="#2c1c18"/><ellipse cx="1354" cy="816" rx="4.9" ry="2.5" transform="rotate(132 1354 816)" fill="#2c1c18"/><ellipse cx="1343" cy="829" rx="3.1" ry="1.6" transform="rotate(119 1343 829)" fill="#f2eeec"/><ellipse cx="1369" cy="842" rx="3.0" ry="2.5" transform="rotate(44 1369 842)" fill="#2c1c18"/><ellipse cx="1353" cy="845" rx="3.5" ry="2.8" transform="rotate(128 1353 845)" fill="#3a2620"/><ellipse cx="1370" cy="835" rx="3.4" ry="1.9" transform="rotate(112 1370 835)" fill="#54382e"/></g>
<ellipse cx="1228" cy="884" rx="62" ry="66" fill="#ededef" filter="url(#b1)"/>
<path d="M1262 932l26 30" stroke="#d9d9db" stroke-width="30" stroke-linecap="round"/><path d="M1262 934l24 28" stroke="#f1f1f2" stroke-width="14" stroke-linecap="round"/>
<circle cx="1241" cy="871" r="60.500" fill="#fdfaf9" stroke="#16161c" stroke-width="5"/>
<circle cx="1240" cy="872" r="53" fill="url(#cof)" filter="url(#b1)"/>
<g transform="translate(1116,879) rotate(-10)"><ellipse cx="1" cy="11" rx="15" ry="8" fill="#c4c4c8" opacity=".6" filter="url(#b2)"/><ellipse cx="0" cy="0" rx="15" ry="12" fill="#5e3226" filter="url(#b05)"/><g filter="url(#b05)"><ellipse cx="-4.6" cy="5.1" rx="3" ry="1.500" fill="#7a4636"/><ellipse cx="10.0" cy="7.2" rx="3" ry="1.500" fill="#3e1e16"/><ellipse cx="-7.7" cy="-0.3" rx="3" ry="1.500" fill="#3e1e16"/><ellipse cx="2.6" cy="1.5" rx="3" ry="1.500" fill="#7a4636"/><ellipse cx="3.4" cy="-0.2" rx="3" ry="1.500" fill="#7a4636"/><ellipse cx="-10.4" cy="-6.8" rx="3" ry="1.500" fill="#3e1e16"/><ellipse cx="-4.8" cy="0.3" rx="3" ry="1.500" fill="#3e1e16"/><ellipse cx="5.2" cy="1.0" rx="3" ry="1.500" fill="#7a4636"/><ellipse cx="-5.3" cy="-5.4" rx="3" ry="1.500" fill="#3e1e16"/><ellipse cx="-6.9" cy="-2.2" rx="3" ry="1.500" fill="#3e1e16"/></g><path d="M14 -1h8" stroke="#5e3226" stroke-width="3"/></g>
<g transform="translate(1050,955) rotate(4)"><ellipse cx="1" cy="10" rx="18" ry="8" fill="#c4c4c8" opacity=".6" filter="url(#b2)"/><ellipse cx="0" cy="0" rx="18" ry="11" fill="#9c665c" filter="url(#b05)"/><g filter="url(#b05)"><ellipse cx="-4.8" cy="3.9" rx="3" ry="1.500" fill="#7e4e46"/><ellipse cx="0.3" cy="-5.4" rx="3" ry="1.500" fill="#b8877f"/><ellipse cx="-0.8" cy="2.4" rx="3" ry="1.500" fill="#7e4e46"/><ellipse cx="-2.3" cy="1.4" rx="3" ry="1.500" fill="#b8877f"/><ellipse cx="-11.2" cy="5.3" rx="3" ry="1.500" fill="#7e4e46"/><ellipse cx="-5.7" cy="2.0" rx="3" ry="1.500" fill="#7e4e46"/><ellipse cx="-11.0" cy="5.5" rx="3" ry="1.500" fill="#b8877f"/><ellipse cx="7.5" cy="5.6" rx="3" ry="1.500" fill="#7e4e46"/><ellipse cx="-0.0" cy="2.8" rx="3" ry="1.500" fill="#7e4e46"/><ellipse cx="10.5" cy="2.4" rx="3" ry="1.500" fill="#b8877f"/></g><path d="M17 -1h8" stroke="#9c665c" stroke-width="3"/></g>
<g transform="translate(1173,1038) rotate(-8)"><ellipse cx="1" cy="9" rx="14" ry="7" fill="#c4c4c8" opacity=".6" filter="url(#b2)"/><ellipse cx="0" cy="0" rx="14" ry="10" fill="#4f2a22" filter="url(#b05)"/><g filter="url(#b05)"><ellipse cx="3.0" cy="1.6" rx="3" ry="1.500" fill="#321812"/><ellipse cx="-0.8" cy="1.8" rx="3" ry="1.500" fill="#321812"/><ellipse cx="-1.5" cy="3.5" rx="3" ry="1.500" fill="#6e4034"/><ellipse cx="6.8" cy="-4.2" rx="3" ry="1.500" fill="#6e4034"/><ellipse cx="-6.9" cy="-0.7" rx="3" ry="1.500" fill="#321812"/><ellipse cx="-4.0" cy="-6.0" rx="3" ry="1.500" fill="#321812"/><ellipse cx="1.4" cy="-3.8" rx="3" ry="1.500" fill="#6e4034"/><ellipse cx="5.6" cy="-0.9" rx="3" ry="1.500" fill="#6e4034"/><ellipse cx="9.1" cy="-1.1" rx="3" ry="1.500" fill="#6e4034"/><ellipse cx="-2.7" cy="2.3" rx="3" ry="1.500" fill="#6e4034"/></g><path d="M13 -1h8" stroke="#4f2a22" stroke-width="3"/></g>
<g transform="translate(1102,1075) rotate(-38)"><ellipse cx="1" cy="13" rx="20" ry="10" fill="#c4c4c8" opacity=".6" filter="url(#b2)"/><ellipse cx="0" cy="0" rx="20" ry="14" fill="#553a34" filter="url(#b05)"/><g filter="url(#b05)"><ellipse cx="-7.2" cy="2.2" rx="3" ry="1.500" fill="#76564c"/><ellipse cx="4.0" cy="1.7" rx="3" ry="1.500" fill="#76564c"/><ellipse cx="-0.1" cy="-2.1" rx="3" ry="1.500" fill="#76564c"/><ellipse cx="5.1" cy="-0.6" rx="3" ry="1.500" fill="#76564c"/><ellipse cx="-2.1" cy="-4.6" rx="3" ry="1.500" fill="#33201c"/><ellipse cx="-3.1" cy="5.1" rx="3" ry="1.500" fill="#33201c"/><ellipse cx="9.7" cy="-7.2" rx="3" ry="1.500" fill="#33201c"/><ellipse cx="5.0" cy="-2.3" rx="3" ry="1.500" fill="#33201c"/><ellipse cx="-1.0" cy="8.1" rx="3" ry="1.500" fill="#33201c"/><ellipse cx="9.2" cy="-3.3" rx="3" ry="1.500" fill="#33201c"/></g><path d="M19 -1h8" stroke="#553a34" stroke-width="3"/></g>
<g transform="translate(1175,1177) rotate(108)"><ellipse cx="1" cy="9" rx="16" ry="7" fill="#c4c4c8" opacity=".6" filter="url(#b2)"/><ellipse cx="0" cy="0" rx="16" ry="10" fill="#5a2e24" filter="url(#b05)"/><g filter="url(#b05)"><ellipse cx="4.7" cy="2.0" rx="3" ry="1.500" fill="#3a1c14"/><ellipse cx="-1.5" cy="-1.6" rx="3" ry="1.500" fill="#7e4636"/><ellipse cx="4.1" cy="5.9" rx="3" ry="1.500" fill="#3a1c14"/><ellipse cx="9.4" cy="1.2" rx="3" ry="1.500" fill="#7e4636"/><ellipse cx="1.4" cy="-1.0" rx="3" ry="1.500" fill="#7e4636"/><ellipse cx="-7.9" cy="1.8" rx="3" ry="1.500" fill="#7e4636"/><ellipse cx="-7.9" cy="1.0" rx="3" ry="1.500" fill="#7e4636"/><ellipse cx="3.0" cy="0.6" rx="3" ry="1.500" fill="#3a1c14"/><ellipse cx="-8.5" cy="1.6" rx="3" ry="1.500" fill="#7e4636"/><ellipse cx="-8.7" cy="0.3" rx="3" ry="1.500" fill="#7e4636"/></g><path d="M15 -1h8" stroke="#5a2e24" stroke-width="3"/></g>
<polygon points="1262,1104 1340,1046 1420,1152 1342,1212" fill="#b0b0b8" opacity=".6" filter="url(#b4)"/>
<polygon points="1253,1094 1331,1036 1412,1142 1333,1201" fill="#c9a27e"/>
<polygon points="1253,1094 1331,1036 1338,1046 1262,1103" fill="#d9b896"/>
<polygon points="1296,1150 1333,1201 1380,1166 1380,1120" fill="#c0956f" opacity=".55"/>
<g stroke="#ead8bc" stroke-width="2.200" fill="none"><path d="M1272 1128L1318 1108L1343 1084M1296 1073L1326 1110L1370 1169"/><path d="M1320 1108c4-22 22-48 16-52s-22 26-16 52M1320 1108c-10 10-18 22-10 24s14-10 10-24M1320 1108l-6 26"/></g>
<polygon points="1368,1075 1340,1100 1336,1150 1352,1180 1368,1195 1380,1180 1380,1080" fill="#3e2c24" opacity=".55" filter="url(#b1)"/>
<g stroke-width="2.600" stroke-linecap="round" fill="none"><path d="M1369 1024L1368 1200" stroke="#4a3a32" stroke-width="2.500"/><path d="M1368 1040l-13 -12M1368 1040l9 -13" stroke="#6d625c"/><path d="M1368 1045l-15 -14M1368 1045l10 -14" stroke="#6d625c"/><path d="M1368 1051l-17 -15M1368 1051l12 -16" stroke="#6d625c"/><path d="M1368 1056l-19 -17M1368 1056l13 -18" stroke="#6d625c"/><path d="M1368 1062l-21 -19M1368 1062l14 -20" stroke="#6d625c"/><path d="M1368 1067l-23 -20M1368 1067l15 -22" stroke="#3a2a22"/><path d="M1368 1072l-25 -22M1368 1072l17 -23" stroke="#3a2a22"/><path d="M1368 1078l-26 -23M1368 1078l18 -25" stroke="#3a2a22"/><path d="M1368 1083l-28 -25M1368 1083l19 -26" stroke="#3a2a22"/><path d="M1368 1089l-29 -26M1368 1089l20 -28" stroke="#3a2a22"/><path d="M1368 1094l-31 -28M1368 1094l21 -29" stroke="#3a2a22"/><path d="M1368 1099l-32 -29M1368 1099l22 -30" stroke="#3a2a22"/><path d="M1368 1105l-33 -30M1368 1105l23 -32" stroke="#3a2a22"/><path d="M1368 1110l-35 -31M1368 1110l23 -33" stroke="#3a2a22"/><path d="M1368 1116l-36 -32M1368 1116l24 -34" stroke="#3a2a22"/><path d="M1368 1121l-36 -32M1368 1121l25 -34" stroke="#3a2a22"/><path d="M1368 1126l-37 -33M1368 1126l25 -35" stroke="#3a2a22"/><path d="M1368 1132l-38 -34M1368 1132l25 -36" stroke="#3a2a22"/><path d="M1368 1137l-38 -34M1368 1137l26 -36" stroke="#3a2a22"/><path d="M1368 1143l-38 -34M1368 1143l26 -36" stroke="#3a2a22"/><path d="M1368 1148l-38 -34M1368 1148l26 -36" stroke="#3a2a22"/><path d="M1368 1153l-38 -34M1368 1153l26 -36" stroke="#3a2a22"/><path d="M1368 1159l-38 -34M1368 1159l26 -36" stroke="#3a2a22"/><path d="M1368 1164l-38 -34M1368 1164l26 -36" stroke="#3a2a22"/><path d="M1368 1170l-37 -33M1368 1170l25 -35" stroke="#3a2a22"/><path d="M1368 1175l-35 -31M1368 1175l24 -33" stroke="#3a2a22"/><path d="M1368 1180l-29 -26M1368 1180l19 -27" stroke="#3a2a22"/><path d="M1368 1186l-23 -20M1368 1186l15 -22" stroke="#3a2a22"/><path d="M1368 1191l-17 -15M1368 1191l11 -16" stroke="#3a2a22"/><path d="M1368 1197l-11 -10M1368 1197l7 -10" stroke="#3a2a22"/></g>
</g></svg>
<div class="a" style="left:702px;top:836px;width:243px;height:52px;border:2px solid rgba(120,120,120,.75)"></div>
<div class="a" style="left:674px;top:1016px;width:308px;height:52px;border:2px solid rgba(120,120,120,.75)"></div>
<span class="t" style="left:711px;top:848px;font:bold 28px 'Liberation Serif',serif;letter-spacing:1.500px;color:#f2545b;line-height:1">IT&#39;S THE MOST</span>
<span class="t" style="left:684px;top:1028px;font:bold 28px 'Liberation Serif',serif;letter-spacing:1.300px;color:#f2545b;line-height:1">TIME OF THE YEAR</span>
<span class="t" style="left:667px;top:921px;font:italic 58px 'Liberation Serif',serif;color:rgba(242,84,91,.18);-webkit-text-stroke:1.600px #f0555c;line-height:1;transform-origin:0 0;transform:scaleX(.8) rotate(-2deg);letter-spacing:0">Wonderful</span>
<svg style="left:0;top:0" width="2560" height="1600" viewBox="0 0 2560 1600"><path d="M695 827H783M835 827H923M695 1073H783M835 1073H923M669 852V925M669 976V1048M949 852V925M949 976V1048M809 789V815" stroke="#6a6a6a" stroke-width="2" fill="none"/><rect x="663" y="821" width="12" height="12" fill="#fff" stroke="#6a6a6a" stroke-width="2"/><rect x="663" y="944" width="12" height="12" fill="#fff" stroke="#6a6a6a" stroke-width="2"/><rect x="663" y="1067" width="12" height="12" fill="#fff" stroke="#6a6a6a" stroke-width="2"/><rect x="803" y="821" width="12" height="12" fill="#fff" stroke="#6a6a6a" stroke-width="2"/><rect x="803" y="1067" width="12" height="12" fill="#fff" stroke="#6a6a6a" stroke-width="2"/><rect x="943" y="821" width="12" height="12" fill="#fff" stroke="#6a6a6a" stroke-width="2"/><rect x="943" y="944" width="12" height="12" fill="#fff" stroke="#6a6a6a" stroke-width="2"/><rect x="943" y="1067" width="12" height="12" fill="#fff" stroke="#6a6a6a" stroke-width="2"/><circle cx="809" cy="763" r="7.500" fill="#0ce10c" stroke="#1c2a1c" stroke-width="2"/><g stroke="#6a6a6a" stroke-width="2" fill="none"><path d="M683 1081V1109M935 1081V1109M699 1095H746M873 1095H920"/><path d="M684 1095l15 -8v16zM934 1095l-15 -8v16z"/></g><g stroke="#6a6a6a" stroke-width="2" fill="none"><path d="M633 841H661M633 1059H661M647 857V887M647 1013V1043"/><path d="M647 842l-8 15h16zM647 1058l-8 -15h16z"/></g></svg>
<span class="t dj" style="left:757px;top:1082px;font-size:25px;color:#7d7d7d;letter-spacing:-.2px">2.243 in</span>
<span class="t dj" style="left:597px;top:938px;width:100px;text-align:center;font-size:25px;color:#7d7d7d;letter-spacing:-.2px;transform:rotate(-90deg)">1.943 in</span>
<div class="a" style="left:1848px;top:296px;width:580px;height:1084px;background:#636162;border:2px solid #4d4c4b;border-right:none"></div>
<div class="a" style="left:1850px;top:298px;width:577px;height:34px;background:#dcdcdc"></div>
<span class="t" style="left:2052px;top:302px;font-size:24px;color:#595959;letter-spacing:0">TEXT STYLE</span>
<svg style="left:1855px;top:305px" width="20" height="12"><path d="M1.500 1.500l8.500 8 8.500 -8" stroke="#555" stroke-width="2.500" fill="none"/></svg>
<svg style="left:2404px;top:305px" width="15" height="15"><path d="M1 1l13 13M14 1L1 14" stroke="#4a4a4a" stroke-width="2.500" fill="none"/></svg>
<div class="a" style="left:1850px;top:332px;width:62px;height:64px;background:#474747"></div>
<span class="t" style="left:1857px;top:336px;font:54px 'Liberation Serif',serif;color:#fff;line-height:1">A</span><div class="a" style="left:1899px;top:342px;width:2px;height:42px;background:#fff"></div>
<span class="t" style="left:1930px;top:336px;font:bold 52px 'Liberation Serif',serif;color:#c6c6c6;line-height:1;transform:scaleX(.62);transform-origin:0 0">G</span>
<span class="t" style="left:1984px;top:340px;font:italic 25px 'DejaVu Serif',serif;color:#c6c6c6;line-height:1;transform:rotate(-8deg)">abc</span>
<svg style="left:2003px;top:360px" width="34" height="24"><path d="M2 12l5 9L32 2" stroke="#c6c6c6" stroke-width="2.500" fill="none"/></svg>
<div class="a" style="left:1850px;top:396px;width:577px;height:32px;background:#474747"></div>
<span class="t" style="left:1863px;top:402px;font:bold 19px 'DejaVu Sans Condensed','DejaVu Sans',sans-serif;color:#fff;line-height:1;letter-spacing:-.2px">Text Style</span>
<div class="a" style="left:1872px;top:445px;width:288px;height:34px;background:#7f7d7c;border-left:3px solid #717070;border-right:3px solid #717070"></div>
<span class="t dj" style="left:1877px;top:453px;font-size:23px;color:#b2b2b2;letter-spacing:-.1px">Playfair Display</span>
<div class="a" style="left:2184px;top:445px;width:110px;height:34px;background:#7f7d7c;border-left:3px solid #717070;border-right:3px solid #717070"></div>
<span class="t dj" style="left:2190px;top:453px;font-size:23px;color:#aeaeae;letter-spacing:-.3px">16.00</span>
<svg style="left:2308px;top:451px" width="24" height="20"><path fill="#cdcdcd" d="M0 0h24L12 20z"/></svg>
<span class="t dj" style="left:2358px;top:453px;font-size:20px;font-weight:bold;color:#b0b0b0">pt</span>
<div class="a" style="left:1871px;top:501px;width:513px;height:519px;border:2px solid #7b7a79;box-shadow:inset 2px 2px 0 #5a5958"></div>
<div class="a" style="left:1875px;top:968px;width:506px;height:50px;background:#474747"></div>
<div class="a" style="left:2403px;top:501px;width:1px;height:480px;border-left:1px dotted #4e4d4c"></div>
<div class="a" style="left:2386px;top:826px;width:17px;height:22px;background:#4a4a4a"></div>
<div class="a" style="left:2386px;top:981px;width:17px;height:38px;background:#555453"></div>
<svg style="left:2389px;top:986px" width="11" height="10"><path fill="#6e6d6c" d="M0 10h11L5.5 0z"/></svg>
<svg style="left:2389px;top:1004px" width="11" height="10"><path fill="#6e6d6c" d="M0 0h11L5.5 10z"/></svg>
<span class="t" style="left:1886px;top:507px;color:#a8a8a8;line-height:1;font:bold 37px 'Liberation Sans',sans-serif;transform:scaleX(.66);transform-origin:0 0">Oswald</span>
<span class="t" style="left:1886px;top:559px;color:#a8a8a8;line-height:1;font:32px 'Liberation Serif',serif;letter-spacing:.9px">Palatino</span>
<span class="t" style="left:1886px;top:622px;color:#a8a8a8;line-height:1;font:22px 'Liberation Serif',serif;transform:scaleX(.55);transform-origin:0 0;color:#8e8e8e">PAPRIKA</span>
<span class="t" style="left:1886px;top:658px;color:#a8a8a8;line-height:1;font:30px 'DejaVu Sans Light','DejaVu Sans',sans-serif;letter-spacing:-1px">Papyrus</span>
<span class="t" style="left:1886px;top:720px;color:#a8a8a8;line-height:1;font:bold 28px 'Liberation Sans',sans-serif;transform:scaleX(.78);transform-origin:0 0">Petal</span>
<span class="t" style="left:1886px;top:772px;color:#a8a8a8;line-height:1;font:bold 26px 'DejaVu Sans',sans-serif;letter-spacing:-1.500px;transform:scaleX(.93);transform-origin:0 0">PHOSPHATE</span>
<span class="t" style="left:1886px;top:819px;color:#a8a8a8;line-height:1;font:31px 'Liberation Sans',sans-serif">PingFang HK</span>
<span class="t" style="left:1886px;top:876px;color:#a8a8a8;line-height:1;font:bold 25px 'DejaVu Sans',sans-serif;letter-spacing:-1.500px;transform:scaleX(.93);transform-origin:0 0">PISTOLEER LASER</span>
<span class="t" style="left:1886px;top:919px;color:#a8a8a8;line-height:1;font:32px 'Liberation Serif',serif;letter-spacing:.5px">Plantagenet Cherokee</span>
<span class="t" style="left:1886px;top:975px;color:#a8a8a8;line-height:1;font:bold 32px 'Liberation Serif',serif;color:#fff;letter-spacing:-.6px">Playfair Display</span>
<div class="a" style="left:1872px;top:1032px;width:51px;height:61px;border:2px solid #7b7a79;background:transparent"></div>
<div class="a" style="left:1925px;top:1032px;width:50px;height:61px;border:2px solid #7b7a79;background:transparent"></div>
<div class="a" style="left:1977px;top:1032px;width:50px;height:61px;border:2px solid #7b7a79;background:transparent"></div>
<div class="a" style="left:2029px;top:1032px;width:48px;height:64px;border:2px solid #7b7a79;background:transparent"></div>
<span class="t" style="left:1879px;top:1033px;font:bold 56px 'Liberation Serif',serif;color:#c6c6c6;line-height:1">B</span>
<span class="t" style="left:1938px;top:1033px;font:italic 56px 'Liberation Serif',serif;color:#c6c6c6;line-height:1">I</span>
<span class="t" style="left:1984px;top:1034px;font:50px 'Liberation Serif',serif;color:#c6c6c6;line-height:1">U</span><div class="a" style="left:1984px;top:1080px;width:36px;height:3px;background:#c6c6c6"></div>
<svg style="left:2038.5px;top:1051.5px" width="23" height="21"><path fill="#cdcdcd" d="M0 0h23L11.5 21z"/></svg>
<div class="a" style="left:2082px;top:1032px;width:208px;height:61px;border:2px solid #7b7a79"></div>
<div class="a" style="left:2134px;top:1034px;width:52px;height:57px;background:#474747"></div>
<div class="a" style="left:2088px;top:1043px;width:40px;height:3px;background:#c6c6c6"></div><div class="a" style="left:2088px;top:1049.5px;width:28px;height:3px;background:#c6c6c6"></div><div class="a" style="left:2088px;top:1056px;width:40px;height:3px;background:#c6c6c6"></div><div class="a" style="left:2088px;top:1062.5px;width:28px;height:3px;background:#c6c6c6"></div><div class="a" style="left:2088px;top:1069px;width:40px;height:3px;background:#c6c6c6"></div><div class="a" style="left:2088px;top:1075.5px;width:28px;height:3px;background:#c6c6c6"></div><div class="a" style="left:2088px;top:1082px;width:40px;height:3px;background:#c6c6c6"></div>
<div class="a" style="left:2140px;top:1043px;width:40px;height:3px;background:#fff"></div><div class="a" style="left:2146px;top:1049.5px;width:28px;height:3px;background:#fff"></div><div class="a" style="left:2140px;top:1056px;width:40px;height:3px;background:#fff"></div><div class="a" style="left:2146px;top:1062.5px;width:28px;height:3px;background:#fff"></div><div class="a" style="left:2140px;top:1069px;width:40px;height:3px;background:#fff"></div><div class="a" style="left:2146px;top:1075.5px;width:28px;height:3px;background:#fff"></div><div class="a" style="left:2140px;top:1082px;width:40px;height:3px;background:#fff"></div>
<div class="a" style="left:2192px;top:1043px;width:40px;height:3px;background:#c6c6c6"></div><div class="a" style="left:2204px;top:1049.5px;width:28px;height:3px;background:#c6c6c6"></div><div class="a" style="left:2192px;top:1056px;width:40px;height:3px;background:#c6c6c6"></div><div class="a" style="left:2204px;top:1062.5px;width:28px;height:3px;background:#c6c6c6"></div><div class="a" style="left:2192px;top:1069px;width:40px;height:3px;background:#c6c6c6"></div><div class="a" style="left:2204px;top:1075.5px;width:28px;height:3px;background:#c6c6c6"></div><div class="a" style="left:2192px;top:1082px;width:40px;height:3px;background:#c6c6c6"></div>
<div class="a" style="left:2244px;top:1043px;width:40px;height:3px;background:#c6c6c6"></div><div class="a" style="left:2244px;top:1049.5px;width:40px;height:3px;background:#c6c6c6"></div><div class="a" style="left:2244px;top:1056px;width:40px;height:3px;background:#c6c6c6"></div><div class="a" style="left:2244px;top:1062.5px;width:40px;height:3px;background:#c6c6c6"></div><div class="a" style="left:2244px;top:1069px;width:40px;height:3px;background:#c6c6c6"></div><div class="a" style="left:2244px;top:1075.5px;width:40px;height:3px;background:#c6c6c6"></div><div class="a" style="left:2244px;top:1082px;width:40px;height:3px;background:#c6c6c6"></div>
<div class="a" style="left:2296px;top:1032px;width:105px;height:61px;border:2px solid #7b7a79"></div>
<div class="a" style="left:2298px;top:1034px;width:50px;height:57px;background:#474747"></div>
<span class="t" style="left:2302px;top:1036px;font:50px 'Liberation Serif',serif;color:#fff;line-height:1">A</span><div class="a" style="left:2341px;top:1042px;width:2px;height:42px;background:#fff"></div>
<span class="t" style="left:2355px;top:1038px;font:48px 'Liberation Serif',serif;color:#c6c6c6;line-height:1;transform:rotate(90deg)">A</span><div class="a" style="left:2355px;top:1084px;width:38px;height:2px;background:#c6c6c6"></div>
<div class="a" style="left:1850px;top:1120px;width:577px;height:32px;background:#474747"></div>
<span class="t" style="left:1863px;top:1126px;font:bold 19px 'DejaVu Sans Condensed','DejaVu Sans',sans-serif;color:#fff;line-height:1;letter-spacing:-.2px">Character Spacing</span>
<span class="t dj" style="left:1871px;top:1183px;font-size:23px;color:#b2b2b2;letter-spacing:-.2px">Line Spacing</span>
<span class="t dj" style="left:1871px;top:1241px;font-size:23px;color:#b2b2b2;letter-spacing:-.2px">Character</span>
<span class="t dj" style="left:1871px;top:1269px;font-size:23px;color:#b2b2b2;letter-spacing:-.2px">Spacing</span>
<span class="t dj" style="left:1871px;top:1333px;font-size:23px;color:#b2b2b2;letter-spacing:-.2px">Kerning</span>
<div class="a" style="left:2045px;top:1170px;width:180px;height:50px;background:#7f7d7c"></div>
<div class="a" style="left:2134px;top:1170px;width:2px;height:36px;background:#c6c6c6"></div>
<svg style="left:2123px;top:1202px" width="24" height="18"><path fill="#c6c6c6" d="M0 18h24L12 0z"/></svg>
<div class="a" style="left:2233px;top:1170px;width:95px;height:50px;background:#7f7d7c"></div>
<span class="t dj" style="left:2240px;top:1187px;font-size:23px;color:#aaa;letter-spacing:-.3px">100.0</span>
<svg style="left:2331.5px;top:1175.5px" width="13" height="11"><path fill="#c6c6c6" d="M0 11h13L6.5 0z"/></svg>
<svg style="left:2331.5px;top:1201.5px" width="13" height="11"><path fill="#c6c6c6" d="M0 0h13L6.5 11z"/></svg>
<span class="t dj" style="left:2354px;top:1181px;font-size:22px;color:#b2b2b2">%</span>
<div class="a" style="left:2045px;top:1242px;width:180px;height:50px;background:#7f7d7c"></div>
<div class="a" style="left:2175px;top:1242px;width:2px;height:36px;background:#c6c6c6"></div>
<svg style="left:2164px;top:1274px" width="24" height="18"><path fill="#c6c6c6" d="M0 18h24L12 0z"/></svg>
<div class="a" style="left:2233px;top:1242px;width:95px;height:50px;background:#7f7d7c"></div>
<span class="t dj" style="left:2240px;top:1259px;font-size:23px;color:#aaa;letter-spacing:-.3px">150.0</span>
<svg style="left:2331.5px;top:1247.5px" width="13" height="11"><path fill="#c6c6c6" d="M0 11h13L6.5 0z"/></svg>
<svg style="left:2331.5px;top:1273.5px" width="13" height="11"><path fill="#c6c6c6" d="M0 0h13L6.5 11z"/></svg>
<span class="t dj" style="left:2354px;top:1253px;font-size:22px;color:#b2b2b2">%</span>
<div class="a" style="left:2045px;top:1308px;width:105px;height:60px;border:2px solid #7b7a79"></div>
<div class="a" style="left:2098px;top:1310px;width:50px;height:56px;background:#474747"></div>
<span class="t" style="left:2048px;top:1318px;font:44px 'Liberation Serif',serif;color:#c6c6c6;line-height:1;letter-spacing:-2px">AV</span>
<span class="t" style="left:2100px;top:1318px;font:44px 'Liberation Serif',serif;color:#fff;line-height:1;letter-spacing:-9px">AV</span>
<svg style="left:2512px;top:220px" width="36" height="40" viewBox="0 0 36 40"><path fill="#c6c6c6" d="M0 0h36v26L24 40H0z"/><path fill="#8b8b8b" d="M36 26H24v14z"/><path fill="#ddd" d="M35 28l-9 10v-10z"/></svg>
<svg style="left:2511px;top:286px" width="38" height="40" viewBox="0 0 38 40"><rect width="38" height="40" fill="#c6c6c6"/><rect x="3" y="3" width="6" height="6" fill="#6a6a6a"/><rect x="3" y="31" width="6" height="6" fill="#6a6a6a"/><rect x="29" y="3" width="6" height="6" fill="#6a6a6a"/><rect x="29" y="31" width="6" height="6" fill="#6a6a6a"/></svg>
<span class="t" style="left:2514px;top:293px;font:25px 'Liberation Sans',sans-serif;color:#6a6a6a;letter-spacing:-1.500px;line-height:1">Pix</span>
<svg style="left:2508px;top:351px" width="44" height="40" viewBox="0 0 44 40"><path fill="#c6c6c6" d="M23 0c12 0 21 8 21 19 0 12-10 21-21 21-6 0-4-6-7-9s-14 1-15-7C0 12 10 0 23 0z"/><g fill="#636162"><circle cx="14" cy="11" r="3.300"/><circle cx="25" cy="8" r="3.300"/><circle cx="35" cy="15" r="3.300"/><circle cx="34" cy="27" r="3.300"/></g></svg>
<svg style="left:2509px;top:422px" width="42" height="32" viewBox="0 0 42 32"><rect x="0" y="0" width="10" height="4" fill="#c6c6c6"/><rect x="14" y="0" width="12" height="4" fill="#c6c6c6"/><rect x="30" y="0" width="12" height="4" fill="#c6c6c6"/><rect x="0" y="10" width="42" height="6" fill="#c6c6c6"/><rect x="0" y="21" width="42" height="11" fill="#c6c6c6"/></svg>
<svg style="left:2506px;top:480px" width="48" height="48" viewBox="0 0 48 48"><rect x="1.500" y="1.500" width="45" height="45" rx="9" fill="none" stroke="#c6c6c6" stroke-width="2.500"/><rect x="6" y="7" width="36" height="34" rx="9" fill="#c6c6c6"/><circle cx="30.4" cy="30.4" r="6.500" fill="#8a8a8a"/><circle cx="17.6" cy="30.4" r="6.500" fill="#8a8a8a"/><circle cx="17.6" cy="17.6" r="6.500" fill="#8a8a8a"/><circle cx="30.4" cy="17.6" r="6.500" fill="#8a8a8a"/><circle cx="24" cy="24" r="8" fill="#8a8a8a"/></svg>
<svg style="left:2509px;top:549px" width="42" height="42" viewBox="0 0 42 42"><circle cx="21" cy="21" r="18.500" fill="none" stroke="#c6c6c6" stroke-width="3.500"/><path fill="#c6c6c6" d="M21 2a19 19 0 0 1 0 38z"/></svg>
<div class="a" style="left:2500px;top:606px;width:60px;height:60px;background:#474747"></div>
<span class="t" style="left:2509px;top:609px;font:54px 'Liberation Serif',serif;color:#fff;line-height:1">A</span><div class="a" style="left:2547px;top:616px;width:2px;height:42px;background:#fff"></div>
<svg style="left:2507px;top:680px" width="46" height="44" viewBox="0 0 46 44"><path d="M2 6c10-8 14 0 10 14s-6 18-2 20c6 2 6-14 12-14s2 14 10 14" stroke="#c6c6c6" stroke-width="3" fill="none"/><path fill="#c6c6c6" d="M40 10l5 4-12 16-7 3 2-7z"/></svg>
<svg style="left:2506px;top:748px" width="48" height="40" viewBox="0 0 48 40"><rect x="0" y="18" width="48" height="3.500" fill="#c6c6c6"/><rect x="6" y="6" width="9" height="28" fill="#c6c6c6"/><rect x="20" y="11" width="9" height="18" fill="#c6c6c6"/><rect x="34" y="0" width="9" height="40" fill="#c6c6c6"/></svg>
<svg style="left:2507px;top:811px" width="46" height="46" viewBox="0 0 46 46"><polygon points="26.8,1.3 28.0,18.1 44.8,19.9 29.2,26.3 32.6,42.8 21.8,29.9 7.2,38.3 16.1,24.0 3.6,12.7 19.9,16.7" fill="#c6c6c6"/><ellipse cx="23" cy="23" rx="21" ry="6" transform="rotate(42 23 23)" fill="#c6c6c6" stroke="#636162" stroke-width="2"/></svg>
<svg style="left:2508px;top:882px" width="44" height="36" viewBox="0 0 44 36"><rect x="0" y="12" width="30" height="24" fill="#c6c6c6"/><circle cx="31" cy="13" r="12" fill="#c6c6c6" stroke="#636162" stroke-width="2"/><path d="M20 12h11v12" fill="none" stroke="#636162" stroke-width="2"/></svg>
<svg style="left:2506px;top:943px" width="48" height="46" viewBox="0 0 48 46"><polygon points="24.0,3.0 30.5,16.1 44.9,18.2 34.5,28.4 36.9,42.8 24.0,36.0 11.1,42.8 13.5,28.4 3.1,18.2 17.5,16.1" fill="none" stroke="#c6c6c6" stroke-width="2.500" stroke-linejoin="round"/><polygon points="24.0,11.0 28.1,19.3 37.3,20.7 30.7,27.2 32.2,36.3 24.0,32.0 15.8,36.3 17.3,27.2 10.7,20.7 19.9,19.3" fill="#c6c6c6" stroke="#c6c6c6" stroke-width="2" stroke-linejoin="round"/></svg>
<svg style="left:2508px;top:1012px" width="44" height="40" viewBox="0 0 44 40"><path fill="#c6c6c6" d="M2 0h30v28H2z"/><path fill="#c6c6c6" d="M6 30h30l8 9H12z"/><path fill="#c6c6c6" stroke="#636162" stroke-width="2.500" d="M26 30c-8-6-13-11-10-16 3-4 8-2 10 1 2-3 8-5 10-1 3 5-2 10-10 16z"/></svg>
<svg style="left:2508px;top:1076px" width="44" height="44" viewBox="0 0 44 44"><circle cx="22" cy="4" r="3.600" fill="#c6c6c6"/><circle cx="3" cy="17" r="3.600" fill="#c6c6c6"/><circle cx="15" cy="14" r="3.600" fill="#c6c6c6"/><circle cx="28" cy="14" r="3.600" fill="#c6c6c6"/><circle cx="41" cy="17" r="3.600" fill="#c6c6c6"/><circle cx="11" cy="26" r="3.600" fill="#c6c6c6"/><circle cx="32" cy="26" r="3.600" fill="#c6c6c6"/><circle cx="22" cy="34" r="3.600" fill="#c6c6c6"/><circle cx="9" cy="40" r="3.600" fill="#c6c6c6"/><circle cx="34" cy="40" r="3.600" fill="#c6c6c6"/></svg>
<svg style="left:2505px;top:1140px" width="50" height="48" viewBox="0 0 50 48"><polygon points="25.0,3.0 30.9,17.9 46.9,18.9 34.5,29.1 38.5,44.6 25.0,36.0 11.5,44.6 15.5,29.1 3.1,18.9 19.1,17.9" fill="none" stroke="#c6c6c6" stroke-width="3.500" stroke-linejoin="round"/></svg>
<svg style="left:2510px;top:1210px" width="40" height="40" viewBox="0 0 40 40"><g fill="#c6c6c6"><rect x="8" y="8" width="24" height="24" rx="3"/><circle cx="20" cy="6" r="6"/><circle cx="34" cy="20" r="6"/><circle cx="8" cy="8" r="4"/><circle cx="32" cy="32" r="5"/><circle cx="8" cy="32" r="5"/></g><circle cx="6" cy="20" r="5" fill="#636162"/><circle cx="20" cy="35" r="5" fill="#636162"/></svg>
<svg style="left:2507px;top:1278px" width="46" height="36" viewBox="0 0 46 36"><rect x="0" y="4" width="46" height="30" rx="6" fill="#c6c6c6"/><path d="M16 8h14a3 3 0 0 1 0 6H16m0 0h16a3 3 0 0 1 0 6H16m0 0h14a3 3 0 0 1 0 6H16" fill="none" stroke="#636162" stroke-width="2.500"/><rect x="14" y="0" width="22" height="8" rx="3" fill="#c6c6c6"/></svg>
<svg style="left:2509px;top:1342px" width="42" height="40" viewBox="0 0 42 40"><g stroke="#c6c6c6" stroke-width="4.500" stroke-linecap="round"><path d="M2 36L20 6" /><path d="M9 34L27 7" /><path d="M16 32L34 8" /><path d="M23 30L41 9" /><path d="M30 28L48 10" /></g></svg>
<svg style="left:2519px;top:1401px" width="18" height="20"><path fill="#8a8a8a" d="M18 0v20L0 10z"/></svg>
<svg style="left:2507px;top:1503px" width="46" height="46" viewBox="0 0 46 46"><circle cx="23" cy="23" r="22.500" fill="#f4f8f9"/><g transform="translate(23,23)" fill="#3fb5cf"><rect x="-4.500" y="-19" width="9" height="9" transform="rotate(0)"/><rect x="-4.500" y="-19" width="9" height="9" transform="rotate(45)"/><rect x="-4.500" y="-19" width="9" height="9" transform="rotate(90)"/><rect x="-4.500" y="-19" width="9" height="9" transform="rotate(135)"/><rect x="-4.500" y="-19" width="9" height="9" transform="rotate(180)"/><rect x="-4.500" y="-19" width="9" height="9" transform="rotate(225)"/><rect x="-4.500" y="-19" width="9" height="9" transform="rotate(270)"/><rect x="-4.500" y="-19" width="9" height="9" transform="rotate(315)"/><circle r="14"/></g><circle cx="23" cy="23" r="7" fill="#f4f8f9"/></svg>
<svg style="left:2507px;top:1549px" width="46" height="46" viewBox="0 0 46 46"><circle cx="23" cy="23" r="22.500" fill="#f4f8f9"/><path d="M23 7a16 16 0 0 1 15 11" stroke="#3fc3dd" stroke-width="6" fill="none"/><path d="M39 23a16 16 0 0 1-12 15" stroke="#8adbea" stroke-width="6" fill="none"/><path d="M21 39a16 16 0 0 1-13-12" stroke="#2a7f96" stroke-width="6" fill="none"/><path d="M7 21a16 16 0 0 1 10-13" stroke="#2a8fa8" stroke-width="6" fill="none"/></svg>
<svg style="left:2536px;top:1576px" width="24" height="24"><path d="M4 24L24 4M10 24L24 10M16 24L24 16" stroke="#999" stroke-width="2"/></svg>
<div id="title" class="a"></div>
<div class="a" style="left:50px;top:56px;width:24px;height:24px;border-radius:50%;background:#dddddd;border:1px solid #d2d2d2"></div>
<div class="a" style="left:90px;top:56px;width:24px;height:24px;border-radius:50%;background:#dddddd;border:1px solid #d2d2d2"></div>
<div class="a" style="left:130px;top:56px;width:24px;height:24px;border-radius:50%;background:#dddddd;border:1px solid #d2d2d2"></div>
<span class="t" style="left:1012px;top:56px;font-size:27.400px;color:#b2b2b2;letter-spacing:.1px">Silhouette Studio<span style="font-size:16px;position:relative;top:-9px">®</span> Business Edition: Untitled-2</span>
<div id="tb1" class="a"></div><div id="tb2" class="a"></div>
<div class="sep1" style="left:285px"></div>
<div class="sep1" style="left:485px"></div>
<div class="sep1" style="left:685px"></div>
<div class="sep1" style="left:885px"></div>
<div class="sep1" style="left:1265px"></div>
<svg style="left:50px;top:103px" width="26" height="34" viewBox="0 0 26 34"><path fill="#c9c9c9" d="M0 0h16l10 10v24H0z"/><path fill="#474747" d="M16 0v10h10z" opacity=".0"/><path fill="#8d8d8d" d="M16 1v9h9z"/></svg>
<svg style="left:103px;top:104px" width="40" height="32" viewBox="0 0 40 32"><path fill="#c9c9c9" d="M1 0h12l3 3h18v5H9L1 30z"/><path fill="#c9c9c9" d="M11 10h29l-8 22H3z"/></svg>
<svg style="left:168px;top:104px" width="32" height="32" viewBox="0 0 32 32"><path fill="#c9c9c9" d="M0 0h27l5 5v27H0z"/><rect x="7" y="0" width="16" height="9" fill="#474747"/><rect x="17" y="1.500" width="4" height="6" fill="#c9c9c9"/><rect x="4" y="17" width="24" height="11" fill="#474747"/></svg>
<svg style="left:225px;top:105px" width="36" height="30" viewBox="0 0 36 30"><rect x="6" y="0" width="24" height="5" fill="#c9c9c9"/><path fill="#c9c9c9" d="M0 8h36v15h-6v-5H6v5H0z"/><rect x="7" y="20" width="22" height="10" fill="#c9c9c9"/></svg>
<svg style="left:308px;top:100px" width="32" height="40" viewBox="0 0 32 40"><g fill="none" stroke="#c9c9c9" stroke-width="3"><circle cx="6" cy="33" r="4.500"/><circle cx="26" cy="33" r="4.500"/></g><path fill="#c9c9c9" d="M6 0l4 0 14 27-4 3zM26 0l-4 0L8 27l4 3z"/></svg>
<svg style="left:369px;top:101px" width="30" height="38" viewBox="0 0 30 38"><path fill="#c9c9c9" d="M8 0h14l8 8v22H8z" opacity=".75"/><path fill="#c9c9c9" stroke="#474747" stroke-width="1.500" d="M0 7h14l8 8v23H0z"/><path fill="#8d8d8d" d="M14 8v7h7z"/></svg>
<svg style="left:431px;top:102px" width="24" height="36" viewBox="0 0 24 36"><path fill="#c9c9c9" d="M0 5h7v-2a5 5 0 0 1 10 0v2h7v31H0z"/><g fill="#474747"><rect x="8" y="1.500" width="8" height="4"/><rect x="4" y="13" width="16" height="2.500"/><rect x="4" y="18" width="16" height="2.500"/><rect x="4" y="23" width="16" height="2.500"/><rect x="4" y="28" width="16" height="2.500"/></g></svg>
<svg style="left:502px;top:111px" width="44" height="22" viewBox="0 0 44 22"><path fill="#c9c9c9" d="M0 20l5-20 6 7c12-6 26-3 33 6-9-5-19-5-27 0l6 7z"/></svg>
<svg style="left:563px;top:111px" width="44" height="22" viewBox="0 0 44 22"><path fill="#8c8c8c" d="M44 20l-5-20-6 7c-12-6-26-3-33 6 9-5 19-5 27 0l-6 7z"/></svg>
<svg style="left:620px;top:99px" width="46" height="42" viewBox="0 0 46 42"><path d="M37.3 16.4A15 15 0 0 0 22.5 6.0" stroke="#c9c9c9" stroke-width="9.5" fill="none"/><path d="M13.8 9.2L23.0 -2.6L23.0 14.6z" fill="#c9c9c9"/><path d="M19.9 35.7A15 15 0 0 0 36.2 28.0" stroke="#c9c9c9" stroke-width="9.5" fill="none"/><path d="M37.9 18.9L43.4 32.8L28.6 24.2z" fill="#c9c9c9"/><path d="M11.9 11.0A15 15 0 0 0 10.3 28.9" stroke="#c9c9c9" stroke-width="9.5" fill="none"/><path d="M17.4 34.9L2.6 32.8L17.4 24.2z" fill="#c9c9c9"/></svg>
<svg style="left:702px;top:99px" width="42" height="42" viewBox="0 0 42 42"><rect x="2.500" y="2.500" width="37" height="37" fill="none" stroke="#c9c9c9" stroke-width="3.500" stroke-dasharray="7 4.500" stroke-dashoffset="3"/><rect x="18" y="7" width="17" height="17" fill="#c9c9c9"/><rect x="7" y="16" width="19" height="19" fill="#c9c9c9" stroke="#474747" stroke-width="2"/></svg>
<svg style="left:763px;top:99px" width="42" height="42" viewBox="0 0 42 42"><rect x="2.500" y="2.500" width="37" height="37" fill="none" stroke="#c9c9c9" stroke-width="3.500" stroke-dasharray="7 4.500" stroke-dashoffset="3"/><path d="M12 12l18 18M30 12L12 30" stroke="#c9c9c9" stroke-width="3.500"/></svg>
<svg style="left:824px;top:99px" width="42" height="42" viewBox="0 0 42 42"><rect x="2.500" y="2.500" width="37" height="37" fill="none" stroke="#c9c9c9" stroke-width="3.500" stroke-dasharray="7 4.500" stroke-dashoffset="3"/><path fill="#c9c9c9" d="M21 8c9 0 14 6 14 12s-5 13-13 13c-4 0-3-4-5-6s-9 0-9-6c0-7 6-13 13-13z"/><g fill="#474747"><circle cx="16" cy="15" r="2"/><circle cx="23" cy="12" r="2"/><circle cx="29" cy="16" r="2"/><circle cx="30" cy="23" r="2"/></g></svg>
<svg style="left:903px;top:100px" width="40" height="40" viewBox="0 0 40 40"><circle cx="16" cy="16" r="13" fill="none" stroke="#c9c9c9" stroke-width="3.500"/><path d="M26 26l11 11" stroke="#c9c9c9" stroke-width="5" stroke-linecap="round"/><path d="M9 16h14M16 9v14" stroke="#c9c9c9" stroke-width="3.500"/></svg>
<svg style="left:963px;top:100px" width="40" height="40" viewBox="0 0 40 40"><circle cx="16" cy="16" r="13" fill="none" stroke="#c9c9c9" stroke-width="3.500"/><path d="M26 26l11 11" stroke="#c9c9c9" stroke-width="5" stroke-linecap="round"/><path d="M9 16h14" stroke="#c9c9c9" stroke-width="3.500"/></svg>
<svg style="left:1022px;top:100px" width="40" height="40" viewBox="0 0 40 40"><path fill="#c9c9c9" d="M3 3h11v11H3zM16 2a14 14 0 0 1 10 10h-10zM3 16h11v11c-6 0-11-5-11-11z"/><circle cx="26" cy="26" r="8.500" fill="#474747" stroke="#c9c9c9" stroke-width="3"/><path d="M32 32l6 6" stroke="#c9c9c9" stroke-width="4" stroke-linecap="round"/><path d="M21.500 26h9M26 21.500v9" stroke="#c9c9c9" stroke-width="2.500"/></svg>
<svg style="left:1080px;top:100px" width="46" height="40" viewBox="0 0 46 40"><path fill="#c9c9c9" d="M23 0l13 12H28v4H18v-4H10zM0 20h17v-2h12v2h17L23 40z"/></svg>
<svg style="left:1145px;top:100px" width="38" height="40" viewBox="0 0 38 40"><path fill="#c9c9c9" d="M13 40c-3-6-8-10-12-17-1-3 2-4 4-2l5 6L6 6c0-3 4-4 5-1l3 12L15 3c0-3 5-3 5 0l1 14 4-13c1-3 5-2 5 1l-3 15 5-9c2-3 5-1 4 2-2 8-5 16-8 27z"/></svg>
<svg style="left:1203px;top:104px" width="42" height="32" viewBox="0 0 42 32"><rect x="2" y="2" width="38" height="28" fill="none" stroke="#c9c9c9" stroke-width="3.500"/><path d="M12 16h18M21 8v16" stroke="#c9c9c9" stroke-width="3.500"/></svg>
<div class="a" style="left:1561px;top:92px;width:249px;height:56px;background:#36cae2"></div>
<div class="a" style="left:1810px;top:92px;width:750px;height:56px;background:#2596a6"></div>
<span class="t" style="left:1660px;top:104px;font-size:31px;color:#fff;-webkit-text-stroke:.5px #fff;transform:scaleX(.875);transform-origin:0 0">DESIGN</span>
<span class="t" style="left:1918px;top:104px;font-size:31px;color:#8ed0d8;-webkit-text-stroke:.5px #8ed0d8;transform:scaleX(.875);transform-origin:0 0">STORE</span>
<span class="t" style="left:2161px;top:104px;font-size:31px;color:#8ed0d8;-webkit-text-stroke:.5px #8ed0d8;transform:scaleX(.875);transform-origin:0 0">LIBRARY</span>
<span class="t" style="left:2431px;top:104px;font-size:31px;color:#8ed0d8;-webkit-text-stroke:.5px #8ed0d8;transform:scaleX(.875);transform-origin:0 0">SEND</span>
<svg style="left:1603px;top:98px" width="42" height="44" viewBox="0 0 42 44"><rect x="2.500" y="2.500" width="37" height="39" rx="3" fill="#7adcec" stroke="#fff" stroke-width="4"/><g stroke="#fff" stroke-width="3"><path d="M14.7 3v38M3 14.7h36" /><path d="M26.4 3v38M3 26.4h36" /></g></svg>
<svg style="left:1860px;top:98px" width="42" height="42" viewBox="0 0 42 42"><circle cx="21" cy="21" r="20" fill="#8ed0d8"/><path d="M31 9c-8-5-18-1-16 6 2 6 14 4 15 11 1 6-9 9-18 3" fill="none" stroke="#2596a6" stroke-width="5"/></svg>
<svg style="left:2095px;top:96px" width="46" height="44" viewBox="0 0 46 44"><path fill="#8ed0d8" d="M0 0h15l4 5h27v39H0z"/><path fill="#2596a6" d="M19 14h8v10h7L23 35 12 24h7z"/></svg>
<svg style="left:2349px;top:100px" width="58" height="40" viewBox="0 0 58 40"><path fill="#8ed0d8" d="M4 2h50a4 4 0 0 1 4 4v8a4 4 0 0 1-4 4H4a4 4 0 0 1-4-4V6a4 4 0 0 1 4-4z"/><path fill="#8ed0d8" d="M12 18h34l6 20H6z"/><path fill="#2596a6" d="M15 21h28l4 13H11z"/></svg>
<div class="a" style="left:46px;top:160px;width:56px;height:42px;background-color:#fff;background-image:linear-gradient(45deg,#d4d4d4 25%,transparent 25%,transparent 75%,#d4d4d4 75%),linear-gradient(45deg,#d4d4d4 25%,transparent 25%,transparent 75%,#d4d4d4 75%);background-size:12px 12px;background-position:0 0,6px 6px"></div>
<svg style="left:112.5px;top:174px" width="15" height="12"><path fill="#c6c6c6" d="M0 0h15L7.5 12z"/></svg>
<div class="a" style="left:146px;top:160px;width:56px;height:42px;background:#fff"></div><div class="a" style="left:156px;top:170px;width:36px;height:22px;border:2px solid #ee3a3a"></div>
<svg style="left:212.5px;top:174px" width="15" height="12"><path fill="#c6c6c6" d="M0 0h15L7.5 12z"/></svg>
<div class="a" style="left:247px;top:160px;width:191px;height:42px;border:2px solid #535152;background:#605e5f"></div>
<div class="a" style="left:258px;top:180px;width:140px;height:4px;background:#c6c6c6"></div>
<svg style="left:415.5px;top:173.5px" width="15" height="13"><path fill="#c6c6c6" d="M0 0h15L7.5 13z"/></svg>
<div class="a" style="left:462px;top:160px;width:192px;height:42px;border:2px solid #535152;background:#605e5f"></div>
<div class="a" style="left:475px;top:180px;width:139px;height:4px;background:#c6c6c6"></div>
<svg style="left:632.5px;top:173.5px" width="15" height="13"><path fill="#c6c6c6" d="M0 0h15L7.5 13z"/></svg>
<div class="a" style="left:690px;top:156px;width:76px;height:48px;background:#7f7d7c"></div>
<span class="t dj" style="left:697px;top:172px;font-size:23px;color:#d2d2d2;letter-spacing:-.6px">0.00</span>
<svg style="left:769px;top:162px" width="14" height="12"><path fill="#c6c6c6" d="M0 12h14L7 0z"/></svg>
<svg style="left:769px;top:187px" width="14" height="12"><path fill="#c6c6c6" d="M0 0h14L7 12z"/></svg>
<span class="t dj" style="left:805px;top:169px;font-size:24px;color:#c6c6c6">pt</span>
<div class="sep2" style="left:857px"></div>
<div class="sep2" style="left:1584px"></div>
<div class="sep2" style="left:1667px"></div>
<div class="sep2" style="left:1812px"></div>
<div class="sep2" style="left:2086px"></div>
<div class="sep2" style="left:2232px"></div>
<div class="a" style="left:868px;top:166px;width:300px;height:32px;background:#7f7d7c"></div>
<span class="t dj" style="left:875px;top:172px;font-size:23px;color:#c8c8c8;letter-spacing:-.35px">Playfair Display</span>
<svg style="left:1174.5px;top:174px" width="15" height="12"><path fill="#c6c6c6" d="M0 0h15L7.5 12z"/></svg>
<div class="a" style="left:1206px;top:166px;width:86px;height:32px;background:#7f7d7c"></div>
<span class="t dj" style="left:1213px;top:172px;font-size:23px;color:#c8c8c8;letter-spacing:-.5px">16.00</span>
<svg style="left:1298.5px;top:173px" width="15" height="12"><path fill="#c6c6c6" d="M0 0h15L7.5 12z"/></svg>
<span class="t" style="left:1336px;top:158px;font:bold 50px 'Liberation Serif',serif;color:#c6c6c6;line-height:1">B</span>
<span class="t" style="left:1406px;top:158px;font:italic 50px 'Liberation Serif',serif;color:#c6c6c6;line-height:1">I</span>
<span class="t" style="left:1463px;top:158px;font:46px 'Liberation Serif',serif;color:#c6c6c6;line-height:1">U</span><div class="a" style="left:1464px;top:196px;width:32px;height:3px;background:#c6c6c6"></div>
<svg style="left:1526px;top:164px" width="34" height="36" viewBox="0 0 34 36"><rect x="4" y="0" width="26" height="3.200" fill="#c6c6c6"/><rect x="0" y="6.4" width="34" height="3.200" fill="#c6c6c6"/><rect x="4" y="12.8" width="26" height="3.200" fill="#c6c6c6"/><rect x="0" y="19.2" width="34" height="3.200" fill="#c6c6c6"/><rect x="4" y="25.6" width="26" height="3.200" fill="#c6c6c6"/><rect x="0" y="32" width="34" height="3.200" fill="#c6c6c6"/></svg>
<svg style="left:1563px;top:196px" width="10" height="10"><path fill="#c6c6c6" d="M10 0v10H0z"/></svg>
<svg style="left:1606px;top:165px" width="40" height="34" viewBox="0 0 40 34"><rect x="0" y="15" width="40" height="3.500" fill="#c6c6c6"/><rect x="4" y="4" width="6" height="26" fill="#c6c6c6"/><rect x="16" y="9" width="7" height="16" fill="#c6c6c6"/><rect x="29" y="0" width="7" height="34" fill="#c6c6c6"/></svg>
<svg style="left:1648px;top:196px" width="10" height="10"><path fill="#c6c6c6" d="M10 0v10H0z"/></svg>
<svg style="left:1689px;top:164px" width="36" height="36" viewBox="0 0 36 36"><rect x="3" y="3" width="30" height="30" fill="none" stroke="#c6c6c6" stroke-width="2" stroke-dasharray="5 3"/><rect x="9" y="9" width="18" height="18" fill="none" stroke="#c6c6c6" stroke-width="3"/><rect x="0" y="0" width="6" height="6" fill="#c6c6c6"/><rect x="30" y="0" width="6" height="6" fill="#c6c6c6"/><rect x="0" y="30" width="6" height="6" fill="#c6c6c6"/><rect x="30" y="30" width="6" height="6" fill="#c6c6c6"/></svg>
<svg style="left:1752px;top:164px" width="38" height="36" viewBox="0 0 38 36"><rect x="3" y="9" width="24" height="24" fill="none" stroke="#c6c6c6" stroke-width="3"/><rect x="11" y="3" width="24" height="22" fill="none" stroke="#c6c6c6" stroke-width="2" stroke-dasharray="5 3"/><rect x="0" y="6" width="6" height="6" fill="#c6c6c6"/><rect x="24" y="30" width="6" height="6" fill="#c6c6c6"/><rect x="0" y="30" width="6" height="6" fill="#c6c6c6"/><rect x="32" y="0" width="6" height="6" fill="#c6c6c6"/><rect x="8" y="0" width="6" height="6" fill="#c6c6c6"/><rect x="32" y="22" width="6" height="6" fill="#c6c6c6"/></svg>
<svg style="left:1834px;top:163px" width="38" height="38" viewBox="0 0 38 38"><rect x="2" y="2" width="20" height="20" fill="none" stroke="#c6c6c6" stroke-width="3.500"/><rect x="10" y="10" width="20" height="20" fill="#636162" stroke="#c6c6c6" stroke-width="3.500"/><rect x="17" y="17" width="19" height="19" fill="none" stroke="#c6c6c6" stroke-width="2"/></svg>
<svg style="left:1898px;top:163px" width="38" height="38" viewBox="0 0 38 38"><rect x="2" y="2" width="16" height="16" fill="#8f8f8f" stroke="#c6c6c6" stroke-width="3"/><rect x="11" y="11" width="16" height="16" fill="#636162" stroke="#c6c6c6" stroke-width="3.500"/><rect x="20" y="20" width="16" height="16" fill="#8f8f8f" stroke="#c6c6c6" stroke-width="3"/></svg>
<svg style="left:1963px;top:163px" width="38" height="38" viewBox="0 0 38 38"><rect x="2" y="2" width="22" height="22" fill="none" stroke="#c6c6c6" stroke-width="3.500"/><rect x="13" y="13" width="23" height="23" fill="#636162" stroke="#c6c6c6" stroke-width="4.500"/></svg>
<svg style="left:2027px;top:163px" width="38" height="38" viewBox="0 0 38 38"><rect x="2" y="2" width="22" height="22" fill="#8f8f8f" stroke="#c6c6c6" stroke-width="3.500"/><rect x="13" y="13" width="23" height="23" fill="#636162" stroke="#c6c6c6" stroke-width="4"/><rect x="4" y="4" width="18" height="18" fill="#8f8f8f"/></svg>
<svg style="left:2105px;top:161px" width="48" height="40" viewBox="0 0 48 40"><rect x="0" y="14" width="35" height="26" fill="#c6c6c6"/><circle cx="35" cy="14" r="12.500" fill="#c6c6c6"/></svg>
<svg style="left:2166px;top:156px" width="52" height="50" viewBox="0 0 52 50"><polygon points="26.0,4.0 33.1,17.3 47.9,19.9 37.4,30.7 39.5,45.6 26.0,39.0 12.5,45.6 14.6,30.7 4.1,19.9 18.9,17.3" fill="none" stroke="#c6c6c6" stroke-width="3.500" stroke-linejoin="round"/><polygon points="26.0,13.0 30.1,21.3 39.3,22.7 32.7,29.2 34.2,38.3 26.0,34.0 17.8,38.3 19.3,29.2 12.7,22.7 21.9,21.3" fill="#c6c6c6" stroke="#c6c6c6" stroke-width="2" stroke-linejoin="round"/></svg>
<svg style="left:2246px;top:155px" width="56" height="50" viewBox="0 0 52 46"><g fill="none" stroke="#c6c6c6" stroke-width="2.500" stroke-linejoin="round"><path d="M14 2l12 6v12l-12 6-12-6V8zM2 8l12 6 12-6M14 14v12"/><path d="M36 16l13 7v14l-13 7-13-7V23zM23 23l13 7 13-7M36 30v14"/></g></svg>
<svg style="left:2321px;top:164px" width="34" height="34" viewBox="0 0 34 34"><path d="M2 2l30 30M32 2L2 32" stroke="#c6c6c6" stroke-width="5"/></svg>
</body></html>
